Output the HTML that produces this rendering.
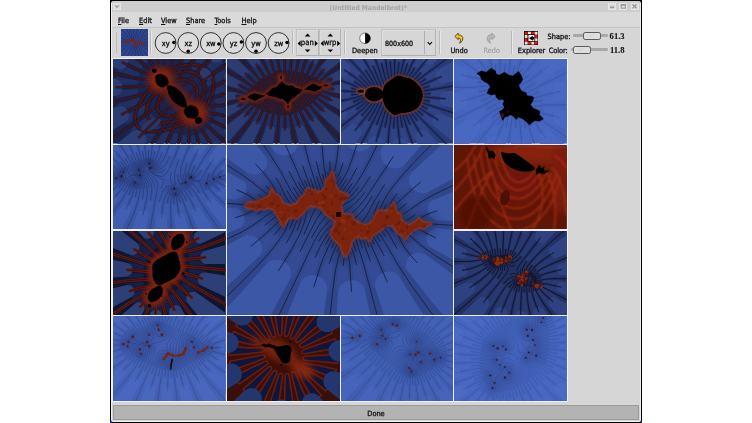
<!DOCTYPE html><html><head><meta charset="utf-8"><title>(Untitled Mandelbrot)*</title><style>
html,body{margin:0;padding:0;background:#fff;}
body{width:752px;height:423px;position:relative;overflow:hidden;font-family:"DejaVu Sans Condensed","DejaVu Sans","Liberation Sans",sans-serif;color:#000;}
.a{position:absolute;}
#win{left:110px;top:0;width:532.2px;height:423px;background:#000;}
#inner{left:111px;top:1.2px;width:530px;height:420.4px;background:#d6d6d6;border-radius:2.5px 2.5px 2px 2px;box-sizing:border-box;border-left:1px solid #f2f2f2;border-right:1px solid #ececec;border-bottom:1.6px solid #f0f0f0;}
#title{left:112px;top:1.2px;width:528px;height:10.6px;background:#cecece;border-radius:2px 2px 0 0;}
#titletxt{filter:blur(0.2px);left:329.6px;top:2.5px;height:10px;line-height:10px;white-space:nowrap;font-size:6.7px;font-weight:bold;color:#a4a4a4;}
.tb{top:2.6px;width:8.4px;height:7.8px;background:#dcdcdc;border:0.5px solid #e6e6e6;box-sizing:border-box;}
#menubar{left:112px;top:11.8px;width:528px;height:15.2px;background:#dadada;}
.mi,.lbl,#statustxt{-webkit-text-stroke-width:0.3px;filter:blur(0.2px);}
.mi{top:15.8px;height:10px;line-height:10px;font-size:7.35px;color:#111;white-space:nowrap;}
.mi u{text-decoration:underline;text-underline-offset:0.5px;text-decoration-thickness:0.6px;}
#toolbar{left:112px;top:27px;width:528px;height:30px;background:#d6d6d6;border-top:1px solid #c4c4c4;box-sizing:border-box;}
.sep{top:31px;width:1px;height:23px;background:#b8b8b8;box-shadow:1px 0 0 #e8e8e8;}
.lbl{font-size:7.35px;line-height:10px;height:10px;white-space:nowrap;color:#111;}
.num{font-family:"Liberation Serif","DejaVu Serif",serif;font-size:8.6px;font-weight:bold;-webkit-text-stroke-width:0.1px;}
.btn{box-sizing:border-box;border:1px solid;border-color:#c2c2c2 #b4b4b4 #b0b0b0 #c2c2c2;background:#d6d6d6;box-shadow:inset 0.5px 0.5px 0 #e6e6e6;}
#tilebg{left:112px;top:57px;width:528px;height:347px;background:#d6d6d6;}
#tilearea{left:112px;top:58px;width:456px;height:344px;background:#f0f0f0;}
.tile{overflow:hidden;}
.tile svg{display:block;}
#status{left:112.9px;top:405px;width:526.4px;height:14.9px;background:#b3b3b3;border:1px solid #9a9a9a;box-sizing:border-box;}
#statustxt{left:112px;top:407.6px;width:528px;height:11px;line-height:11px;text-align:center;font-size:7.35px;color:#111;}
</style></head><body>
<div class="a" id="win"></div><div class="a" id="inner"></div>
<div class="a" id="title"></div><div class="a" id="titletxt">(Untitled Mandelbrot)*</div>
<div class="a tb" style="left:113px"></div>
<div class="a tb" style="left:608px"></div>
<div class="a tb" style="left:619px"></div>
<div class="a tb" style="left:630.5px"></div>
<svg class="a" style="left:111px;top:1px" width="530" height="11" viewBox="111 1 530 11"><path d="M115.3 5.3 L117 7.3 L118.7 5.3" fill="none" stroke="#9a9a9a" stroke-width="1.1"/><rect x="610" y="6.4" width="4.2" height="1.8" fill="#9a9a9a"/><rect x="621.2" y="4.6" width="4.2" height="3.6" fill="none" stroke="#9a9a9a" stroke-width="1"/><rect x="620.7" y="4.1" width="5.2" height="1.6" fill="#9a9a9a"/><path d="M632.6 4.2 L636.6 8.2 M636.6 4.2 L632.6 8.2" stroke="#9a9a9a" stroke-width="1.3"/></svg>
<div class="a" id="menubar"></div><div class="a mi" style="left:118px"><u>F</u>ile</div><div class="a mi" style="left:139px"><u>E</u>dit</div><div class="a mi" style="left:161px"><u>V</u>iew</div><div class="a mi" style="left:186px"><u>S</u>hare</div><div class="a mi" style="left:214.5px"><u>T</u>ools</div><div class="a mi" style="left:241.5px"><u>H</u>elp</div>
<div class="a" id="toolbar"></div>
<div class="a" style="left:116px;top:32px;width:1px;height:21px;background:#bcbcbc"></div>
<div class="a tile" style="left:121px;top:29px;width:27px;height:27px"><svg width="27" height="27" viewBox="0 0 27 27"><rect width="27" height="27" fill="#2e4690"/><path d="M23.1 14.6L30 15.2M21.2 14.9L23.8 16.6 29.7 19M19.8 15.4L23.1 18.7 29.8 23.7M17.5 14.8L21.9 21.2 29.2 29.7M16.2 15.6L23 29.4M15 16.3L15.8 18.6 18.3 29.5M14.2 18.4L14.2 29.6M13.3 17.3L12.2 20.2 9.9 29.7M13.6 14.8L12.2 16.2 10.6 18.5 5.1 29.9M12.7 13.1L10.7 14.9 -0.9 29.9M9 13.8L4.9 18.3 -2.7 24.5M7.4 13.3L3.1 16.5 -2.6 19.3M3.9 13.7L2.1 14.3 -2.7 15.3M3.3 12.4L-2.8 11.8M5.7 11.8L2.8 10.2 -2.4 8.1M6.9 11.3L3.8 8.1 -3 3.1M9.5 11.7L4.7 5.2 -2.1 -2.8M10.9 11L4.1 -2.5M11.3 9.1L8.8 -2.5M12.4 9.9L12.9 6.1 13 -3M13.1 11.7L14.7 8 17.3 -2.9M14 13.7L15.6 11 22.1 -3M16.7 13.7L17.6 11.2 19.5 8.2 28 -2.9M18.9 12.2L22.7 8.2 29.8 2.5M19.4 13.5L23.3 10.8 29.6 7.7M21.8 13.7L24.3 12.7 29.7 11.6" fill="none" stroke="#1a2144" stroke-width="0.7" opacity="0.7"/><path d="M3.7 13 L5.4 12.4 L6.4 11.6 L7.3 12.8 L8.5 13.2 L9.5 12.2 L10.6 12 L11.4 11.1 L11.8 9.7 L12.2 11.3 L13 12.2 L13.4 13.4 L13.9 14.4 L14.3 15.8 L13.9 17.7 L15.1 14.6 L16.3 15 L17.2 14.2 L18.2 14 L18.8 12.8 L19.4 14.2 L20.3 14.8 L21.5 14.4 L22.5 14.5" fill="none" stroke="#7a2410" stroke-width="1.7" stroke-linejoin="round" stroke-linecap="round"/></svg></div>
<div class="a sep" style="left:150.4px"></div>
<div class="a sep" style="left:291.6px"></div>
<div class="a sep" style="left:344px"></div>
<div class="a sep" style="left:438.6px"></div>
<div class="a sep" style="left:510.6px"></div>
<svg class="a" style="left:150px;top:28px" width="145" height="29" viewBox="150 28 145 29"><circle cx="165.6" cy="43" r="10.4" fill="#dcdcdc" stroke="#1c1c1c" stroke-width="0.9"/><circle cx="173.9" cy="42.6" r="1.75" fill="#000"/><circle cx="188.2" cy="43" r="10.4" fill="#dcdcdc" stroke="#1c1c1c" stroke-width="0.9"/><circle cx="188.2" cy="51.3" r="1.75" fill="#000"/><circle cx="210.8" cy="43" r="10.4" fill="#dcdcdc" stroke="#1c1c1c" stroke-width="0.9"/><circle cx="218.8" cy="44.0" r="1.75" fill="#000"/><circle cx="233.4" cy="43" r="10.4" fill="#dcdcdc" stroke="#1c1c1c" stroke-width="0.9"/><circle cx="241.4" cy="42.0" r="1.75" fill="#000"/><circle cx="256.0" cy="43" r="10.4" fill="#dcdcdc" stroke="#1c1c1c" stroke-width="0.9"/><circle cx="256.0" cy="51.3" r="1.75" fill="#000"/><circle cx="278.6" cy="43" r="10.4" fill="#dcdcdc" stroke="#1c1c1c" stroke-width="0.9"/><circle cx="287.0" cy="42.6" r="1.75" fill="#000"/></svg><div class="a lbl" style="left:155.7px;width:20px;top:39.2px;text-align:center;font-size:7.5px">xy</div><div class="a lbl" style="left:178.29999999999998px;width:20px;top:39.2px;text-align:center;font-size:7.5px">xz</div><div class="a lbl" style="left:200.9px;width:20px;top:39.2px;text-align:center;font-size:7.5px">xw</div><div class="a lbl" style="left:223.5px;width:20px;top:39.2px;text-align:center;font-size:7.5px">yz</div><div class="a lbl" style="left:246.1px;width:20px;top:39.2px;text-align:center;font-size:7.5px">yw</div><div class="a lbl" style="left:268.70000000000005px;width:20px;top:39.2px;text-align:center;font-size:7.5px">zw</div>
<div class="a btn" style="left:296px;top:29px;width:22.6px;height:27.4px"></div>
<div class="a lbl" style="left:296px;width:22.6px;top:38.4px;text-align:center;font-size:7.6px">pan</div>
<svg class="a" style="left:296px;top:29px" width="22.6" height="27.4" viewBox="0 0 22.6 27.4"><path d="M8.8 7.4 L11.600000000000001 4.6 L14.400000000000002 7.4Z M8.8 20.4 L11.600000000000001 23.2 L14.400000000000002 20.4Z M4.6 11.6 L1.6 14.4 L4.6 17.2Z M18.8 11.6 L21.8 14.4 L18.8 17.2Z" fill="#000"/></svg>
<div class="a btn" style="left:319px;top:29px;width:22px;height:27.4px"></div>
<div class="a lbl" style="left:319px;width:22px;top:38.4px;text-align:center;font-size:7.6px">wrp</div>
<svg class="a" style="left:319px;top:29px" width="22" height="27.4" viewBox="0 0 22 27.4"><path d="M8.5 7.4 L11.3 4.6 L14.100000000000001 7.4Z M8.5 20.4 L11.3 23.2 L14.100000000000001 20.4Z M4.6 11.6 L1.6 14.4 L4.6 17.2Z M18.2 11.6 L21.2 14.4 L18.2 17.2Z" fill="#000"/></svg>
<svg class="a" style="left:357px;top:31px" width="16" height="14" viewBox="357 31 16 14"><circle cx="365.1" cy="38.3" r="5.3" fill="#fff" stroke="#000" stroke-width="0.5"/><path d="M365.1 33 A5.3 5.3 0 0 1 365.1 43.6Z" fill="#000"/></svg>
<div class="a lbl" style="left:352px;top:46px">Deepen</div>
<div class="a btn" style="left:381px;top:29px;width:54.5px;height:27px"></div>
<div class="a lbl" style="left:385px;top:38.6px;font-size:7.1px">800x600</div>
<div class="a" style="left:424px;top:31px;width:1px;height:23px;background:#b0b0b0"></div>
<svg class="a" style="left:426px;top:40px" width="8" height="7" viewBox="0 0 8 7"><path d="M1.6 2 L3.8 4.4 L6 2" fill="none" stroke="#000" stroke-width="1.1"/></svg>
<svg class="a" style="left:453px;top:32px" width="12" height="12" viewBox="0 0 12 12"><path d="M1.8 4.4 L5.2 1.2 L5.2 2.8 C8.6 2.8 10.2 4.8 9.8 7 C9.5 9 8.2 10.6 6.6 11.2 C7.4 9.6 7.8 8.2 7.2 7 C6.8 6.2 6 5.9 5.2 5.9 L5.2 7.6Z" fill="#f4c428" stroke="#3a2808" stroke-width="0.75" stroke-linejoin="round"/></svg>
<svg class="a" style="left:485px;top:32px" width="12" height="12" viewBox="0 0 12 12"><g transform="translate(12,0) scale(-1,1)"><path d="M1.8 4.4 L5.2 1.2 L5.2 2.8 C8.6 2.8 10.2 4.8 9.8 7 C9.5 9 8.2 10.6 6.6 11.2 C7.4 9.6 7.8 8.2 7.2 7 C6.8 6.2 6 5.9 5.2 5.9 L5.2 7.6Z" fill="#b8bcb2" stroke="#8e8e8e" stroke-width="0.7" stroke-linejoin="round"/></g></svg>
<div class="a lbl" style="left:450.5px;top:46px">Undo</div>
<div class="a lbl" style="left:483.5px;top:46px;color:#a2a2a2;text-shadow:0.5px 0.5px 0 #f0f0f0">Redo</div>
<svg class="a" style="left:524px;top:31px" width="14.4" height="14.4" viewBox="0 0 14 14"><rect x="0" y="0" width="14" height="14" fill="#000"/><rect x="0.7" y="0.7" width="2.9" height="2.9" fill="#e01818"/><rect x="0.7" y="3.9000000000000004" width="2.9" height="2.9" fill="#f4d8d8"/><rect x="0.7" y="7.1000000000000005" width="2.9" height="2.9" fill="#e01818"/><rect x="0.7" y="10.3" width="2.9" height="2.9" fill="#f4d8d8"/><rect x="3.9000000000000004" y="0.7" width="2.9" height="2.9" fill="#f4d8d8"/><rect x="3.9000000000000004" y="10.3" width="2.9" height="2.9" fill="#e01818"/><rect x="7.1000000000000005" y="0.7" width="2.9" height="2.9" fill="#e01818"/><rect x="7.1000000000000005" y="10.3" width="2.9" height="2.9" fill="#f4d8d8"/><rect x="10.3" y="0.7" width="2.9" height="2.9" fill="#f4d8d8"/><rect x="10.3" y="3.9000000000000004" width="2.9" height="2.9" fill="#e01818"/><rect x="10.3" y="7.1000000000000005" width="2.9" height="2.9" fill="#f4d8d8"/><rect x="10.3" y="10.3" width="2.9" height="2.9" fill="#e01818"/><rect x="3.6" y="3.2" width="7.2" height="7.4" fill="#000"/><rect x="4.3" y="3.9" width="5.8" height="6" fill="#f8f0f0"/><path d="M4.8 7 L8.6 4.6 L8.6 9.4Z" fill="#000"/><rect x="8.4" y="5.8" width="1.4" height="2.4" fill="#000"/></svg>
<div class="a lbl" style="left:517.8px;top:46px">Explorer</div>
<div class="a lbl" style="left:547.6px;top:31.6px">Shape:</div>
<div class="a lbl" style="left:548.8px;top:45.9px;letter-spacing:-0.1px">Color:</div>
<div class="a lbl num" style="left:609.6px;top:31px">61.3</div>
<div class="a lbl num" style="left:609.9px;top:45.4px">11.8</div>
<div class="a" style="left:572.9px;top:34.2px;width:34.80000000000007px;height:2.8px;background:#a8a8a8;border-radius:1.2px"></div>
<div class="a" style="left:583px;top:31.5px;width:18px;height:8.2px;background:#dedede;border:0.8px solid #5a5a5a;border-radius:2.2px;box-sizing:border-box"></div>
<svg class="a" style="left:589px;top:33.6px" width="6" height="4" viewBox="0 0 6 4"><path d="M0.6 3 L2.6 0.8 M2.6 3 L4.6 0.8" stroke="#a8a8a8" stroke-width="0.6"/><path d="M1.2 3.2 L3.2 1 M3.2 3.2 L5.2 1" stroke="#f4f4f4" stroke-width="0.5"/></svg>
<div class="a" style="left:571px;top:48.300000000000004px;width:36.700000000000045px;height:2.8px;background:#a8a8a8;border-radius:1.2px"></div>
<div class="a" style="left:572.9px;top:45.6px;width:18px;height:8.2px;background:#dedede;border:0.8px solid #5a5a5a;border-radius:2.2px;box-sizing:border-box"></div>
<svg class="a" style="left:578.9px;top:47.7px" width="6" height="4" viewBox="0 0 6 4"><path d="M0.6 3 L2.6 0.8 M2.6 3 L4.6 0.8" stroke="#a8a8a8" stroke-width="0.6"/><path d="M1.2 3.2 L3.2 1 M3.2 3.2 L5.2 1" stroke="#f4f4f4" stroke-width="0.5"/></svg>
<div class="a" id="tilebg"></div><div class="a" id="tilearea"></div>
<div class="a tile" style="left:112.80px;top:59.10px;width:112.80px;height:84.60px"><svg width="100%" height="100%" preserveAspectRatio="none" viewBox="0 0 113 85"><rect width="113" height="85" fill="#19244e"/><filter id="g11" x="-50%" y="-50%" width="200%" height="200%"><feGaussianBlur stdDeviation="3.0"/></filter><filter id="g11b" x="-50%" y="-50%" width="200%" height="200%"><feGaussianBlur stdDeviation="0.5"/></filter><path d="M123.2 62.6L103.9 57.2C101.3 56.5 100.3 60.5 102.8 61.6L120.2 69.2ZM109.2 84.3L95.9 70.8C94.1 69 91.2 71.5 92.6 73.5L103.8 88.9ZM87 97.4L82.1 78C81.5 75.3 77.4 76.6 77.7 79.4L79.9 99.3ZM60.2 98.1L65 77.7C65.7 74.7 61.3 72.8 60.2 75.7L52.7 96.4ZM34.2 86.7L47.8 68.1C49.9 65.3 45.8 61.6 43.5 64.2L27.5 82.1ZM13.3 66L33.1 52.5C35.9 50.6 33.1 46 30.1 47.6L9.9 58.6ZM3.5 39.1L24 34.8C27 34.2 25.9 29.7 22.9 29.9L1.9 31.6ZM4.7 12.2L24 17.6C26.6 18.3 27.5 14.2 25.1 13.2L6.7 5.2ZM17.7 -10.2L31 3.3C32.8 5.2 35.8 2.6 34.3 0.5L23.1 -14.9ZM40.4 -22.5L45 -4.1C45.7 -1.4 49.9 -1.8 49.6 -4.5L47.4 -24.4ZM67.1 -23.2L62.2 -2.8C61.5 0.2 66.1 1.7 67.1 -1.2L74.7 -21.8ZM93.1 -11.9L79.4 6.6C77.3 9.5 81.4 13.2 83.7 10.6L99.7 -7.3ZM113.4 9.1L94.4 22.1C91.6 24 94.5 28.6 97.5 27L117.7 15.9ZM124.2 35.5L103.7 39.8C100.7 40.4 101.6 45 104.6 44.7L125.5 43.1ZM117.7 74.6L100.5 64.5C98.3 63.2 96.2 66.5 98.2 68.1L113 80ZM98.9 92L89.7 75.4C88.4 73.1 84.7 74.7 85.6 77.1L92.7 95.8ZM73.8 99.2L73.8 79.2C73.8 76.3 69.5 75.3 69.1 78.2L66.3 99ZM46.8 93.6L56.3 73.8C57.7 70.8 53.5 67.8 51.8 70.6L39.7 90.2ZM22.8 77.3L40.1 60.7C42.6 58.2 38.9 54 36.1 56.2L17.4 71.2ZM6.5 53L27.6 43.8C30.5 42.5 28.4 37.9 25.4 38.9L4.3 45.4ZM2 25.4L23 25.9C25.8 26 25.5 21.6 22.7 21.2L3 18ZM10 0.3L26.5 9.8C28.7 11.1 30.8 7.7 28.7 6.1L13.9 -5.8ZM28.1 -18L37.3 -1.4C38.6 0.9 42.4 -0.7 41.4 -3.2L34.7 -20.9ZM53.5 -24.3L53.4 -4.3C53.4 -1.5 57.8 -0.5 58.2 -3.3L61 -24.1ZM80.8 -19.8L70.9 1C69.5 4 73.7 7 75.4 4.2L87.5 -15.4ZM104.4 -2.5L87.1 14.2C84.5 16.6 88.6 20.6 91.4 18.3L110.1 3.3ZM120.2 22L100 30.8C97.1 32.1 99.2 36.7 102.3 35.7L123.3 29.2ZM125.1 49.2L104.1 48.7C101.4 48.7 101.6 53 104.3 53.4L124.1 56.6Z" fill="#222f5e" /><path d="M137.8 70L122.7 64.6C113.6 61.3 107.3 73.1 115 79L137.3 95.9ZM129.2 109.4L108.4 86.5C101.9 79.2 91 87.1 95.1 96L101.3 109.6ZM87.9 109.4L85.2 98.7C82.8 88.9 68.9 90.4 68.4 100.4L67.9 109.4ZM55.5 109.1L57.9 98.3C60.2 88 46 83 41.1 92.4L32.3 109.2ZM14.9 109.2L31.4 86.6C37.9 77.7 26.9 66.4 18.4 73.4L-24.8 108.9ZM-24.4 85.6L11.7 64.2C21 58.8 14.5 44.8 4.2 47.8L-24.7 56ZM-24.8 40.2L2 37.1C12.1 36 11.9 21.7 1.9 19.9L-24.7 15.4ZM-24.9 -0.7L4.2 9.9C13.5 13.3 19.7 1.2 11.9 -4.7L-14.4 -24.7ZM7.1 -24.9L18.5 -12.3C25 -5.1 36.4 -12.2 32.4 -21.1L30.7 -24.8ZM105.3 -24.7L95.9 -11.8C89.3 -2.9 100.6 8.2 109.1 1.2L137.6 -22.3ZM137.3 -2.5L115.8 10.3C106.5 15.9 113.1 29.9 123.5 26.8L137.9 22.6ZM137.6 36L125.7 37.5C115.6 38.7 115.1 53 125.2 54.7L137.1 56.6Z" fill="#2c3d74" /><g filter="url(#g11b)" fill="none" stroke-linecap="round"><g stroke="#0f1636" stroke-width="4.2" opacity="0.7"><path d="M52 12 C97 -8 114 22 90 52"/><path d="M57 16 C88 4 100 26 86 47"/><path d="M62 22 C82 16 88 32 82 44"/><path d="M40 27 C8 60 18 88 74 64"/><path d="M44 31 C24 56 32 74 71 60"/><path d="M50 34 C38 50 46 62 69 56"/></g><g stroke="#541406" stroke-width="1.9"><path d="M52 12 C97 -8 114 22 90 52"/><path d="M57 16 C88 4 100 26 86 47"/><path d="M62 22 C82 16 88 32 82 44"/><path d="M40 27 C8 60 18 88 74 64"/><path d="M44 31 C24 56 32 74 71 60"/><path d="M50 34 C38 50 46 62 69 56"/></g></g><ellipse cx="93" cy="15" rx="7" ry="5" fill="#2a3a70" transform="rotate(45 93 15)" /><ellipse cx="38" cy="66" rx="11" ry="5" fill="#283768" transform="rotate(-30 38 66)" /><g filter="url(#g11b)"><path d="M86.4 53.5L96.3 54.1 106.2 55.7 119.9 58.7 137.3 63.1M85.9 60.8L88.7 62.3 95.6 68.2 137.7 106.6M81.2 58.5L80.8 59.9 81.1 64.9 83.1 74.7 87.4 89.1 94.5 109.9M74.1 59L70.3 67 67.2 77.5 64.4 91.3 61.8 109.1M71.1 52.6L67.6 53.2 63.1 55.3 58.5 59.1 53.8 64.3 42.1 80.5 24 109.3M51.7 28.2L52.2 33 50.9 37.8 48.2 42 42.6 47.7 34.1 54.7 21.3 64.3 -24.5 96.5M44.9 26.9L40.2 30.2 35.8 32.6 30.3 34.9 22.7 37.5 3.3 42.3 -24.1 47.8M41.6 21.2L29.7 20.3 16.9 18.1 -0.6 14 -24.8 7.5M43.3 14.6L42.1 13.6 38.3 11.7 33.6 8 -2.7 -24.9M46.3 15.7L46 9 44.5 1.1 41.5 -9.5 36.5 -24.7M53 15.8L56.5 8.8 59.3 0.3 61.8 -10.5 64.1 -24.3M56 22.2L59.6 21.6 64.1 19.4 68 16.3 72.2 12 82.4 -1.6 97 -24.3M75.5 47L75.2 41.5 76.1 37.6 78.7 33.3 83.4 28.2 91 21.7 101.4 13.8 137.2 -11.7M82.4 48L91 42.5 101.2 38.4 115.6 34.3 137.1 29.6M85.4 56.7L92 58.9 98.5 61.6 119 71.9M83.5 59.3L84.3 60.5 85.2 64.1 87.6 68.5 101.4 90.5M77.6 59.7L76.3 66.4 75.8 75.3 76 86.3 76.9 99.3M71.5 56.4L68.6 59 65.9 62 61 69.5 55.7 80.3 49.7 95.1M72.6 48.9L68.7 46.3 64.9 45.2 62 45.7 58.4 47.5 53.6 51.1 47.7 56.5 25.4 79.4M48.1 28.1L45.8 32.1 43.3 35.3 36.4 41 25.2 47.6 8.1 55.9M42.7 24.4L34.3 26.5 26.4 27.6 15.4 28.3 2.4 28.5M42.9 18.1L29.3 13.1 8.8 2.9M42.2 11.5L41.3 9 38.4 3.8 25.6 -16.5M49.6 15L51 7.5 51.5 -0.5 51.3 -11.5 50.5 -24.5M55.1 18.6L57.9 16.4 60.6 13.5 65.7 6.1 71.1 -4.6 77.6 -20.3M54.5 25.9L58.4 28.5 62.3 29.6 65.2 29.2 68.8 27.4 73.6 23.8 79.4 18.3 102.5 -5.3M79.1 46.9L82.4 41.6 84.3 39.3 91.2 33.6 102.4 27 119.5 18.7M85.4 50.3L92.9 48.3 100.9 47.1 111.8 46.4 124.8 46.2" fill="none" stroke="#0f1636" stroke-width="2.8" opacity='0.65'/><path d="M86.4 53.5L96.3 54.1 106.2 55.7 119.9 58.7 137.3 63.1M85.9 60.8L88.7 62.3 95.6 68.2 137.7 106.6M81.2 58.5L80.8 59.9 81.1 64.9 83.1 74.7 87.4 89.1 94.5 109.9M74.1 59L70.3 67 67.2 77.5 64.4 91.3 61.8 109.1M71.1 52.6L67.6 53.2 63.1 55.3 58.5 59.1 53.8 64.3 42.1 80.5 24 109.3M51.7 28.2L52.2 33 50.9 37.8 48.2 42 42.6 47.7 34.1 54.7 21.3 64.3 -24.5 96.5M44.9 26.9L40.2 30.2 35.8 32.6 30.3 34.9 22.7 37.5 3.3 42.3 -24.1 47.8M41.6 21.2L29.7 20.3 16.9 18.1 -0.6 14 -24.8 7.5M43.3 14.6L42.1 13.6 38.3 11.7 33.6 8 -2.7 -24.9M46.3 15.7L46 9 44.5 1.1 41.5 -9.5 36.5 -24.7M53 15.8L56.5 8.8 59.3 0.3 61.8 -10.5 64.1 -24.3M56 22.2L59.6 21.6 64.1 19.4 68 16.3 72.2 12 82.4 -1.6 97 -24.3M75.5 47L75.2 41.5 76.1 37.6 78.7 33.3 83.4 28.2 91 21.7 101.4 13.8 137.2 -11.7M82.4 48L91 42.5 101.2 38.4 115.6 34.3 137.1 29.6M85.4 56.7L92 58.9 98.5 61.6 119 71.9M83.5 59.3L84.3 60.5 85.2 64.1 87.6 68.5 101.4 90.5M77.6 59.7L76.3 66.4 75.8 75.3 76 86.3 76.9 99.3M71.5 56.4L68.6 59 65.9 62 61 69.5 55.7 80.3 49.7 95.1M72.6 48.9L68.7 46.3 64.9 45.2 62 45.7 58.4 47.5 53.6 51.1 47.7 56.5 25.4 79.4M48.1 28.1L45.8 32.1 43.3 35.3 36.4 41 25.2 47.6 8.1 55.9M42.7 24.4L34.3 26.5 26.4 27.6 15.4 28.3 2.4 28.5M42.9 18.1L29.3 13.1 8.8 2.9M42.2 11.5L41.3 9 38.4 3.8 25.6 -16.5M49.6 15L51 7.5 51.5 -0.5 51.3 -11.5 50.5 -24.5M55.1 18.6L57.9 16.4 60.6 13.5 65.7 6.1 71.1 -4.6 77.6 -20.3M54.5 25.9L58.4 28.5 62.3 29.6 65.2 29.2 68.8 27.4 73.6 23.8 79.4 18.3 102.5 -5.3M79.1 46.9L82.4 41.6 84.3 39.3 91.2 33.6 102.4 27 119.5 18.7M85.4 50.3L92.9 48.3 100.9 47.1 111.8 46.4 124.8 46.2" fill="none" stroke="#541406" stroke-width="1.25" /></g><g filter="url(#g11)"><ellipse cx="47.9" cy="20.8" rx="13" ry="12.5" fill="#86220c" /><ellipse cx="80.5" cy="55" rx="14" ry="12.5" fill="#86220c" /><ellipse cx="64.2" cy="37.8" rx="19" ry="9.5" fill="#701c0a" transform="rotate(49.2 64.2 37.8)" /></g><ellipse cx="41.4" cy="11.9" rx="2.4" ry="2.1" fill="#000" /><path d="M42.6 17.4C43.3 15.8 45.9 15 47.6 15C49.4 15 51.7 16 53.1 17.4C54.5 18.8 55.7 21.9 55.8 23.4C55.9 24.9 54.8 25.8 53.6 26.6C52.4 27.4 50.2 28.7 48.5 28.4C46.8 28.1 44.5 26.6 43.5 24.8C42.5 23 41.9 19 42.6 17.4Z" fill="#000"/><path d="M54.4 26.4 C64.5 26 75 38.5 73.9 49 C63 48.8 53.2 37 54.4 26.4Z" fill="#000"/><path d="M71.3 50.7C72.2 49.1 75.4 46.7 77.5 46.4C79.6 46.1 82.6 47.4 84 48.9C85.4 50.4 86.1 53.6 85.8 55.4C85.5 57.2 83.9 59 82.2 59.7C80.5 60.4 77.4 60 75.7 59.4C74 58.8 72.7 57.2 72 55.8C71.3 54.3 70.4 52.3 71.3 50.7Z" fill="#000"/><ellipse cx="85.7" cy="61.6" rx="3.7" ry="3.3" fill="#000" transform="rotate(-30 85.7 61.6)" /></svg></div>
<div class="a tile" style="left:226.60px;top:59.10px;width:113.20px;height:84.60px"><svg width="100%" height="100%" preserveAspectRatio="none" viewBox="0 0 113 85"><rect width="113" height="85" fill="#1a2652"/><filter id="g12" x="-50%" y="-50%" width="200%" height="200%"><feGaussianBlur stdDeviation="1.5"/></filter><filter id="g12b" x="-50%" y="-50%" width="200%" height="200%"><feGaussianBlur stdDeviation="0.45"/></filter><path d="M106.1 37.2L95.8 33.2C94.4 32.6 92.7 34.2 94 34.9L104.7 40.3ZM100.7 49L89.7 40.3C88.4 39.3 86.8 41.6 88.1 42.8L98.5 52.2ZM90.9 59.4L81.6 47.6C80.5 46.1 78.3 48.3 79.4 49.9L87.3 61.4ZM78.2 67.1L72 53.5C71.3 51.8 68.8 53.4 69.4 55.2L74.3 68.3ZM63.9 71.6L61.7 56.7C61.5 55 58.7 55.2 58.8 57L59.8 71.9ZM48.9 71.4L50.7 56.5C50.9 54.6 47.8 54.7 47.5 56.6L44.7 71.3ZM34.5 67.7L39.3 54.5C39.9 52.8 37 51.9 36.2 53.7L30.7 66.5ZM22 61L29.2 50.1C30.1 48.7 27.7 47.5 26.7 48.9L18.7 59.1ZM12.5 52L21.7 44.3C22.8 43.3 20.8 41.9 19.7 42.8L15 46.5 10.7 49.2ZM7.4 41.5L13.2 40.6C15 40.3 17.8 40.2 16.1 39.6L13.1 38.7 8.1 38.4ZM9 30.1L19.2 34C20.6 34.6 22.4 32.9 21 32.3L10.3 26.9ZM15.1 18.7L25.3 26.7C26.7 27.8 28.2 25.4 26.9 24.3L17.3 15.6ZM24.7 8.4L33.3 19.5C34.5 20.9 37.1 19.6 36.1 18.1L27.7 5.7ZM37.2 0.6L42.9 13.4C43.7 15.1 46.5 14.4 45.9 12.6L40.8 -1.5ZM51.4 -3.8L53.6 11C53.9 12.9 56.7 11.7 56.5 9.8L55.6 -4.2ZM66.5 -4.6L64.8 10.3C64.6 12.2 67.5 13.4 67.9 11.5L70.5 -3.3ZM81 -0.6L76 13.5C75.4 15.3 78.3 16.2 79 14.5L84.9 0.7ZM93.5 6.3L86.4 17.2C85.5 18.6 87.8 19.8 88.8 18.5L96.7 8.2ZM102.8 15.4L98.1 19.1 93.8 23.2C92.7 24.3 94.6 25.7 95.8 24.7L99.5 21.4 104.6 18.2ZM107.7 25.7L101.9 26.6C99.9 26.8 96.7 26.9 98.6 27.5L102 28.6 108 28.8ZM104.2 43.3L93 36.7C91.6 35.9 90.1 37.9 91.4 38.8L102 46.2ZM95.8 54L85.9 44.1C84.7 42.8 82.4 44.7 83.6 46.1L93.5 57.4ZM84.9 63.7L77 50.9C76 49.3 73.6 51.1 74.4 52.7L81.4 66ZM71.2 69.7L67.2 56.3C66.6 54.5 63.7 54.5 64.1 56.3L67.3 70.9ZM56.4 71.8L56.3 56.9C56.3 55 53.3 55.4 53.2 57.3L52.3 72.3ZM41.4 70.8L45.1 55.3C45.5 53.4 42.4 53.3 41.8 55.1L37.5 69.5ZM27.8 65L34 52.5C34.8 50.9 32.3 49.4 31.4 50.9L24.4 63ZM17 56.6L24.9 47.6C25.9 46.5 24.1 44.8 23 45.9L14.4 54.2ZM9.6 46.8L14.9 44 18.8 40.9C20.1 39.8 17.3 39.6 15.8 40.6L13.6 42.1 8.9 43.7ZM7.8 35.9L12.8 36.6 18.5 38.3C19.8 38.6 20.1 36.4 18.8 36L8.3 32.7ZM11.7 24.4L22.1 30.4C23.4 31.2 25 29.2 23.7 28.3L13 20.9ZM19.2 13.1L29.1 23C30.3 24.3 32.5 22.4 31.4 21L22.2 10.4ZM30.7 4.1L37.9 16.1C38.9 17.7 41.8 16.8 40.9 15.1L34 1.8ZM44.2 -1.9L48.2 11.5C48.7 13.2 51.4 12.3 51.1 10.5L48.1 -3.2ZM58.9 -5.1L59.1 9.9C59.1 11.8 62.1 12.4 62.2 10.5L63.1 -4.5ZM73.9 -2.8L70.5 11.8C70 13.7 72.9 14.8 73.5 12.9L77.8 -1.4ZM87.7 2.2L81.6 14.7C80.8 16.4 83.3 17.9 84.2 16.4L91.1 4.2ZM98.5 10.7L90.6 19.8C89.6 21 91.4 22.7 92.5 21.6L101 13.2ZM105.7 20.5L100.4 23.3 97 26.3C95.2 27.9 98.7 26.3 100.9 25.5L107.2 23.3ZM107.3 31.4L102.4 30.6 97.6 29.2C96.2 28.8 94.9 30.9 96.3 31.3L106.8 34.5Z" fill="#212e60" /><path d="M137.7 46.1L119.2 41.9 106.7 38.4C102 37.1 99.2 43.7 103.5 45.9L117.7 53.2 137.8 62.3ZM137.9 73.8L115.7 60.4 100.7 50.4C96.3 47.4 90.8 53.2 94.6 56.9L111.8 73.5 137.3 96.1ZM133.1 109.6L107.7 81.3 90.4 60.6C86.8 56.3 80.1 61.4 82.9 66.2L108.2 109.3ZM96 109.8L77.6 68.7C75.4 63.5 67.3 66.1 68.6 71.6L78 109.4ZM67.9 109.4L62.9 72.7C62.2 67.1 53.6 67.8 53.4 73.5L51.9 109.5ZM42.1 109.7L47.7 72.1C48.5 66.5 40.2 65 38.4 70.3L25.3 109.2ZM13.9 109.4L25.2 86 32.9 68.6C35.1 63.7 28 59.8 24.9 64.2L12 83.2 -7.9 109.5ZM-24.6 109.5L4 80.1 20.4 61.3C23.7 57.5 18.2 52.5 14.3 55.5L-0.7 67.2 -24.5 83.7ZM-24.8 71.5L-2.6 59.9 11.1 51.8C15 49.5 12.5 43.7 8.2 44.9L-24.5 54.3ZM-24.4 44.8L6.3 40.8C10.7 40.2 11.5 33.9 7.1 33.4L-24.7 30ZM-24.6 20.7L-5.1 25.1 8.4 28.9C13.1 30.2 15.8 23.5 11.5 21.3L-2.8 14 -24.6 4.1ZM-24.7 -7.7L-1.5 6.2 14.3 16.8C18.7 19.7 24.2 13.9 20.4 10.2L5.4 -4.4 -17 -24.4ZM-1.9 -24.7L13.2 -7.4 24.6 6.5C28.2 10.8 35.4 6.4 32.6 1.6L17.7 -24.4ZM27.3 -24.7L37.8 -0.9C40 4.2 48.1 1.6 46.8 -3.8L41.8 -24.2ZM49.8 -24.8L52.5 -5C53.2 0.6 61.7 0 62 -5.7L62.7 -24.7ZM70.5 -24L67.8 -5.2C67 0.4 75.4 2.1 77.1 -3.2L83.9 -24.2ZM92.8 -24.3L82.6 -1.5C80.4 3.5 87.6 7.5 90.6 3L98.9 -9.5 110.1 -24.9ZM122.5 -24.4L106 -6.9 95 6C91.8 9.8 97.2 14.9 101.1 11.8L115.3 0.7 137.4 -14.7ZM137.4 -2.8L117.1 8 104.2 15.6C100.3 17.9 103.6 23.3 108 22.1L137.8 13.6ZM137.6 22.8L108.8 26.5C104.5 27 103.6 33.3 108 33.8L137.8 37.1Z" fill="#2c3c72" /><g filter="url(#g12b)"><path d="M93.4 31L100.7 34.1 108.4 36.3 120.2 38.7 137.9 41.6M84 32.3L87.7 36.8 90.6 39.6 101 47.4 115.6 56.1 137.7 67.8M73.4 34.8L86.1 51.2 97.9 64.7 114.5 82.1 138 105.3M65.8 39.8L72.1 50.9 87.2 81.3 102 109.7M61.5 49L72.9 109.6M55.3 40.8L53.3 48.1 52.2 55 47 109.7M44.7 38.2L41.5 51.5 36.3 67.7 29.2 86.4 19.7 109.5M34.7 39.7L32.4 46 29.8 51.4 26.2 57.5 21.2 64.9 7 83 -15.9 109.5M25.4 41.5L18.8 48.6 10.2 55.5 -3.1 64.3 -24.5 77.3M13.9 41L4.7 43.4 -24.6 49.5M36.9 36.7L33.4 36.6 31.3 37.1 22.6 36.7 14.3 33.1 6.7 30.9 -6.1 28.4 -24.9 25.4M32 35L23.7 26.9 13.2 19.2 -2.3 10.1 -24.5 -1.5M41.8 36L42.3 34.5 41.9 33.6 34.4 23 26.3 12.8 11.6 -3.5 -9.4 -24.9M48.4 27.6L22.8 -24.3M53.7 17.6L45.9 -24.2M61.4 26.3L63.4 10.8 66.5 -24M70.7 29.5L70.7 28.2 72.2 22.4 77 6 81.9 -8.1 88.5 -24.9M81.1 26.8L85.3 16.7 92 5.6 101.6 -7.2 116.2 -24.9M89.3 26.2L98.1 17.5 105.2 11.9 117.6 3.5 137.3 -8.4M101.8 25.9L137.9 18.2M83.9 31.3L88.6 31.5 91.1 34 94.4 36.4 105 42M76.3 31L87.7 44.2 97.2 53.1M69 37.1L74.1 44.1 86.1 62.6M62.5 43.5L64.9 47.4 66.6 51.1 72.8 69M59.6 43.6L58.2 48 57.6 51.9 58.1 71.9M50.9 38.9L50.7 38 50.3 38.7 49.5 41.2 43.2 70.6M39.5 35.5L39.4 39.3 37 48 33.7 56.3 29.4 65.4M28.9 42.7L27.9 44.9 25.2 49.1 17.5 58.2M21.6 40.2L15.3 45 10.1 48M20 39L17.5 39.1 13.1 37.7 8.1 37.2M27.6 35.2L26.3 35 19.8 30.3 11 25.6M38 34.7L27.3 22.9 17.8 14M44.8 29.4L28.9 4.5M52.2 24.8L48 14.9 42.3 -2.2M58.6 26.5L58.1 26.8 56.9 26.3 56.2 24.5 57.8 14.8 57.3 -4.2M65.6 26.4L67 22 72.3 -3.4M75.5 30.4L77 24 79.6 16.4 86.1 1.8M86.2 24.7L91.5 16.7 97.3 9.8M95.1 26.7L100 22.4 105.2 19.3M96 27.9L102.4 29.6 107.4 30.1M90.7 31.4L94.5 33.8M80.4 31.6L88.6 41.2M69.3 35.4L69.8 35.1 71.1 35.9 80 48M64.5 39L63.4 39.4 63.2 40.3 67.3 47.1 70.3 53.4M60.2 48.4L59.9 50.9 60.2 55.9M52.2 39.8L52.2 41.2 49.2 55.9M42.1 37.4L40.8 44.1 38.2 52.7M31.8 40.7L30.2 45.1 28.4 48.7M24.4 40.3L21.8 42.6M23 34.9L21.4 33.9M37 35.9L34.6 34.6 27.1 26.5M42.7 30.7L35 19.1M50.8 26.3L49.6 24.4 45 14.4M54.8 21.8L54.7 19.4 55.4 16.8 55.2 11.8M64 26.2L66.2 11.9M71.9 30.4L72.9 29.7 77.4 14.4M84.7 24.5L85.3 22.2 87.1 18.7M91.9 26.9L94.4 24.3M87.9 33.7L91.5 37.1M74.6 31.4L75.1 33 84.5 44.7M68 39.5L75.3 51.1M61.7 45.9L63.4 49.1 65.2 54.9M58.4 42.1L57.1 43.9 55.9 47.7 54.8 56.6M47.5 38.6L43.6 54.7M37.5 38.2L33.3 50.4M27.4 42.3L24.5 46M20.1 37.6L19.6 37.4M27.6 33.7L23.6 30M39.3 34.2L37.4 30.9 30.5 22.4M46.1 28.1L40.1 16.8M54.1 22.5L51.6 17.7 49.9 11.9M58.9 24.9L60.6 11.2M68.1 28.4L71.8 13.3M77.7 29.7L82.3 16.9M88.4 25.1L91 21.5M93 29.3L95.5 29.8" fill="none" stroke="#101838" stroke-width="2.6" opacity='0.6'/><path d="M93.4 31L100.7 34.1 108.4 36.3 120.2 38.7 137.9 41.6M84 32.3L87.7 36.8 90.6 39.6 101 47.4 115.6 56.1 137.7 67.8M73.4 34.8L86.1 51.2 97.9 64.7 114.5 82.1 138 105.3M65.8 39.8L72.1 50.9 87.2 81.3 102 109.7M61.5 49L72.9 109.6M55.3 40.8L53.3 48.1 52.2 55 47 109.7M44.7 38.2L41.5 51.5 36.3 67.7 29.2 86.4 19.7 109.5M34.7 39.7L32.4 46 29.8 51.4 26.2 57.5 21.2 64.9 7 83 -15.9 109.5M25.4 41.5L18.8 48.6 10.2 55.5 -3.1 64.3 -24.5 77.3M13.9 41L4.7 43.4 -24.6 49.5M36.9 36.7L33.4 36.6 31.3 37.1 22.6 36.7 14.3 33.1 6.7 30.9 -6.1 28.4 -24.9 25.4M32 35L23.7 26.9 13.2 19.2 -2.3 10.1 -24.5 -1.5M41.8 36L42.3 34.5 41.9 33.6 34.4 23 26.3 12.8 11.6 -3.5 -9.4 -24.9M48.4 27.6L22.8 -24.3M53.7 17.6L45.9 -24.2M61.4 26.3L63.4 10.8 66.5 -24M70.7 29.5L70.7 28.2 72.2 22.4 77 6 81.9 -8.1 88.5 -24.9M81.1 26.8L85.3 16.7 92 5.6 101.6 -7.2 116.2 -24.9M89.3 26.2L98.1 17.5 105.2 11.9 117.6 3.5 137.3 -8.4M101.8 25.9L137.9 18.2M83.9 31.3L88.6 31.5 91.1 34 94.4 36.4 105 42M76.3 31L87.7 44.2 97.2 53.1M69 37.1L74.1 44.1 86.1 62.6M62.5 43.5L64.9 47.4 66.6 51.1 72.8 69M59.6 43.6L58.2 48 57.6 51.9 58.1 71.9M50.9 38.9L50.7 38 50.3 38.7 49.5 41.2 43.2 70.6M39.5 35.5L39.4 39.3 37 48 33.7 56.3 29.4 65.4M28.9 42.7L27.9 44.9 25.2 49.1 17.5 58.2M21.6 40.2L15.3 45 10.1 48M20 39L17.5 39.1 13.1 37.7 8.1 37.2M27.6 35.2L26.3 35 19.8 30.3 11 25.6M38 34.7L27.3 22.9 17.8 14M44.8 29.4L28.9 4.5M52.2 24.8L48 14.9 42.3 -2.2M58.6 26.5L58.1 26.8 56.9 26.3 56.2 24.5 57.8 14.8 57.3 -4.2M65.6 26.4L67 22 72.3 -3.4M75.5 30.4L77 24 79.6 16.4 86.1 1.8M86.2 24.7L91.5 16.7 97.3 9.8M95.1 26.7L100 22.4 105.2 19.3M96 27.9L102.4 29.6 107.4 30.1M90.7 31.4L94.5 33.8M80.4 31.6L88.6 41.2M69.3 35.4L69.8 35.1 71.1 35.9 80 48M64.5 39L63.4 39.4 63.2 40.3 67.3 47.1 70.3 53.4M60.2 48.4L59.9 50.9 60.2 55.9M52.2 39.8L52.2 41.2 49.2 55.9M42.1 37.4L40.8 44.1 38.2 52.7M31.8 40.7L30.2 45.1 28.4 48.7M24.4 40.3L21.8 42.6M23 34.9L21.4 33.9M37 35.9L34.6 34.6 27.1 26.5M42.7 30.7L35 19.1M50.8 26.3L49.6 24.4 45 14.4M54.8 21.8L54.7 19.4 55.4 16.8 55.2 11.8M64 26.2L66.2 11.9M71.9 30.4L72.9 29.7 77.4 14.4M84.7 24.5L85.3 22.2 87.1 18.7M91.9 26.9L94.4 24.3M87.9 33.7L91.5 37.1M74.6 31.4L75.1 33 84.5 44.7M68 39.5L75.3 51.1M61.7 45.9L63.4 49.1 65.2 54.9M58.4 42.1L57.1 43.9 55.9 47.7 54.8 56.6M47.5 38.6L43.6 54.7M37.5 38.2L33.3 50.4M27.4 42.3L24.5 46M20.1 37.6L19.6 37.4M27.6 33.7L23.6 30M39.3 34.2L37.4 30.9 30.5 22.4M46.1 28.1L40.1 16.8M54.1 22.5L51.6 17.7 49.9 11.9M58.9 24.9L60.6 11.2M68.1 28.4L71.8 13.3M77.7 29.7L82.3 16.9M88.4 25.1L91 21.5M93 29.3L95.5 29.8" fill="none" stroke="#541406" stroke-width="1.05" /></g><g filter="url(#g12)" stroke="#7c2209" stroke-width="3.8" stroke-linejoin="round" opacity="0.9"><polygon points="38.9,34.9 42.9,31.6 45.6,29 48.9,28.3 51.6,25.6 54.9,22.3 58.2,25.6 61.5,27 64.9,26.3 68.2,29 71.5,29.6 75.5,31 72.8,34.3 69.5,36.3 67.5,38.9 64.9,39.6 62.2,42.9 60.9,45.6 58.9,42.9 55.5,40.3 51.6,39.6 48.2,38.3 44.9,37.6 41.6,36.7" fill="#8c280c" /><polygon points="20.3,38.3 23.6,35.6 27.6,34.3 32.3,35.6 37.6,36.3 38.9,34.9 37.6,37.2 34.3,38.9 30.9,40.3 28.3,42.3 25,40.7 22.3,39.6" fill="#8c280c" /><polygon points="75.5,31 77.5,30.3 80.8,27.6 85.5,24.7 88.8,25.6 92.1,27.6 95.4,27.4 92.8,30.3 90.1,31.6 87.5,32.9 83.5,31.6 80.1,31" fill="#8c280c" /><ellipse cx="98.8" cy="26.6" rx="3.4" ry="1.8" fill="#8c280c" /><ellipse cx="16.3" cy="40.3" rx="3.4" ry="1.6" fill="#8c280c" /><ellipse cx="54" cy="18.6" rx="1.6" ry="2.6" fill="#8c280c" /><ellipse cx="61.1" cy="47.8" rx="1.6" ry="2.6" fill="#8c280c" /></g><polygon points="38.9,34.9 42.9,31.6 45.6,29 48.9,28.3 51.6,25.6 54.9,22.3 58.2,25.6 61.5,27 64.9,26.3 68.2,29 71.5,29.6 75.5,31 72.8,34.3 69.5,36.3 67.5,38.9 64.9,39.6 62.2,42.9 60.9,45.6 58.9,42.9 55.5,40.3 51.6,39.6 48.2,38.3 44.9,37.6 41.6,36.7" fill="#000" /><polygon points="20.3,38.3 23.6,35.6 27.6,34.3 32.3,35.6 37.6,36.3 38.9,34.9 37.6,37.2 34.3,38.9 30.9,40.3 28.3,42.3 25,40.7 22.3,39.6" fill="#000" /><polygon points="75.5,31 77.5,30.3 80.8,27.6 85.5,24.7 88.8,25.6 92.1,27.6 95.4,27.4 92.8,30.3 90.1,31.6 87.5,32.9 83.5,31.6 80.1,31" fill="#000" /><ellipse cx="98.8" cy="26.6" rx="2.6" ry="1.1" fill="#000" /><ellipse cx="16.3" cy="40.3" rx="2.6" ry="0.9" fill="#000" /><ellipse cx="54" cy="18.6" rx="0.9" ry="1.8" fill="#000" /><ellipse cx="61.1" cy="47.8" rx="0.8" ry="1.6" fill="#000" /></svg></div>
<div class="a tile" style="left:340.80px;top:59.10px;width:112.50px;height:84.60px"><svg width="100%" height="100%" preserveAspectRatio="none" viewBox="0 0 113 85"><rect width="113" height="85" fill="#283a78"/><filter id="g13" x="-50%" y="-50%" width="200%" height="200%"><feGaussianBlur stdDeviation="1.0"/></filter><path d="M102.1 53.3L89 48.3C86.3 47.2 84.3 51.3 86.9 52.7L99.1 59.5ZM88.8 72L79.5 61.5C77.5 59.3 73.6 62 75.3 64.5L83.7 76.9ZM68.7 84.1L64.5 69.7C63.6 66.7 58.7 67.4 59.2 70.5L61.6 85.3ZM44.6 85.8L46.5 71C47 67.7 41.9 66.6 41.1 69.8L37.4 84.4ZM21.6 78L29.1 65C30.7 62.2 26.4 59.5 24.5 62.1L15.4 74ZM3.8 62L16 53.2C18.4 51.5 15.8 47.6 13.2 49L0.8 55.6ZM-3.7 40.6L9.1 38.7C11.8 38.3 11.3 34.2 8.6 34.2L-4.4 34ZM-1.2 18.8L10.8 24C13.4 25.1 15.7 21.4 13.3 19.9L1.4 12.5ZM12.1 0.2L21.8 11.7C23.9 14.1 27.5 10.8 25.8 8.1L17.6 -4.4ZM33.1 -11.2L37.6 3.1C38.6 6.3 43.6 4.9 43 1.7L40.2 -13.1ZM57.2 -14L55.8 0.9C55.5 4.1 60.4 5.2 61.1 2.1L64.4 -12.6ZM80 -6.6L72.5 6.4C71 9.1 75.1 11.4 77 9L86.1 -2.9ZM96.9 9.4L85.3 17.2C82.8 18.8 85.1 22.8 87.7 21.5L100.3 15.4ZM104.9 30.7L91 32.3C88.2 32.7 88.4 37.1 91.3 37.2L105.3 37.6ZM96.6 63.4L85.1 55.5C82.7 53.8 79.7 57.2 81.8 59.2L92.1 68.7ZM79.6 79.2L72.3 66.1C70.9 63.4 66.5 65.2 67.6 68L73 82ZM56.8 86.4L55.6 70.5C55.4 67.3 50.4 67.6 50.2 70.8L49.5 85.8ZM32.6 83.3L37.7 68.2C38.8 65.1 34.1 63.2 32.6 66.1L25.7 80.6ZM12.2 70.4L21.6 59.9C23.7 57.6 20.4 53.9 18.1 56L6.7 65.8ZM-1.7 51.7L11.2 46.3C13.9 45.2 12.8 40.9 10 41.6L-3.6 45.1ZM-4.2 29.5L8.7 31.2C11.3 31.5 12.2 27.6 9.6 26.8L-2.8 23ZM4.3 8.9L15.5 17.4C17.9 19.2 20.9 15.6 18.7 13.5L8.8 3.6ZM21.9 -6.7L29 6.5C30.6 9.3 35.3 7.3 34.1 4.3L28.5 -9.6ZM45 -14.5L46.7 1.4C47 4.6 52.1 4.6 52.1 1.3L52.4 -14.7ZM69.1 -11.6L64.6 2.7C63.7 5.7 68.1 7.8 69.4 5L75.7 -8.6ZM89.1 0.8L79.6 11C77.6 13.2 80.9 16.5 83.2 14.6L94 5.7ZM102.3 19.6L89.1 24.5C86.4 25.5 87.7 29.8 90.5 29.1L104.2 26.2ZM104.9 42.2L91 40.4C88.1 40.1 87.3 44.4 90.1 45.2L103.6 48.9Z" fill="#2e4284" /><path d="M137.4 69.9L102.3 55.4C94 52 87.3 62.4 94.2 68L137.6 103.4ZM119.8 109.9L88 73.9C82 67.1 71.4 74 75.3 82.3L87.8 109.5ZM73.8 109.6L67.1 85.5C64.6 76.5 51.4 77.7 51.4 87L51.3 109ZM38.8 110L42.5 86.3C44 76.9 31 73.7 27.1 82.3L14.6 109.6ZM-1.8 109.7L19.2 78C24.3 70.3 14.6 61.5 7.5 67.6L-24.4 94.8ZM-24.9 77.3L2.4 60.6C10 56 4.7 44.9 -3.9 47.1L-24.2 52.4ZM-25 40.5L-5 38.9C3.5 38.2 4.1 26.5 -4.3 24.5L-24.7 19.6ZM-24.2 7L-1.3 16.8C6.9 20.3 13.4 9.8 6.5 4.1L-24.9 -22.2ZM-7 -25L12.5 -2.2C18.7 4.9 30 -1.8 26.1 -10.4L19.4 -24.9ZM31.4 -24.5L34.7 -13C37.2 -3.9 50.5 -6.1 50.4 -15.5L50.3 -24.5ZM60.8 -24.9L59.4 -15C58 -5.8 70.5 -1.7 74.3 -10.2L80.8 -24.8ZM94.2 -24.9L82.2 -6.5C77.2 1.1 86.6 9.6 93.5 3.7L127.2 -24.5ZM137.5 -12.5L98.8 10.4C91.1 14.9 96.1 26.3 104.8 24.2L137.8 16.1ZM137.1 30.2L106.2 32.5C97.3 33.1 96.3 45.4 105 47.4L137.2 54.8Z" fill="#33498e" /><path d="M77.9 41.6L78.4 42.6 79.2 43.1 83.9 44.8 137.2 62.1M42.9 36.8L43.3 38.2 44 38.8 68.6 47.3 71.2 48.7 72 48.6 71.8 50 72.6 51.5 82.1 61.8 101.2 80.9 131.6 109.9M45 41.5L47.1 43.3 60.1 50.8 61.7 52 63 58.9 66.8 71.3 80.7 109.9M50.4 49.4L51.1 50.6 51 51.6 48.5 69.5 45.1 109.3M41.8 35.8L42.3 35.7 42 37.1 42.2 40.1 39.9 46.6 36.2 54.9 25.3 76.2 6.9 109.5M30.2 41.8L23.3 49 12.7 58.1 -2.4 69.6 -24.4 85.3M24.6 35.5L14.3 38.9 7.6 40.6 -24.9 46.4M20.1 31.4L16.5 28.3 10.2 25.4 -3 20.6 -24.8 13.3M39.7 32.7L34.5 31.8 32 30.6 31.9 28.7 29.4 24.4 24.7 17.9 19.6 11.8 5.9 -2.8 -16.3 -24.5M44 30.8L43.9 28.2 38.7 12 25.6 -24.7M53.8 19.8L53.9 3.1 55.5 -24.9M64.6 18.9L74.1 -0.6 86.9 -24.4M74.1 23.6L99.6 4.6 138 -22.5M78.6 32.2L80.9 32.4 137.2 23.3M75.6 45.6L75.6 46.7 77.7 48.6 97.9 61.5M44.3 40.4L45.7 40.7 66.6 50.4 67.1 51.2 67.6 53.9 69.9 58.3 81.7 78M46.3 45L47.5 45.1 53.6 50.2 55.4 50.9 56.4 52.6 57 65.6 59.1 85.5M46.3 46.5L35.1 83.4M35.7 41.7L32.6 47.6 28.8 53.4 13.8 72.2M26.4 39.3L14.8 46.3 -0.5 53.7M16.4 32.8L11.6 32.8 -4.4 31.7M41 34.7L40.3 34.2 30.4 33.1 27.9 32.4 27.8 31.3 26.9 30 19 22.4 12.7 17.4 2.8 10.7M39.2 32.1L37.9 31.2 36.2 24.7 31.9 15.6 20 -5.2M48.9 23.1L46.6 12.8 42.6 -13.9M59.2 18.6L62.4 4.3 66.8 -12.1M69.7 20.6L88 -1.5M76.9 27.7L79.3 27 101.3 17.5M79 37.2L80.2 37.8 82.2 38.1 105.2 39.9M77.3 45.5L87 50.1M69.8 52.7L76.9 62.3M59.1 54.6L61.7 69.3M48.7 49.8L46.8 56.3 44.1 69M39.2 39.5L35.2 49.4 27.6 62.3M41.5 36.3L41.1 37.1 40.4 37.4 40.6 38 38.5 37.6 29.7 39.1 23.8 44.5 14.9 50.9M40.4 35.1L27.5 34.5 21.3 32.9 16.6 35.2 9.7 36.3M26.2 32.1L23.9 30.8 18.6 26.2 12.8 22.4M35.3 29.3L30.3 19.9 24.3 10.6M46.2 26L40.6 3.8M46.7 27.5L49.4 25.5 55.5 22.2 56.9 20.7 56.9 14.7 58.3 2.8M68 20.8L67.8 19.7 68.6 17.9 74.2 8.5M76.1 26.2L78.1 24.5 85.7 19.8M79.7 35.6L90.3 34.8M73.8 49.5L82.8 56.8M64.6 54.4L69.6 66.3M53.6 53.2L53 70.2M44.4 41.9L44.7 43.5 44.4 44.4 35.4 66.7M38.8 38.7L37.2 39.6 34.8 39.7 33.1 40.8 31.3 44.3 29 47.6 20.4 57.3M40.9 35.9L31.4 36.4 26.5 37.1 11.9 43.5M16.6 31.1L10 29.2M30 29.5L23.6 22.1 18.1 16.4M40.7 32L40.7 29.6 39.1 23.8 31.9 6.2M50.3 23.6L51.2 22.6 51.3 21.6 50.3 13.7 49.4 1.7M44.7 30.7L45.8 29 60.2 22.4 62.7 20.8 62.5 18.5 62.8 16.5 66.9 4.2M72.4 22.7L73.7 20.6 80.7 13.5M78.8 30.5L89 27.1M79.2 40.7L89.6 42.6" fill="none" stroke="#1c2a5c" stroke-width="2.6" opacity="0.45"/><path d="M77.9 41.6L78.4 42.6 79.2 43.1 83.9 44.8 137.2 62.1M42.9 36.8L43.3 38.2 44 38.8 68.6 47.3 71.2 48.7 72 48.6 71.8 50 72.6 51.5 82.1 61.8 101.2 80.9 131.6 109.9M45 41.5L47.1 43.3 60.1 50.8 61.7 52 63 58.9 66.8 71.3 80.7 109.9M50.4 49.4L51.1 50.6 51 51.6 48.5 69.5 45.1 109.3M41.8 35.8L42.3 35.7 42 37.1 42.2 40.1 39.9 46.6 36.2 54.9 25.3 76.2 6.9 109.5M30.2 41.8L23.3 49 12.7 58.1 -2.4 69.6 -24.4 85.3M24.6 35.5L14.3 38.9 7.6 40.6 -24.9 46.4M20.1 31.4L16.5 28.3 10.2 25.4 -3 20.6 -24.8 13.3M39.7 32.7L34.5 31.8 32 30.6 31.9 28.7 29.4 24.4 24.7 17.9 19.6 11.8 5.9 -2.8 -16.3 -24.5M44 30.8L43.9 28.2 38.7 12 25.6 -24.7M53.8 19.8L53.9 3.1 55.5 -24.9M64.6 18.9L74.1 -0.6 86.9 -24.4M74.1 23.6L99.6 4.6 138 -22.5M78.6 32.2L80.9 32.4 137.2 23.3M75.6 45.6L75.6 46.7 77.7 48.6 97.9 61.5M44.3 40.4L45.7 40.7 66.6 50.4 67.1 51.2 67.6 53.9 69.9 58.3 81.7 78M46.3 45L47.5 45.1 53.6 50.2 55.4 50.9 56.4 52.6 57 65.6 59.1 85.5M46.3 46.5L35.1 83.4M35.7 41.7L32.6 47.6 28.8 53.4 13.8 72.2M26.4 39.3L14.8 46.3 -0.5 53.7M16.4 32.8L11.6 32.8 -4.4 31.7M41 34.7L40.3 34.2 30.4 33.1 27.9 32.4 27.8 31.3 26.9 30 19 22.4 12.7 17.4 2.8 10.7M39.2 32.1L37.9 31.2 36.2 24.7 31.9 15.6 20 -5.2M48.9 23.1L46.6 12.8 42.6 -13.9M59.2 18.6L62.4 4.3 66.8 -12.1M69.7 20.6L88 -1.5M76.9 27.7L79.3 27 101.3 17.5M79 37.2L80.2 37.8 82.2 38.1 105.2 39.9M77.3 45.5L87 50.1M69.8 52.7L76.9 62.3M59.1 54.6L61.7 69.3M48.7 49.8L46.8 56.3 44.1 69M39.2 39.5L35.2 49.4 27.6 62.3M41.5 36.3L41.1 37.1 40.4 37.4 40.6 38 38.5 37.6 29.7 39.1 23.8 44.5 14.9 50.9M40.4 35.1L27.5 34.5 21.3 32.9 16.6 35.2 9.7 36.3M26.2 32.1L23.9 30.8 18.6 26.2 12.8 22.4M35.3 29.3L30.3 19.9 24.3 10.6M46.2 26L40.6 3.8M46.7 27.5L49.4 25.5 55.5 22.2 56.9 20.7 56.9 14.7 58.3 2.8M68 20.8L67.8 19.7 68.6 17.9 74.2 8.5M76.1 26.2L78.1 24.5 85.7 19.8M79.7 35.6L90.3 34.8M73.8 49.5L82.8 56.8M64.6 54.4L69.6 66.3M53.6 53.2L53 70.2M44.4 41.9L44.7 43.5 44.4 44.4 35.4 66.7M38.8 38.7L37.2 39.6 34.8 39.7 33.1 40.8 31.3 44.3 29 47.6 20.4 57.3M40.9 35.9L31.4 36.4 26.5 37.1 11.9 43.5M16.6 31.1L10 29.2M30 29.5L23.6 22.1 18.1 16.4M40.7 32L40.7 29.6 39.1 23.8 31.9 6.2M50.3 23.6L51.2 22.6 51.3 21.6 50.3 13.7 49.4 1.7M44.7 30.7L45.8 29 60.2 22.4 62.7 20.8 62.5 18.5 62.8 16.5 66.9 4.2M72.4 22.7L73.7 20.6 80.7 13.5M78.8 30.5L89 27.1M79.2 40.7L89.6 42.6" fill="none" stroke="#15172e" stroke-width="1.0" opacity="0.9"/><g filter="url(#g13)"><path d="M41.5 36C41.8 33.2 42.2 28.8 44 26C45.8 23.2 49.8 21.1 52 19.5C54.2 17.9 55.7 16.9 57.5 16.6C59.3 16.4 60.6 17.3 63 18C65.4 18.7 69.2 19.2 72 21C74.8 22.8 78.3 26.2 80 29C81.7 31.8 82.3 34.8 82 38C81.7 41.2 80 45.5 78 48C76 50.5 73 51.9 70 53C67 54.1 62.8 54 60 54.5C57.2 55 55.3 56.8 53 56C50.7 55.2 47.8 52.2 46 50C44.2 47.8 43.2 45.3 42.5 43C41.8 40.7 41.2 38.8 41.5 36Z" fill="#9a300c" stroke="#9a300c" stroke-width="2"/><ellipse cx="33.3" cy="35.4" rx="10.4" ry="8.2" fill="#b03c0e" /><ellipse cx="19.8" cy="32.3" rx="4.6" ry="2.8" fill="#b8440e" /></g><path d="M41.5 36C41.8 33.2 42.2 28.8 44 26C45.8 23.2 49.8 21.1 52 19.5C54.2 17.9 55.7 16.9 57.5 16.6C59.3 16.4 60.6 17.3 63 18C65.4 18.7 69.2 19.2 72 21C74.8 22.8 78.3 26.2 80 29C81.7 31.8 82.3 34.8 82 38C81.7 41.2 80 45.5 78 48C76 50.5 73 51.9 70 53C67 54.1 62.8 54 60 54.5C57.2 55 55.3 56.8 53 56C50.7 55.2 47.8 52.2 46 50C44.2 47.8 43.2 45.3 42.5 43C41.8 40.7 41.2 38.8 41.5 36Z" fill="#000"/><ellipse cx="33.3" cy="35.4" rx="9.4" ry="7.3" fill="#000" /><ellipse cx="19.8" cy="32.3" rx="3.4" ry="1.7" fill="#000" /></svg></div>
<div class="a tile" style="left:454.30px;top:59.10px;width:112.90px;height:84.60px"><svg width="100%" height="100%" preserveAspectRatio="none" viewBox="0 0 113 85"><rect width="113" height="85" fill="#4363bc"/><path d="M107.6 48.6L90.6 48.2C87.5 48.1 87.3 52.9 90.4 53.5L106.1 56.3ZM99.2 72.4L87.6 62.9C85.6 61.3 82.5 63.6 84.1 65.7L93.6 77.3ZM78 85.9L73.8 70.5C72.9 67.3 67.8 67.3 68.2 70.5L70.5 88.4ZM51.5 87.5L54.8 70.8C55.4 67.5 50.5 66.1 49.3 69.2L43.6 85.2ZM26.4 76.2L38.2 62.7C40.6 60 37.5 55.6 34.8 57.9L20.3 70.2ZM9.8 53.2L27.2 45.5C30.5 44 27.9 38.9 24.4 40L7.1 45.1ZM4.9 26L21.9 26.3C25.2 26.4 25.4 21.2 22.2 20.9L15.2 20.1 6.4 18.3ZM14.1 2.8L24.9 11.7C26.9 13.4 30 11.1 28.3 9L19 -2.7ZM34.7 -10.9L38.8 4.5C39.7 7.7 44.6 7 44.3 3.7L42.3 -13.1ZM61.4 -13.1L58 4.6C57.4 8 62.4 9.4 63.6 6.2L69.5 -10.8ZM86.3 -1L74.5 12.6C72.2 15.3 76 19.1 78.7 16.8L92.3 5ZM103.4 21.5L86.1 29.3C82.8 30.7 84.8 35.9 88.2 34.9L105.4 29.7ZM104.8 61.2L96.3 58.3 90.4 56.9C88.1 56.3 87.6 59.6 89.6 60.9L101.5 67.9ZM89.8 80.7L81.3 67.1C79.7 64.6 76 67 77.1 69.7L83.1 84.5ZM65 88.4L64.4 71.5C64.3 68 59 67.6 58.6 71.1L56.8 89ZM38.4 83.4L45.8 68.1C47.3 65.1 43.6 61.8 41.7 64.5L31.2 79.1ZM16.8 65.7L32.3 54.6C35.3 52.5 32.1 47.6 28.9 49.4L12.2 58.4ZM6.3 39.6L23.9 35.9C27.3 35.2 26.1 29.9 22.6 30.1L4.6 31.4ZM7.8 13.4L16.3 16.2 22.1 17.5C24.4 18 24.8 14.9 22.8 13.7L11.1 6.7ZM22.8 -6L31.2 7.6C32.8 10.1 36.6 7.8 35.5 5.1L29.6 -9.8ZM47.7 -14.2L48.2 3.8C48.3 7.3 53.7 7.7 54.1 4.2L55.9 -13.7ZM74.3 -8.1L67 7.3C65.6 10.2 69.9 12.7 71.8 10.1L82.1 -4.7ZM95.8 9.5L81.3 20C78.2 22.2 80.6 27.6 83.9 25.8L100.5 16.6ZM107.2 35.1L89.6 38.6C86.2 39.3 87.4 44.6 90.9 44.4L107.9 43.3Z" fill="#4666c0" /><path d="M137.3 55.7L108.6 51.2C99.1 49.7 95.1 61.8 103.5 66.5L137.6 85.3ZM137.4 109.1L98.4 74.7C91.2 68.4 81.2 76.2 85.8 84.6L99.1 109.2ZM82.5 109.6L76 87.5C73.2 77.9 59.7 79.6 59.3 89.6L58.5 109.6ZM43.8 109.7L48.8 88.3C51.1 78.2 38.1 72.6 32.8 81.4L15.7 109.7ZM-6.8 109.3L24 75.1C31.1 67.2 22.1 55.6 12.9 61L-25 83.4ZM-24.8 63.2L8.1 51.1C17.9 47.5 14.7 33.5 4.2 34L-24.7 35.3ZM-24.8 19.1L3.9 23.5C13.4 24.9 17.5 12.8 9 8.1L-24.2 -10.2ZM-13.6 -24.6L14.2 -0.1C21.2 6.2 31.7 -0.6 27.3 -9L18.9 -24.9ZM33.2 -24.8L36.5 -13.2C39.2 -3.5 53 -4.2 53.5 -14.3L53.9 -24.3ZM66.7 -24.5L64 -12.9C61.6 -2.8 74.7 2.7 80 -6.1L91.3 -25ZM110.7 -24.4L88.7 0.1C81.7 8 90.8 19.4 99.8 14L137.7 -8.5ZM137.6 11.7L104.7 23.8C95 27.3 98 41.2 108.3 40.8L137.3 39.5Z" fill="#4868c2" /><path d="M76 46.3L77.3 48.3 89.4 46.5 100.3 45.9 115.3 46.2 137.3 47.6M76 45.2L75.3 45.1 74.9 46.8 76.7 51.5 78.5 53.9 82.2 57.3 137.6 96.4M74.8 66.6L76 71.9 79.1 81.4 90.4 109.2M56.7 55.1L59 55.9 58.2 58.4 51.2 109.9M46.5 57.3L41.6 61.8 34.6 70.3 5.3 109.5M42.3 39.5L34.7 44 23.1 49.9 -24.7 72.7M35.8 27.3L33.1 27 20.2 28.4 9.2 28.8 -4.8 28.4 -24.8 27.2M34.8 24.1L34.3 22.8 32.4 20.5 27 15.3 22.3 11.6 -24.3 -21.2M37.8 8.5L36.9 3.8 34.5 -3.8 26.6 -24.4M54.7 15.4L60.3 -25M67.9 16.7L71.2 13.5 77 6.6 100.3 -24.6M72.4 34.5L73.8 34 81.5 29.4 93.1 23.4 137.3 2.2M79 49.8L81 51.1 82.7 53.1 84.5 54.1 95.9 56.2 105.5 58.8M51 42.7L57.6 44 60.5 44.9 64.8 47.4 68.8 50.5 79.6 60.8 84.4 69 92 79.5M65.2 58.9L65.9 62.6 67.8 88.5M49.7 61.8L48.7 65.9 41 84.4M50.2 47.7L43.2 50.2 38.8 52.6 30.7 58.4 18.9 67.7M33 35L23.1 38.2 6.6 42.4M27.2 19.6L17.7 18.5 7 15.8M32.4 12.3L27 4.1 21.1 -4M45.9 15.5L46.2 2.7 45 -13.3M63.7 12.6L63.8 11.4 65 7.6 72.2 -10M65.2 26.7L70.4 24.6 75.5 21.6 94.5 6.9M80.3 38.9L106.9 32.3M83.2 51.7L83.9 51.8 86.7 51.1 89.7 50.9M85.1 63.1L85.4 63.6M69.6 59.6L70.7 61 71 70.2M53.9 58.2L53.3 63.8 52.3 68.7M45.5 53.2L37.1 59.8M37.6 36.7L33 39.6 26.6 42.4M29.8 22.9L22.9 23.5M27.4 11.5L27.1 11.1M41.7 11.6L41.6 5.1M59.5 16.4L59.7 11.6 60.6 6.7M69.5 20.3L75.6 15.6M77.5 36.9L80.6 35 86 32.5M49.6 44.7L54.9 46.9 63.8 51.4 72.2 56.8 76.4 61 77.3 64.4 79 68M61.9 61.4L61.6 69.9M49.9 58.1L46.7 61.8 43.9 66M47.9 40.9L44.3 44 31.4 51.5M34.9 31.1L24.5 32.8M35.3 10.8L33.5 6.8M50.6 12.3L51 5.3M65.7 30.3L61.8 26.6 61 24.8 61 21.8 62.2 19.1 69 9.4M69.3 32L73.1 28.9 81.5 23.6M79.4 42.9L89 41.7" fill="none" stroke="#344a92" stroke-width="0.7" opacity="0.75"/><polygon points="22.9,14.6 27.4,12.1 32.4,13.3 37.3,9.3 41.5,12.1 42.3,15.4 45.6,16.2 50.5,13.3 54.7,16.2 58.8,17.1 64.6,12.6 67.1,16.2 68.7,20.4 67.1,23.7 64.6,26.1 66.3,30.3 68.7,32.8 72,33.6 72.9,36.9 77,37.4 79.8,38.5 78.7,42.7 76.5,45.7 78.7,49.3 82.8,50.9 85.8,52.6 85.3,55.9 89.4,60 85.3,62.5 81.1,61.7 78.7,63.4 75.4,66.2 72,62.5 68.7,60 64.6,58.4 62.1,60.9 59.6,57.6 56.3,55.9 53.9,57.6 50.5,58.4 48.9,61.7 47.2,57.6 45.6,52.6 48.9,50.9 50.5,48.5 48.9,45.2 50.5,41.9 48.1,40.2 44.8,41 42.3,38.5 41.5,35.2 37.3,36.1 33.2,34.4 34.8,30.3 36.5,27.8 34,24.5 30.7,22.8 27.4,20.4 26.6,17.1" fill="#000" stroke="#000" stroke-width="0.6" stroke-linejoin="round"/><ellipse cx="48.5" cy="56.5" rx="1.3" ry="2.2" fill="#5a1208" /><ellipse cx="54" cy="53" rx="0.8" ry="1.2" fill="#5a1208" /></svg></div>
<div class="a tile" style="left:112.80px;top:144.70px;width:112.80px;height:84.80px"><svg width="100%" height="100%" preserveAspectRatio="none" viewBox="0 0 113 85"><rect width="113" height="85" fill="#3854a4"/><filter id="g21" x="-50%" y="-50%" width="200%" height="200%"><feGaussianBlur stdDeviation="3"/></filter><path d="M111.4 42.2L103.8 37.4C102.3 36.5 100.5 38.6 101.9 39.7L109 45.2ZM102.8 53.4L95.7 45C94.2 43.3 91 45 92.3 46.8L99.4 56.5ZM89.3 63.2L82.7 52C81.4 49.7 77.9 52.3 79.1 54.6L85.2 66.1ZM73.7 71.3L69.8 58.9C69.1 56.7 65.4 57.2 65.9 59.5L68.6 72.2ZM56 74L56.2 60C56.2 57.4 52 57 51.8 59.6L50.6 73.6ZM37.2 72.4L40 57.6C40.5 54.7 35.6 53.9 35 56.8L32 70.5ZM19.4 66.9L23.8 54.6C24.6 52.2 20.9 50.6 19.9 52.9L14.7 64.8ZM4.9 58.1L11.1 49C12.4 47.2 9.6 45.1 8.2 46.8L1.2 55.2ZM-5.4 47.1L1.8 41.7C3.2 40.7 1.7 38.5 0.2 39.4L-7.6 43.8ZM-10.6 34.9L-2.7 33.8C-1.2 33.6 -1.1 31.3 -2.6 31.3L-10.6 31.2ZM-8.7 22.1L-1.2 24.9C0.4 25.5 2 23.4 0.5 22.6L-7.5 18.4ZM-2.3 9.9L5.1 16.6C6.6 18 9.1 15.9 7.7 14.5L0.3 6.3ZM9.1 -0.6L15.1 9.8C16.3 11.7 19.5 10.3 18.6 8.3L13.3 -2.5ZM24.4 -6.2L27.3 5.4C27.9 7.7 31.3 6.3 30.9 4L29.1 -7.9ZM41.5 -8.9L40.6 4.1C40.4 6.5 44.2 7.7 44.6 5.3L46.8 -8.6ZM59.9 -5.7L55.4 8.6C54.5 11.5 59.2 13.4 60.3 10.5L65.3 -3.7ZM78.2 1.7L72.4 15.5C71.3 18.3 76 19.6 77.3 16.9L83.7 3.4ZM94.8 10.7L87.5 22.6C86 25 90.4 26.9 92 24.5L99.1 13.6ZM107.3 21.1L104 24.8 101.4 29C100.4 30.7 103.5 31.7 104.5 30L106.8 26.7 109.8 24.1ZM113.1 31.2L108.1 32.1C107.4 32.2 107.3 33.3 108.1 33.4L113 34.2ZM107.5 47.7L100 41.1C98.5 39.8 96.6 42.4 98.1 43.9L105 51.1ZM96.4 58.3L89.7 48.4C88.1 46.1 84 47.9 85.5 50.2L92.4 61.2ZM81.9 67.8L76.3 56.1C75.3 53.8 71.5 55.2 72.4 57.5L77.1 69.6ZM65 73.1L63.2 60.3C62.8 57.9 59.1 58.5 59.2 60.9L59.8 73.9ZM46.6 73.8L48.5 58.9C48.9 56 44.1 55.4 43.6 58.3L41.1 73.1ZM28.2 69.4L31.6 55.8C32.3 53.1 27.9 52.2 27 54.9L22.9 68.2ZM11.7 62.7L17.1 52C18.1 50 14.7 48.5 13.5 50.4L7.2 60.7ZM-1.1 53L5.8 45.7C7.2 44.3 5.2 41.7 3.7 43L-3.8 49.7ZM-8.5 41.1L-1.2 37.9C0.2 37.3 -1 35.3 -2.6 35.7L-10.3 37.7ZM-10.3 28.5L-2.4 29.5C-0.8 29.7 -0.3 27.3 -1.8 26.8L-9.6 24.8ZM-6 15.9L1.6 20.7C3.2 21.7 4.9 19.4 3.5 18.3L-4.4 12.1ZM3 4.5L9.8 13.1C11.2 14.8 14 12.9 12.9 11.1L6.8 2ZM16.6 -3.6L20.8 6.5C21.7 8.6 25.3 8 24.6 5.8L21 -5.6ZM32.7 -7.9L33.8 4.1C33.9 6.4 37.6 6.6 37.6 4.3L37.7 -8.7ZM50.6 -7.9L47.7 5.8C47.1 8.5 51.4 9.8 52.1 7.1L55.9 -6.3ZM69.3 -2.6L63.7 12.4C62.6 15.4 67.8 16.7 69 13.7L74.6 -0.3ZM87.3 5.2L80.4 18.6C79.1 21.1 83.5 22.6 84.9 20.2L92 8.1ZM102.1 15.5L97.9 21.1 94.9 26.3C93.6 28.6 97.5 30.4 98.8 28.2L101.8 23 105.7 18.4ZM111.4 26.1L108.1 28.3 106.2 30.7C105.7 31.4 106.7 31.8 107.6 31.4L112.9 28.9ZM112.8 36.4L107.2 34.4C105.8 33.8 103.9 35.1 105.2 35.9L108.5 38.1 112.2 39.7Z" fill="#3c59ab" /><path d="M137.1 53.2L122 48 111.9 43.7C107.1 41.6 102.3 47.7 106.6 50.8L118.7 59.6 137.5 70.9ZM137.4 83.9L116.8 68.1 102.7 55.3C98.1 51.1 90.5 56.6 94.3 61.4L110.4 81.9 135.2 109.3ZM118.3 109.3L101.7 85.6 88.9 65.3C85.3 59.7 76.5 64.3 79 70.4L87.1 89.7 96.1 109.8ZM83.9 109.1L72.3 71.9C70.3 65.5 60.6 68.1 61.4 74.8L66 109.5ZM55.4 110L54.4 75C54.2 68 43.6 66.7 42.7 73.6L38.1 109.3ZM27.1 109.6L35.5 72.6C37 65.8 26.7 62.8 24.2 69.3L17.6 87.1 8.3 109.2ZM-5.1 109.9L8.6 85.4 17.4 67.5C20.3 61.7 11.8 56.9 7.9 62.2L-5.1 79.9 -24.4 102.9ZM-24.9 86.6L-8.3 70.6 3.1 58C7 53.8 0.8 47.9 -3.8 51.3L-12.6 57.9 -24.3 65.6ZM-24.5 55.9L-7.6 47.1C-3 44.7 -6 37.8 -11.1 39.1L-24.7 42.4ZM-24.6 35L-11.6 33.9C-6.7 33.5 -6 26.5 -10.8 25.7L-24.6 23.3ZM-24.4 15.7L-10.2 20.4C-5.2 22.1 -1.4 15.2 -6 12.5L-24.8 1.1ZM-24.8 -9.6L-2.1 8.3C2.4 11.9 8.6 6.4 5.1 1.9L-5 -10.5 -17.6 -24.8ZM-4.9 -24.7L9.8 -2C13.1 3.1 21.5 -0.6 19.2 -6.3L11.8 -24.9ZM21.2 -24L25.6 -7.6C27.2 -1.4 36.7 -3.1 36.2 -9.5L35 -24.5ZM43.5 -24.9L43.1 -9.9C42.9 -2.9 53.3 -1 54.6 -7.8L57.6 -24.6ZM66.8 -24.5L61.8 -6.2C59.9 0.9 70.7 4.7 73.5 -2.1L82.7 -24.2ZM93.8 -24.8L80.4 0.9C77.2 7.2 87 12.5 91 6.6L100.6 -7.5 114.1 -24.8ZM129.3 -24.5L109.5 -4.7 102.2 3.5 96.7 10.7C92.9 15.6 100.4 21.6 104.9 17.3L110.7 11.8 117.7 6.1 137.5 -7.3ZM138 4.4L120.2 13.6 109.4 20.8C105.4 23.5 109.1 29.1 113.7 27.6L123.2 24.6 137.8 21ZM138 29.9L114.1 32C109.9 32.3 109.3 38 113.4 39L123.1 41.4 137.8 44.1Z" fill="#405eb2" /><g filter="url(#g21)" opacity="0.5"><ellipse cx="3.2" cy="33.3" rx="7" ry="5.5" fill="#2a3e80" /><ellipse cx="8.4" cy="31.2" rx="7" ry="5.5" fill="#2a3e80" /><ellipse cx="10.4" cy="27.1" rx="7" ry="5.5" fill="#2a3e80" /><ellipse cx="21.9" cy="37.5" rx="7" ry="5.5" fill="#2a3e80" /><ellipse cx="27.1" cy="30.2" rx="7" ry="5.5" fill="#2a3e80" /><ellipse cx="26" cy="25" rx="7" ry="5.5" fill="#2a3e80" /><ellipse cx="36.4" cy="18.8" rx="7" ry="5.5" fill="#2a3e80" /><ellipse cx="37.5" cy="22.9" rx="7" ry="5.5" fill="#2a3e80" /><ellipse cx="61.4" cy="43.7" rx="7" ry="5.5" fill="#2a3e80" /><ellipse cx="62.4" cy="48.9" rx="7" ry="5.5" fill="#2a3e80" /><ellipse cx="72.8" cy="37.5" rx="7" ry="5.5" fill="#2a3e80" /><ellipse cx="78" cy="32.3" rx="7" ry="5.5" fill="#2a3e80" /><ellipse cx="93.6" cy="38.5" rx="7" ry="5.5" fill="#2a3e80" /><ellipse cx="100.9" cy="34.3" rx="7" ry="5.5" fill="#2a3e80" /><ellipse cx="107.1" cy="32.3" rx="7" ry="5.5" fill="#2a3e80" /></g><path d="M101.6 34.9L108.2 39.2 113.7 41.7 123.2 44.8 137.7 48.7M93.7 39.2L95.5 42.4 99.1 47.2 107.6 55.6 120.2 65.5 137.6 77.2M73.4 37.8L76.8 41 80.6 45.6 93.3 66 103.7 80.7 126.7 109.7M62.2 48.1L62.6 47.5 63.5 47.4 66.1 48.9 67.9 51.3 69.7 54.8 81.6 87.8 89.8 109.3M61.6 48.4L59.7 50.3 58.6 53.1 57.9 57 57.6 63 58.2 80 60.7 109.9M36.7 23.1L35.4 24.1 35.3 26.1 37 28.5 43.1 35.1 44.4 37.8 44.7 41.7 32.6 109.7M26.3 30.6L24.1 33.6 24.1 34.6 26.4 39 27 43.9 26.3 50.9 24.3 58.6 20.9 68.1 15.9 80 1.7 109.8M21.1 37L19.5 37.8 18.1 39.3 9.7 54 1.4 65.3 -9.6 78.3 -24.7 94.3M8.8 32L8.1 34.7 6.3 38.2 3.8 41.3 0.9 44.1 -8.7 51.2 -24.2 60.5M2.2 33.6L-8.5 35.9 -24.3 38.6M8.1 30.5L2.1 27.4 -3.4 25.2 -24.7 19.5M10.7 26.1L9.5 23.5 7.7 21 0.6 14.1 -9.8 6.2 -24.7 -3.9M25.5 25.5L23.1 24.7 20.9 22.6 13 8.7 7 -0.5 -1.1 -11.9 -10.9 -24.6M26.4 25.9L26 26.6 26.9 27.1 30.6 25.6 31.2 24.9 31.2 22.9 28.1 13.4 21.9 -8.7 16.5 -24.9M36.8 17.9L38.4 10.1 39.4 0.1 39.6 -10.8 39.2 -24.8M38.4 22.8L42.3 22.2 45.9 20.3 49.3 16.7 51.8 12.4 54.1 6.9 56.5 -0.8 62 -24.1M71.9 37.2L69.5 35.7 67.9 32.1 67.6 27.1 68.6 21.2 70.8 14.5 74.9 4.3 88.2 -24.8M78.5 31.9L82.8 26.9 92.1 11.4 99.5 0.8 109 -10.9 121.7 -25M99.9 34.1L99.4 33.4 99.3 31.5 100.6 27.7 103.2 23.5 107.3 19 112.6 14.5 119.1 9.9 137.2 -0.9M107.6 31.8L111.1 30.6 117.9 29 137.6 25.5M93.9 37.7L95.3 36.5 96.3 36.2 97.2 36.4 102.8 42.1 108.3 46.5M77.6 33.1L77.9 33.9 79.5 35 87.1 37.4 88.9 43.1 90.6 46.7 93.7 51.9 97.9 57.5M72.1 37.6L68.6 39 67.7 38.8 67.8 39.8 76 52.3 83.3 66.5M62.7 49.5L66.8 72.7M60.7 44.1L58 45 55.5 46.6 53.6 48.9 52.2 51.6 51 55.4 50 60.3 48.6 73.2M27.7 30.3L30.3 32.7 32.3 36.2 33.7 39.9 34.4 44.9 34.2 49.9 33.6 54.8 29.9 70.4M22.2 38.2L21.6 43 19.5 49.7 16.9 56.2 12.9 64.2M26.1 29.9L22.2 30.6 18.2 30.9 16.4 31.6 15.1 33.1 7.9 45.1 0.1 54.1M4 33.6L3.6 35.1 1.5 37.3 -2.7 39.9 -8.1 42.5M3.7 32.4L2.4 31.4 0.4 30.8 -10.5 29.8M9.8 27.5L8.3 26.9 0.2 21.1 -6.8 17.2M26.3 29.7L20.4 30.1 16.4 29.7 15.7 29 14.4 23.2 12.2 18.7 8.1 13 1.6 5.4M26.2 24.3L25.3 20.7 15 -3.1M35.8 19.2L35.2 18.9 34.1 17.3 33.4 14.4 30.8 -8.4M36.5 19.4L36.3 20 37.8 19.8 40.2 18 42 15.7 43.9 12.1 46.6 3.5 48.7 -8.3M36.8 23.7L37.1 25.5 38.4 27.1 43.5 30.2 48.2 31.6 50.2 31.3 51.9 30.2 55 26.3 58.3 20.1 62.2 10.9 67.3 -3.2M77.3 32.6L76.6 32.4 76 31.6 75.6 29.7 76.3 24.7 79.5 16.3 85.3 4.7M77.7 33.1L78.8 34.4 81.7 35.4 85.6 35.9 87.5 35.3 89.4 33 96.2 20.7 100.8 14.2M106.1 32.4L105.9 33.1 105.3 32.4 105.2 31.4 105.9 29.5 107.8 27.2 111 24.8M106.9 33L109 34.4 113 35.3M100.5 35.1L101.2 36.8 102.5 38.2M93 38.7L92.2 40.1 92.2 41.1 93.5 44.8M72.5 38.1L72.5 39.7 73.3 41.6 80.4 52.4M63.4 48.9L65.5 52.1 67.7 58.7M61.6 44.6L61.6 45.5 61 46.2 57.9 48.7 56.3 51.2 54.9 55 54.2 58.9M27.4 29.5L27.9 29 29.9 28.9 32.5 30.2 35.2 33.2 37.6 37.5 38.7 41.4 38.9 45.4 37.6 56.3M22.7 37.3L23.8 38.7 24.2 42.6 23.5 47.6 22.2 52.4M22.2 36.7L22.6 36.1 22 35.3 21 35 19.1 35.3 17.4 36.3 15.4 38.6 10.2 47.1M7.7 31.9L6.4 33.2 4.6 36.8 1.9 39.7M2.3 32.6L-1.7 32.5M9.1 30.4L10.1 30.5 9.7 29.6 0.2 24M11.3 27.2L12.1 25.7 11.5 22.8 10.1 20.2 7 16.3M25.4 24.5L22.2 19.7 17.3 9.9M36.8 22.1L34.2 20.6 32.4 18.3 31.1 14.5 29.3 5.7M37.3 18.7L38.9 16.5 40.2 13.8 42.3 6.1M37.9 23.7L39.5 24.7 42.5 25.3 45.4 25 48.2 23.9 50.5 22.1 53.1 19 57.2 11M72.9 36.8L73.1 35.1 72.2 30.2 72.1 27.2 72.7 23.3 74.4 17.5M78.7 32.7L81.4 32.3 84 30.9 86.2 28.9 89 24.7M101 33.4L102.4 30.9M94.7 38.6L96.4 39.6 98.4 41.8M73.7 36.7L74.6 36.3 76.6 36.8 81.4 40.3 84 43.3 87.1 48.5M62.2 44.1L66 45.3 68.3 47.1 71.3 51.1 74.2 56.4M61.7 49.7L61.1 53.7 61.1 59.7M60.7 43.1L58.2 41.7 56.2 41.4 54.3 41.7 51.8 43.4 50.1 45.8 48.8 48.6 46.3 57.2M27.1 30.8L27.5 33.4 29.6 39 30.3 42.9 30.4 47.9 29.4 54.9M21.4 37.9L15.7 50.4M9 30.8L9.6 30.6 10.8 32.2 10.5 35.2 8.3 39.6 5.3 43.6M2.8 34.2L-0.5 36.2M7.2 31.4L5.2 31.1 2.6 29.7 -1.2 28.4M9.7 26.4L3.3 20.1M26.5 25.9L26.3 26.7 27.2 26.8 24.4 27.4 21.5 26.8 19.8 25.7 17.9 23.4 11.9 13M27.1 24.9L28 23.2 27.8 21.2 23 7.1M36 18.2L35.6 15.6 35.7 4.6M37.6 22.1L41.6 19.7 44.5 17 47.2 12.8 49.6 7.3M61.8 42.9L62.5 39.1 61.6 33.2 61.8 28.2 63.2 22.4 66.1 13.9M77.7 31.2L78.8 27.4 82.3 20.2M93.5 37.6L96.6 28.1M101.4 34L104 33.2 105.5 34.4M77.4 32.8L76.6 33.1 76.4 34.1 77 34.9 81.2 37.5M73.7 37.4L75.5 38 78.7 40.4M73 38.2L76.2 43M72.3 37.7L71.2 38.9 71 39.9 71.5 41.8 73 44.4M62 43.5L64.7 43 66.6 43.4 70.3 46.8M61.7 44.4L62.8 45.8 65.6 46.9 67.8 48.8M63.2 48.3L64.8 49.2 66.1 50.7M63 49.3L64.1 51.6M62.3 49.6L62.2 51.4M61.4 49.2L60.2 52M62.4 48.2L62 47.6 60.3 48.1 58.3 50.4M61.2 44.3L57.5 47.1 55.5 49.3M60.4 43.5L56.5 43.7 54.7 44.6 52.6 46.7M36.6 23.7L36.8 25.7 39.5 28.6 45.5 32.2 49.9 34.5 50.9 34.6 51.2 35.6 47.7 43.9M27 29.5L27.1 27.9 29.9 26.9 31.9 27 33.6 28.1 37.6 32.6 39.8 35.9 40.9 38.6 41.5 42.6M27.8 29.8L30.3 30.7 33 33.6 35.3 38.1 36.4 42.9M27.6 30.9L31.1 38 32.3 43.9M26.7 30.8L26.1 33.4 28.2 40 28.7 44M22.4 36.6L23.2 36.5 24.6 37.9 25.4 40.8 25.5 43.8M22.5 37.8L23 39.3 22.8 43.3M21.7 38.1L20.4 42.6M20.9 37.6L19.7 39 17.7 42.5M21.8 36.7L20.3 36.3 18.5 37.2 15.4 41.1M26.4 30.3L23.3 32.4 17.6 33.9 15.4 36 13.2 39.3M10.6 28.2L12.4 30.5 12.7 31.5 12.3 34.5 10.7 38.1M9.1 31.4L9.7 33 8.5 36.7M8.3 32L6.2 36.2M7.6 31.6L5 32.5 4.4 35.3M3 32.4L2.3 32.1M7.6 31.7L5.9 32.5 3.3 31M7.4 30.8L4.6 29.7M8.8 30.5L7.7 29.3 5.1 27.9M10.4 27.9L9.8 28.2 8.9 28 6.3 26.5M9.4 26.9L7.2 24.9M10.3 26.4L8.3 23.4M11.2 26.4L11.1 24.5 10.3 22.7M10.9 27.6L11.5 27.9 12.5 27.7 13.1 26.9 13.3 24.9 12.5 22.1M26.9 29.6L25.5 28.8 21.5 28.6 18.8 27.4 17.4 26 14.8 20.6M26.1 25.7L24.8 26.3 21.9 25.4 19.8 23.3 17.1 19.1M24.8 24.8L22.1 22 19.5 17.6M25.8 24.4L22.1 16.5M26.8 24.3L26.7 21.4 24.7 15.8M26.9 25.8L28.6 24.9 29.3 23.1 28.9 20.1 27 14.4M36.3 22.9L34.3 22.7 32.8 21.4 31.3 18.8 29.6 14.1M36.1 19.8L35.4 19.9 33.8 18.6 32.9 16.8 32 13M35.6 18.5L34.9 17 34.4 13M36.3 18L36.7 13.3M37.1 18.3L38.9 13.9M37.5 19.2L39.6 17.3 41.1 14.7M37.1 22.4L36.9 21.7 37.5 21 40.9 18.8 43.5 15.9M38 22.4L42.4 20.7 46.2 17.6M38.5 23.4L40.4 23.8 43.4 23.5 46.2 22.4 48.6 20.6M37.4 23.9L38.5 25.4 40.2 26.5 45 27.6 48.9 26.9 50.6 25.8 52.8 23.7M61.3 43L60.3 40.4 57.8 36.1 57.3 34.1 57.5 31.2 58.5 27.3M71.9 37.6L68.2 38.6 67.8 39.5 66.7 37.9 65.6 35.1 64.8 29.1M72.3 36.7L70.7 33 70 29.1M77.4 32.8L77 33.4 76 33.7 76.5 34.6 75.7 34 74.3 31.4 73.9 28.4M77.2 31.8L76.9 28.9M78.3 31.3L79.2 29.6M79.1 32.1L80.9 31.2M78.4 33.2L80.2 33.7 82.2 33.7" fill="none" stroke="#1c2854" stroke-width="0.7" opacity="0.62"/><ellipse cx="3.2" cy="33.3" rx="0.9" ry="1" fill="#2a1428" transform="rotate(47 3.2 33.3)" /><ellipse cx="8.4" cy="31.2" rx="1.3" ry="1" fill="#2a1428" transform="rotate(74 8.4 31.2)" /><ellipse cx="10.4" cy="27.1" rx="0.8" ry="0.7" fill="#2a1428" transform="rotate(60 10.4 27.1)" /><ellipse cx="21.9" cy="37.5" rx="1" ry="0.8" fill="#2a1428" transform="rotate(60 21.9 37.5)" /><ellipse cx="27.1" cy="30.2" rx="1.1" ry="1" fill="#2a1428" transform="rotate(50 27.1 30.2)" /><ellipse cx="26" cy="25" rx="1.2" ry="0.8" fill="#2a1428" transform="rotate(81 26 25)" /><ellipse cx="36.4" cy="18.8" rx="0.9" ry="1.3" fill="#2a1428" transform="rotate(49 36.4 18.8)" /><ellipse cx="37.5" cy="22.9" rx="1.2" ry="1.1" fill="#2a1428" transform="rotate(8 37.5 22.9)" /><ellipse cx="61.4" cy="43.7" rx="0.9" ry="1.3" fill="#2a1428" transform="rotate(5 61.4 43.7)" /><ellipse cx="62.4" cy="48.9" rx="1" ry="0.7" fill="#2a1428" transform="rotate(34 62.4 48.9)" /><ellipse cx="72.8" cy="37.5" rx="1.1" ry="1.1" fill="#2a1428" transform="rotate(49 72.8 37.5)" /><ellipse cx="78" cy="32.3" rx="1.2" ry="1.3" fill="#2a1428" transform="rotate(50 78 32.3)" /><ellipse cx="93.6" cy="38.5" rx="1.2" ry="1" fill="#2a1428" transform="rotate(17 93.6 38.5)" /><ellipse cx="100.9" cy="34.3" rx="1.3" ry="0.8" fill="#2a1428" transform="rotate(17 100.9 34.3)" /><ellipse cx="107.1" cy="32.3" rx="1.1" ry="0.9" fill="#2a1428" transform="rotate(86 107.1 32.3)" /></svg></div>
<div class="a tile" style="left:454.30px;top:144.70px;width:112.90px;height:84.80px"><svg width="100%" height="100%" preserveAspectRatio="none" viewBox="0 0 113 85"><rect width="113" height="85" fill="#5e1607"/><filter id="g24" x="-50%" y="-50%" width="200%" height="200%"><feGaussianBlur stdDeviation="1.2"/></filter><filter id="g24b" x="-50%" y="-50%" width="200%" height="200%"><feGaussianBlur stdDeviation="5"/></filter><g filter="url(#g24b)"><ellipse cx="78" cy="8" rx="44" ry="12" fill="#86200b" /><ellipse cx="108" cy="34" rx="12" ry="36" fill="#7a1c0a" /><ellipse cx="64" cy="40" rx="22" ry="18" fill="#6e190a" /></g><g filter="url(#g24)"><path d="M46 4 C52 40 66 48 84 22M39.5 5.5 C45.5 50 70.5 58 88.5 24M33 7 C39 61.2 75 69.2 93 26M26.5 8.5 C32.5 73.8 79.5 81.8 97.5 28M20 10 C26 87.5 84 95.5 102 30M13.5 11.5 C19.5 102.5 88.5 110.5 106.5 32M92 26 C100 40 104 60 100 86M98 22 C108 34 112 50 112 70M86 30 C92 50 88 70 78 86M30 0 C22 20 10 36 0 46M22 0 C14 14 6 22 0 26M60 2 C70 -2 90 4 113 2M100 10 C106 14 110 18 113 24M38 26 C30 40 22 60 12 86M0 66 C14 50 26 36 38 26 C44 50 50 70 58 86" fill="none" stroke="#a83012" stroke-width="1.7" opacity="0.85"/></g><ellipse cx="51" cy="53" rx="4.5" ry="8" fill="#480e05" transform="rotate(15 51 53)" opacity="0.85"/><ellipse cx="22" cy="68" rx="16" ry="18" fill="#4e1006" transform="rotate(20 22 68)" opacity="0.6" filter="url(#g24)"/><path d="M47.2 6.9C48.2 6.4 51.1 8.1 53.5 8.4C55.8 8.6 59 7.7 61.4 8.4C63.7 9 65.4 11 67.6 12.5C69.9 14.1 72.6 15.9 74.9 17.7C77.1 19.5 80.9 22.1 81.1 23.5C81.3 25 78.5 26 75.9 26.4C73.3 26.9 68.6 26.6 65.5 26C62.4 25.4 59.6 24.3 57.2 22.9C54.8 21.5 52.5 19.6 51 17.7C49.4 15.8 48.5 13.3 47.9 11.5C47.2 9.7 46.3 7.4 47.2 6.9Z" fill="#000"/><polygon points="31.8,1.1 35.4,6.3 38.5,5.2 41.6,9.4 40.6,14.6 37.5,12.5 34.8,14 33.9,8.4" fill="#000" /><polygon points="81.7,25 85.3,19.8 87.4,23.5 90.5,20.8 90.1,25.6 95.7,25.6 90.5,29.1 85.3,28.1 82.2,29.8" fill="#000" /></svg></div>
<div class="a tile" style="left:112.80px;top:230.50px;width:112.80px;height:84.30px"><svg width="100%" height="100%" preserveAspectRatio="none" viewBox="0 0 113 85"><rect width="113" height="85" fill="#0e1530"/><filter id="g31" x="-50%" y="-50%" width="200%" height="200%"><feGaussianBlur stdDeviation="2.2"/></filter><filter id="g31b" x="-50%" y="-50%" width="200%" height="200%"><feGaussianBlur stdDeviation="0.6"/></filter><path d="M92.3 40.3L77.4 38.1C75.1 37.8 74.9 41.5 77.2 42.1L91.7 45.8ZM84.5 60.9L72 52.6C69.9 51.2 67.7 54.4 69.6 55.9L81.2 65.4ZM69.2 76.9L60.6 64.6C59.2 62.6 55.8 64.3 57 66.4L64.4 79.4ZM49.8 84.3L47.5 71.6C47.1 69.7 44.2 70.2 44.3 72.1L45 84.1ZM31.9 81.2L35.8 75.1C37.5 72.4 38.2 67.3 36.1 69.7L28.2 78.7ZM19.4 67.7L31.3 62.3C33.2 61.4 32.6 58.1 30.6 58.8L17.3 63.1ZM13.9 47.5L28.9 46.9C31.4 46.8 32 42.9 29.5 42.8L13.6 42ZM16.9 25.6L31 30.8C33.1 31.6 34.5 28.3 32.5 27.3L19.2 20.5ZM29 6.9L40.4 18.1C42.1 19.9 44.7 16.9 43.1 15L33.4 3.6ZM46.9 -5.1L52.8 7.6C53.7 9.5 56.7 8.1 56.1 6.1L51.9 -6.2ZM65.9 -6.9L64.6 2.8C64.3 4.8 66.2 7.4 66.8 5.5L70.3 -6ZM81.5 1.4L72.5 8.8C71.1 9.9 72.5 12.3 74 11.4L79.3 8.5 85.1 4.6ZM91.4 18.6L76.8 22C74.5 22.6 75.3 26.3 77.6 26L92.5 23.9ZM89.2 50.9L75.3 45.5C73.2 44.6 71.6 47.8 73.6 48.9L87.7 56.3ZM77.2 69.3L66.5 58.8C64.7 57 62.1 60 63.8 61.9L73.5 73.4ZM59.4 81L53.7 68.3C52.8 66.3 50 68.2 50.7 70.3L54.6 82.7ZM40.3 83.9L41.2 72C41.3 70.2 38.5 70.7 38.2 72.5L37.6 77.2 35.9 83ZM24.9 75.5L34 67.9C35.3 66.8 34 64.5 32.5 65.4L21.5 72.2ZM15 58.3L29.6 55C32 54.5 31.4 50.7 29 51L14.1 53ZM14.2 36.4L29.1 38.6C31.5 38.9 32.5 35.2 30.1 34.6L15.6 31ZM22.3 15.8L34.8 24.1C36.8 25.4 38.8 22.2 37 20.7L25.3 11.2ZM37.5 -0.1L46.1 12.1C47.5 14.1 50.8 12 49.6 9.9L42 -3.1ZM56.7 -7.3L59 4.4C59.3 6.2 62.1 5.8 62 3.9L61.4 -8ZM74.4 -4.3L70.5 2.6C69.1 5.1 68.8 9.6 70.6 7.4L78.2 -1.8ZM87.2 9.1L75.4 14.5C73.4 15.4 74.2 18.8 76.3 18.1L89.5 13.7ZM92.6 29.3L77.7 30.1C75.2 30.2 75.6 34 78 34.1L93 34.8Z" fill="#162046" /><path d="M137.6 49.2L93.2 41.9C85 40.5 81.8 51.9 89.4 55.5L137.3 78.1ZM137.5 99.9L84.3 62.5C77.5 57.8 69.8 66.5 75 72.9L104.6 109.4ZM86 109.4L68.3 78C64.4 71.1 54.5 76.3 56.3 84L62.3 109.3ZM49.6 109.6L48.6 84.6C48.3 77.6 38.8 77.6 36.8 84.3L29.1 109.1ZM14.6 109.3L30.4 81.5C33.8 75.5 27.4 68.8 22.1 73.3L6.1 86.8 -19 109.8ZM-25 92.2L0.6 76.5 18.1 66.8C25 63 20.8 52.8 13.1 54.6L-24.8 63.5ZM-24.7 48.2L12.3 46.1C20.6 45.6 22.6 34 14.4 32.2L-24.6 23.6ZM-24.3 7.2L16.5 23.8C24.2 27 30.1 16.7 23.5 11.6L-23 -24.8ZM2.1 -24.7L29.7 5.6C35.2 11.6 44.1 4.2 40.4 -3L29.5 -24.4ZM42.2 -24.8L47.8 -6.7C50 0.5 60 -1.5 60.1 -8.9L60.4 -24.9ZM71.2 -24.3L67.3 -7.7C65.7 -1.1 74.1 2.3 77.8 -3.3L92.2 -25ZM109.3 -24.4L93.9 -8.7 83 1.6C77.7 6.8 83.5 15.2 90.2 11.9L109 2.7 137.2 -12.4ZM137.5 6.2L111.7 14.4 92.5 19.8C84.6 22 86.2 33.5 94.4 33.4L137.4 33.1Z" fill="#2c3f76" /><g filter="url(#g31b)"><path d="M57.7 22.7L58 23.3 58.6 29.3 59.6 32.1 61.8 34.2 65.5 35.6 76.3 36 107.1 38.8 137.1 41.1M54.4 50.6L54.5 50 56.9 47 59.2 45.1 61.1 44.7 64.3 44.9 77.6 53.6 137.2 88.3M52.7 52.7L61.2 62.1 70.5 73.9 81.5 89.4 94.8 109.4M47.1 65.6L50 73.9 52 82.6 54 94.5 55.9 109.4M36.4 76.1L21.9 109.7M36.7 62L27.3 66 16.1 72.7 -0.2 84.2 -24.9 102.9M40 48.6L26.4 49.1 13.4 50.3 -24.2 55.7M56.9 23.4L55.2 31.7 53.9 34.3 51.1 35.5 44.1 35.5 29.5 32.4 -24.9 15.5M49 27.6L47.8 28.1 47.2 27.7 39.4 20.1 15 -2 -9.1 -24.6M60.4 21.5L61.1 21.9 61 21.2 58.7 17.6 56.5 15.8 54 12.7 48.1 3.4 42.6 -8.3 36.3 -24.1M60.8 19.2L60.3 16.9 60.7 13.9 62.4 8.1 63.7 5.2 63.3 1.9 63.4 -4.1 65.8 -24.9M72.2 7.5L82.6 -3.3 100.3 -24.9M60.1 21.9L62.4 22.9 77.6 19.8 87.2 17.2 106.9 10 137.4 -2.8M70.6 42.4L73.9 43.1 90.1 48.3M58.1 48.4L59.2 48.8 65.6 55.1 79.7 67.8M50.7 60.9L52.9 63.7 55.6 67.9 61.9 80.3M42.6 70.6L42.9 77.1 42.6 84.1M35.2 68.2L26.5 77.2M44.2 55.6L30.5 56.9 23.7 58.4 16 60.8M39 41.3L13.4 39.1M41.5 31.9L35.2 26.7 20.6 18.1M52.9 23.8L35.1 1.2M58.7 8L56.4 1.9 54.3 -6.9M69.2 2.7L72.4 -5.2M70.3 14.3L77.5 11.7 86.3 6.8M66.6 29.2L93.2 26.5" fill="none" stroke="#641a0b" stroke-width="3.0" /><path d="M57.7 22.7L58 23.3 58.6 29.3 59.6 32.1 61.8 34.2 65.5 35.6 76.3 36 107.1 38.8 137.1 41.1M54.4 50.6L54.5 50 56.9 47 59.2 45.1 61.1 44.7 64.3 44.9 77.6 53.6 137.2 88.3M52.7 52.7L61.2 62.1 70.5 73.9 81.5 89.4 94.8 109.4M47.1 65.6L50 73.9 52 82.6 54 94.5 55.9 109.4M36.4 76.1L21.9 109.7M36.7 62L27.3 66 16.1 72.7 -0.2 84.2 -24.9 102.9M40 48.6L26.4 49.1 13.4 50.3 -24.2 55.7M56.9 23.4L55.2 31.7 53.9 34.3 51.1 35.5 44.1 35.5 29.5 32.4 -24.9 15.5M49 27.6L47.8 28.1 47.2 27.7 39.4 20.1 15 -2 -9.1 -24.6M60.4 21.5L61.1 21.9 61 21.2 58.7 17.6 56.5 15.8 54 12.7 48.1 3.4 42.6 -8.3 36.3 -24.1M60.8 19.2L60.3 16.9 60.7 13.9 62.4 8.1 63.7 5.2 63.3 1.9 63.4 -4.1 65.8 -24.9M72.2 7.5L82.6 -3.3 100.3 -24.9M60.1 21.9L62.4 22.9 77.6 19.8 87.2 17.2 106.9 10 137.4 -2.8M70.6 42.4L73.9 43.1 90.1 48.3M58.1 48.4L59.2 48.8 65.6 55.1 79.7 67.8M50.7 60.9L52.9 63.7 55.6 67.9 61.9 80.3M42.6 70.6L42.9 77.1 42.6 84.1M35.2 68.2L26.5 77.2M44.2 55.6L30.5 56.9 23.7 58.4 16 60.8M39 41.3L13.4 39.1M41.5 31.9L35.2 26.7 20.6 18.1M52.9 23.8L35.1 1.2M58.7 8L56.4 1.9 54.3 -6.9M69.2 2.7L72.4 -5.2M70.3 14.3L77.5 11.7 86.3 6.8M66.6 29.2L93.2 26.5" fill="none" stroke="#3a0e08" stroke-width="1.0" /></g><g filter="url(#g31)" fill="#862409" stroke="#862409" stroke-width="9" opacity="0.92"><path d="M40.6 32.3C42.5 29.7 47.3 26.9 51 25C54.6 23.1 59.8 20 62.4 20.8C65 21.7 65.7 27.4 66.6 30.2C67.4 33 68.1 34.9 67.6 37.5C67.1 40.1 65.5 43.5 63.4 45.8C61.4 48 58.1 49.5 55.1 51C52.2 52.5 48.2 55.1 45.8 54.7C43.4 54.4 41.6 51.3 40.6 48.9C39.5 46.5 39.5 43.4 39.5 40.6C39.5 37.8 38.7 34.9 40.6 32.3Z"/><path d="M69.7 3.2C70.9 4 71.8 6.4 71.8 8.4C71.8 10.3 71.4 12.8 69.7 14.6C68 16.4 63.3 19.2 61.4 19.4C59.5 19.5 58.6 17.5 58.3 15.6C57.9 13.8 58.3 10.4 59.3 8.4C60.3 6.3 62.8 4.4 64.5 3.6C66.2 2.7 68.5 2.4 69.7 3.2Z"/><path d="M47.9 55.1C49.2 55.8 50.3 59.1 49.9 61.4C49.6 63.6 47.7 66.9 45.8 68.6C43.9 70.4 40.3 71.9 38.5 71.8C36.7 71.6 35.1 69.3 34.8 67.6C34.4 65.9 35.3 63.1 36.4 61.4C37.6 59.6 39.7 58.3 41.6 57.2C43.5 56.2 46.5 54.4 47.9 55.1Z"/></g><g fill="#000"><path d="M40.6 32.3C42.5 29.7 47.3 26.9 51 25C54.6 23.1 59.8 20 62.4 20.8C65 21.7 65.7 27.4 66.6 30.2C67.4 33 68.1 34.9 67.6 37.5C67.1 40.1 65.5 43.5 63.4 45.8C61.4 48 58.1 49.5 55.1 51C52.2 52.5 48.2 55.1 45.8 54.7C43.4 54.4 41.6 51.3 40.6 48.9C39.5 46.5 39.5 43.4 39.5 40.6C39.5 37.8 38.7 34.9 40.6 32.3Z"/><path d="M69.7 3.2C70.9 4 71.8 6.4 71.8 8.4C71.8 10.3 71.4 12.8 69.7 14.6C68 16.4 63.3 19.2 61.4 19.4C59.5 19.5 58.6 17.5 58.3 15.6C57.9 13.8 58.3 10.4 59.3 8.4C60.3 6.3 62.8 4.4 64.5 3.6C66.2 2.7 68.5 2.4 69.7 3.2Z"/><path d="M47.9 55.1C49.2 55.8 50.3 59.1 49.9 61.4C49.6 63.6 47.7 66.9 45.8 68.6C43.9 70.4 40.3 71.9 38.5 71.8C36.7 71.6 35.1 69.3 34.8 67.6C34.4 65.9 35.3 63.1 36.4 61.4C37.6 59.6 39.7 58.3 41.6 57.2C43.5 56.2 46.5 54.4 47.9 55.1Z"/></g><ellipse cx="36.4" cy="75.5" rx="1.8" ry="1.8" fill="#000" /><ellipse cx="36.4" cy="31.2" rx="1.5" ry="1.5" fill="#000" /><ellipse cx="70.3" cy="43.1" rx="1.4" ry="1.4" fill="#000" /><ellipse cx="57.2" cy="5.7" rx="0.8" ry="0.8" fill="#000" /><ellipse cx="73.8" cy="11.5" rx="0.8" ry="0.8" fill="#000" /><ellipse cx="33.3" cy="63.4" rx="0.8" ry="0.8" fill="#000" /><ellipse cx="48.9" cy="65.5" rx="0.8" ry="0.8" fill="#000" /></svg></div>
<div class="a tile" style="left:454.30px;top:230.50px;width:112.90px;height:84.30px"><svg width="100%" height="100%" preserveAspectRatio="none" viewBox="0 0 113 85"><rect width="113" height="85" fill="#223164"/><filter id="g34" x="-50%" y="-50%" width="200%" height="200%"><feGaussianBlur stdDeviation="0.45"/></filter><path d="M108.3 49.8L97.3 49.3 89.3 49.9C87.8 50 88.4 52.3 90 52.4L96.9 53 107.7 55ZM103.3 66.2L88.8 57.3C87.6 56.6 85.6 57.5 86.7 58.5L100.3 70.3ZM91.3 78.5L85.6 69.1 82 61.9C81.2 60.4 78.4 60.3 79 62L81.9 70.5 86.8 81.4ZM74.4 85.2L72.7 73.3 71.9 63.3C71.7 61.4 68.7 60.7 68.6 62.7L68.3 73.7 68.6 85.7ZM55 84.4L58 71.8 60.8 62.2C61.4 60.2 58.4 58.7 57.6 60.6L53.7 69.8 49.1 83.1ZM36 77.3L44.4 63.7 50.2 55.5C51.7 53.3 48.6 50.2 47 52.3L30.8 73.9ZM20.5 63.6L31.6 53.6 38.5 46.3C40.1 44.5 37.3 41.9 35.6 43.5L28.2 50.3 17.1 58.7ZM10.1 47L21.2 42.3 29.9 37.4C31.5 36.5 30.3 33.7 28.5 34.5L20.3 38.1 8.8 41.5ZM7 29.1L19 29.4 25.9 28.4C27.3 28.2 25.9 26.6 24.5 26.5L18.5 25.9 7.7 23.9ZM12.5 13L21.8 18.9 26.6 22.5C27.7 23.4 29.7 22.5 28.7 21.4L24 16.3 15.7 9.1ZM24.4 0.5L30.5 10.8 33.9 18C34.7 19.7 37.4 18.9 36.8 17.2L33.9 8.6 29.5 -1.4ZM41.8 -5.6L44.5 16.3C44.8 18.3 48 19 47.9 17L47.6 -6ZM61.3 -5.6L55.8 17.8C55.4 19.7 58.2 21.1 58.9 19.2L62.9 8.9 67.2 -4.4ZM80.1 1.9L71.3 16.4 66.1 23.8C64.7 25.9 68.3 28 69.9 26L85.4 5.1ZM95.4 15.2L84.3 25.2 77.4 32.5C75.8 34.2 79.1 35.9 80.8 34.4L88.4 27.8 99.6 19.5ZM105.8 31.7L94.6 36.1 85.7 40.6C84.1 41.5 85.4 44.1 87.2 43.4L95.6 40.3 107.2 37.2ZM106.9 58.4L96.3 55.3 89.5 53.9C88.2 53.6 88.4 55.5 89.6 56.1L105 63.2ZM97.8 72.7L90.1 64.9 85.6 59.6C84.6 58.4 82.8 59.8 83.6 61.1L87.8 67.9 94.4 76.7ZM83.2 82.4L79.3 71.1 77.1 62.4C76.6 60.5 73.8 61.6 74.1 63.5L75.4 72.4 78 84.2ZM64.8 86.2L66.3 63.2C66.5 61.2 63.5 60.3 63.1 62.2L60.8 73 59 84.8ZM45.3 81.6L51.2 67.8 55.8 59C56.9 57 53.6 55.3 52.4 57.2L47 65.6 39.9 78.8ZM27.6 71.2L44.7 50.3C46.4 48.2 43 45.4 41.2 47.4L34 55.7 23.5 66.4ZM14.1 55.9L25.8 48.2 33.6 41.9C35.2 40.6 32.9 38.1 31.1 39.3L22.8 44.8 12.1 50.3ZM7.8 38L18.6 35.8 27.1 32.9C28.8 32.3 28.5 29.5 26.8 29.9L19 31.8 7 32.6ZM8.7 20.6L25 25.3C26 25.6 26.7 24.2 25.8 23.7L10.7 15.9ZM17.5 6L25.1 14 29.9 20.3C30.9 21.6 32.9 20.2 32.2 18.9L28.2 11.9 21.8 3ZM32.8 -3.2L36.7 8.2 39 16.9C39.5 18.8 42.6 18.9 42.3 16.9L40.8 7 38.1 -4.7ZM51.4 -6.3L50.2 16.6C50.1 18.7 53.4 18.9 53.7 16.8L57.3 -5.9ZM70.7 -2.2L65.5 10.8 61.2 19.8C60.2 21.8 63.4 23.4 64.6 21.5L69.2 13.8 76.6 -0.4ZM88.1 8.2L72.4 27.6C70.7 29.6 73.8 32.6 75.5 30.6L82 23.1 93.2 11.7ZM101.8 22.9L89.9 30.4 82.1 36.5C80.5 37.8 82.7 40 84.4 38.9L93 33.7 103.8 28.4ZM108.3 40.7L96.5 42.9 87.8 45.3C86.2 45.8 86.6 48.5 88.3 48.2L96.2 46.9 108.2 46.2Z" fill="#283870" /><path d="M138 54.8L109.2 51.1C102.3 50.2 100.1 59.7 106.4 62.5L137.6 76.2ZM137.4 89.1L103.5 67.7C97.6 64 91.4 71.5 96 76.7L125.2 109.7ZM109.8 109.2L90.7 79.9C86.7 73.8 77.4 78.1 79.6 85L87.3 109.8ZM77.1 109.8L73.1 86.1C71.9 78.5 60.9 78.4 60.2 86.1L58.2 110ZM48.2 109.6L53.4 85.2C55.1 77.3 44.1 73.1 40.7 80.4L27 109.3ZM14.1 109.4L34.3 77.2C38.7 70.2 29.4 62.8 23.5 68.5L-18.7 109.8ZM-24.4 96.3L1.2 77.1 18.5 63.5C24.8 58.5 18.3 48.9 11.1 52.3L-4.3 59.4 -24.6 68ZM-24.1 55.7L8.5 46.1C15.6 44 13.5 33.8 6.1 33.9L-24.9 34.5ZM-24.6 23.8L6.1 27.8C13 28.6 15.5 19.4 9.2 16.6L-24.6 1.5ZM-24.8 -12.1L12.3 11.5C18.1 15.2 24.6 8.1 20.1 2.9L-3.6 -24.3ZM9.9 -24.5L25 -0.9C29 5.3 38.7 1.5 36.5 -5.6L30.7 -24.7ZM40.1 -24.2L42.9 -7.4C44.2 0.2 55.4 0.9 56 -6.9L57.5 -24.8ZM66.8 -25L62.9 -6.4C61.2 1.6 72.4 5.3 75.8 -2L86.4 -24.6ZM98.2 -24.4L81.8 1.9C77.5 8.8 86.9 15.9 92.7 10.2L128.4 -24.8ZM138 -15.6L97.4 15.4C91.2 20.1 97.5 29.6 104.8 26.5L137.8 12.1ZM137.1 24L107.4 32.6C100.3 34.6 101.7 45 109.1 44.9L137 44.4Z" fill="#2e4282" /><path d="M78.5 50.9L79.8 51.2 91.3 48.6 100.3 48 115.3 48.2 137.2 49.5M87.2 55.3L91 57.7 137.8 82.5M80.9 56L82 59.7 83.7 63.3 89.4 72.7 100 87.3 117.1 109.4M71.9 48.7L72.5 52.5 73.2 66.5 74.6 76.4 77.6 91.1 82.1 109.5M64.3 52.8L58.3 77.8 53.3 109.4M64.3 51.2L62.9 50.5 60.9 50.1 58 50.6 54.7 52.7 50.7 57.2 41.1 72.4 20.9 109.2M45 30.7L45.3 35.3 44.1 40.1 41 45.3 35.2 52.2 26.7 60.6 14.2 72.1 -24.5 105.3M38.6 31.3L34.4 35.3 29.6 38.9 24.6 42.1 18.4 45.4 0.8 52.7 -24.6 61.8M33.6 26.3L31.3 26.8 24.9 29.6 16 30.8 0 30.7 -25 29.2M28.3 25L24.5 21.9 18.5 18.3 -24.6 -5M34.7 26L34.5 23.2 33.4 19.4 28.3 9.6 19.3 -3.6 3.6 -24.3M44.9 29.7L44.3 27 43 13.1 41.6 3.2 35.6 -24.2M53.3 27.8L53.1 26.6 53.4 23.6 58.1 1.1 62.1 -24.6M54.5 28L58.1 28.3 60 27.7 62.4 26 65.7 22.2 74 8.6 92.3 -24.8M73.2 46.8L72.4 45.7 71.9 43.8 71.7 41.8 72.2 38.9 74.4 34.4 79.4 28.1 87.8 19.6 99.6 8.7 137.5 -23.9M74.5 46.7L75.2 46.9 75.9 46.5 87.7 38.2 97.5 33.2 114.1 26.4 137.7 18.1M84.6 54.3L86 54.1 87.7 53.3 91.7 53.3 107.4 56.7M84 55.9L88.8 62 99.1 71.5M78.1 50.6L77.4 56.3 78.1 62.2 80.6 70.8 85 82M67.3 50.5L67.8 51.5 68 55.5 66.9 71.5 66.7 85.5M60.9 53.8L58 57.7 54.7 63.9 47.2 82.4M49 29.7L49.6 29.5 53.6 35.8 54.3 38.7 53.7 40.7 51 44.9 29.3 72.3M41 33L40 35.6 38.5 38.2 33.8 43.4 26.2 49.9 15.5 57.3M35.9 29.2L28.2 33.5 23.6 35.5 17 37.7 8.2 39.7M25.4 25.9L19.8 25 8.1 22.2M31.7 24.7L29.3 20.9 26.2 17 16.2 7.2M39.2 29.7L38.9 22.9 37.6 16 35 7.4 30.9 -2.8M48.7 29L49.5 6.3 49.5 -6.7M57 25.4L62.5 14 68.9 -2.9M68.8 48.6L65 44.2 63.4 41.6 63 39.7 63.4 37.7 66.5 32.7 86.8 6.6M75.5 43.8L77.8 39.5 82.6 34.4 89.6 28.8 100.3 21.5M77.1 48.1L78.3 48.2 93.2 42.4 107.8 38.9M80.6 52.8L82.4 52.8 88.2 51.3M84.9 55L86.7 56.9M79.7 53.3L79.4 56.7 80.1 60.6M69.7 50.2L70.3 54 70.2 62M63.4 52L62.5 52.6 62.2 54.6 59.8 60.1M67.4 50.6L66.8 49.5 63.5 47.2 60.7 46.2 58.7 46.2 56.8 46.8 54.2 48.3 49.2 53.3M42.9 32.2L42.7 35.1 41.7 37.9 37.9 43.8M37.9 30.1L30 35.4M28.7 25.9L26.1 27.1M29.6 24.5L27.9 22.3M36.7 28L36.6 23.4 35.9 19.5M46.8 30.1L46.3 17.6M54.7 27.2L57.3 18.9M51.4 29.5L56.3 31.9 59.3 31.9 61.1 31.2 63.6 29.5 67.7 25.2M74.1 45.6L74 42.9 74.8 40 76.2 37.3 78.6 34.1M77.9 46.8L85.6 42.5M82 55.3L84.1 59.5M74.1 47L75.1 49.5 75.4 61.5M66.2 51.4L64.9 61.7M61.1 52.4L59.7 52.6 58 53.7 54.7 57.4M47.5 30L48.6 35.5 48.3 39.5 46.8 43.1 43.5 48.1M39.7 32.6L36.6 36.5 33 40M34.5 27.6L27.8 31M32.9 24.6L31.4 20.4M42.6 30.5L41.9 27.7 40.8 17.8M50.7 28.6L51.8 18M57.9 26.2L59.9 24.6 62.4 21.4M71 47.4L68.8 43.2 68.6 39.2 69.8 35.4 73 30.3M76.5 44.5L82.5 38.3M79 49.6L87.2 47M80.6 51.9L83.5 51.5M80.2 53.4L82.1 54 83.6 53.8M81.1 54.2L82.3 54.4 83.1 55.5M80.2 55.5L80.2 56.3M79 52.6L78.4 56M76.7 48.1L77 48.7 76.2 56.4M72.3 47.7L73.5 49.6 73.9 55.6M71 48.2L70.4 48.7 71.1 51.3 71.5 56.3M68.8 50.1L69.2 55.8M66.9 51.6L66.9 56.2M66 51L64.9 51.4 64.9 55.4M63.5 52.8L62.8 55.5M61.6 53.9L61.3 54.6M60.6 53.1L60 53.5M63.5 51.8L59.4 51.6M65.9 50.4L62.4 48.7 60.4 48.4 58.4 48.6M68.7 49.2L62.9 44.3 60.3 42.9 58.4 42.8 55.7 44.1M48.8 30.6L50.9 36.1 50.6 40.1M46.2 31L46.9 34.9 46.4 38.9M43.9 31.9L44 34.7 43.3 37.7M42.6 31.3L41.9 31.3 41.7 34.5 40.6 37.2M40.2 33.2L38.7 35.7M40.3 31.4L39.2 31.9 37.2 34.1M38.1 30.8L35.4 33M36.8 29.5L34.6 31.1M35.7 28.4L33.3 29.5M33.8 27.1L32.2 27.6M32.1 25.6L31.6 25.7M33.8 26.1L33.7 24.6M36 28.1L35.5 27.8 35.7 24.8M38.2 29.8L37.6 29.5 37.8 24.1M41.2 32L40.3 24.8M43.9 30.5L42.7 23.8M45.8 29.2L45.2 24.3M47.9 29.3L47.6 23.9M49.2 29.4L49.7 29.9 49.8 29.3 50 23.7M51.7 28.6L52.3 23.8M53.9 27L54.4 24.6M56.3 26L56.4 24.7M57.3 27L58.7 26.9M51.8 29L52.5 28.8 52.8 28.1 55.6 29.7 57.6 29.9 59.5 29.6M50.8 30.1L54.1 33.5 56.6 35.2 58.6 35.5 61.3 34.3M71.2 48.1L70.7 48.1 70.4 48.7 67.2 43.9 66.3 41.1 66.5 38.1M71.8 46.9L70.7 44.2 70.3 42.2 70.7 38.3M73.4 45.9L73 42.4 73.6 39.4M74.6 46.3L75.1 45.9 74.8 43.4 75.8 40.6M76.1 44.1L77.5 41.8M76.8 45L78.9 43.1M77.1 46.6L80 44.6M78.2 47.4L81.7 45.8M78.3 49.2L82.3 47.7M79 50.3L82.5 49.6" fill="none" stroke="#12142c" stroke-width="1.05" opacity="0.92"/><g filter="url(#g34)"><ellipse cx="28.8" cy="27" rx="1.7" ry="1.2" fill="#882c0e" transform="rotate(57 28.8 27)" /><ellipse cx="25.5" cy="26.1" rx="1.1" ry="1.5" fill="#56170a" transform="rotate(49 25.5 26.1)" /><ellipse cx="24.7" cy="26.5" rx="0.9" ry="1.5" fill="#56170a" transform="rotate(29 24.7 26.5)" /><ellipse cx="26.5" cy="25.8" rx="1.2" ry="0.9" fill="#56170a" transform="rotate(1 26.5 25.8)" /><ellipse cx="28.4" cy="25.7" rx="1.1" ry="1.4" fill="#882c0e" transform="rotate(28 28.4 25.7)" /><ellipse cx="27.2" cy="24.6" rx="1.5" ry="1.3" fill="#56170a" transform="rotate(58 27.2 24.6)" /><ellipse cx="35.4" cy="26.6" rx="1" ry="1" fill="#56170a" transform="rotate(85 35.4 26.6)" /><ellipse cx="34" cy="26.5" rx="1.1" ry="0.9" fill="#56170a" transform="rotate(55 34 26.5)" /><ellipse cx="32.4" cy="26" rx="1.8" ry="1.6" fill="#882c0e" transform="rotate(56 32.4 26)" /><ellipse cx="31.6" cy="27" rx="1.9" ry="1.4" fill="#56170a" transform="rotate(48 31.6 27)" /><ellipse cx="31.9" cy="27.6" rx="1.1" ry="1.1" fill="#882c0e" transform="rotate(22 31.9 27.6)" /><ellipse cx="45.3" cy="32.6" rx="1.3" ry="1.7" fill="#56170a" transform="rotate(8 45.3 32.6)" /><ellipse cx="40.6" cy="28.7" rx="1.4" ry="1.6" fill="#882c0e" transform="rotate(60 40.6 28.7)" /><ellipse cx="41.2" cy="30" rx="1.3" ry="2" fill="#882c0e" transform="rotate(19 41.2 30)" /><ellipse cx="47.6" cy="29" rx="1.7" ry="1.8" fill="#882c0e" transform="rotate(75 47.6 29)" /><ellipse cx="49.9" cy="31.2" rx="1.8" ry="1.3" fill="#56170a" transform="rotate(49 49.9 31.2)" /><ellipse cx="43.7" cy="27.6" rx="1.3" ry="1.9" fill="#882c0e" transform="rotate(17 43.7 27.6)" /><ellipse cx="45.8" cy="30.1" rx="1" ry="1.2" fill="#56170a" transform="rotate(55 45.8 30.1)" /><ellipse cx="46" cy="27.7" rx="1.4" ry="2" fill="#56170a" transform="rotate(68 46 27.7)" /><ellipse cx="41.5" cy="29.4" rx="1.9" ry="1.8" fill="#56170a" transform="rotate(35 41.5 29.4)" /><ellipse cx="49.5" cy="30.4" rx="1.1" ry="2" fill="#56170a" transform="rotate(73 49.5 30.4)" /><ellipse cx="40.7" cy="29.4" rx="1.1" ry="2" fill="#56170a" transform="rotate(36 40.7 29.4)" /><ellipse cx="47.6" cy="31.9" rx="1.6" ry="1.5" fill="#882c0e" transform="rotate(8 47.6 31.9)" /><ellipse cx="43.7" cy="31" rx="1.2" ry="1.9" fill="#56170a" transform="rotate(5 43.7 31)" /><ellipse cx="41.1" cy="28.9" rx="1.3" ry="1.7" fill="#56170a" transform="rotate(35 41.1 28.9)" /><ellipse cx="39" cy="30.4" rx="1.2" ry="1" fill="#56170a" transform="rotate(4 39 30.4)" /><ellipse cx="50.6" cy="29.5" rx="1.2" ry="1.2" fill="#56170a" transform="rotate(43 50.6 29.5)" /><ellipse cx="42.7" cy="33.4" rx="1.9" ry="1.4" fill="#882c0e" transform="rotate(66 42.7 33.4)" /><ellipse cx="40.9" cy="32.4" rx="1.6" ry="1" fill="#56170a" transform="rotate(64 40.9 32.4)" /><ellipse cx="44.4" cy="32.8" rx="1.7" ry="2.1" fill="#882c0e" transform="rotate(33 44.4 32.8)" /><ellipse cx="41.1" cy="30.2" rx="0.9" ry="1.4" fill="#56170a" transform="rotate(2 41.1 30.2)" /><ellipse cx="42" cy="32" rx="1" ry="1.7" fill="#882c0e" transform="rotate(45 42 32)" /><ellipse cx="43.8" cy="29.1" rx="1.7" ry="1.9" fill="#882c0e" transform="rotate(7 43.8 29.1)" /><ellipse cx="54.1" cy="28.1" rx="1.3" ry="1.1" fill="#882c0e" transform="rotate(51 54.1 28.1)" /><ellipse cx="52.6" cy="27.1" rx="2" ry="1" fill="#882c0e" transform="rotate(46 52.6 27.1)" /><ellipse cx="53.8" cy="28.4" rx="1" ry="1.2" fill="#56170a" transform="rotate(82 53.8 28.4)" /><ellipse cx="55" cy="25.1" rx="1.1" ry="1.3" fill="#56170a" transform="rotate(47 55 25.1)" /><ellipse cx="56.1" cy="28.6" rx="1.6" ry="1.6" fill="#882c0e" transform="rotate(60 56.1 28.6)" /><ellipse cx="53.4" cy="30.3" rx="1.8" ry="2.1" fill="#56170a" /><ellipse cx="56" cy="26.4" rx="1.9" ry="2" fill="#882c0e" transform="rotate(52 56 26.4)" /><ellipse cx="52.7" cy="28.1" rx="1.4" ry="1.2" fill="#882c0e" transform="rotate(5 52.7 28.1)" /><ellipse cx="55.8" cy="28.4" rx="2" ry="1.6" fill="#56170a" transform="rotate(89 55.8 28.4)" /><ellipse cx="52.1" cy="30" rx="1.1" ry="1.4" fill="#882c0e" transform="rotate(80 52.1 30)" /><ellipse cx="53" cy="27.8" rx="1.4" ry="1.7" fill="#56170a" transform="rotate(25 53 27.8)" /><ellipse cx="54.6" cy="27.2" rx="1" ry="1.2" fill="#56170a" transform="rotate(78 54.6 27.2)" /><ellipse cx="64.8" cy="45.9" rx="1.8" ry="2.1" fill="#56170a" transform="rotate(67 64.8 45.9)" /><ellipse cx="71.2" cy="49.6" rx="1.9" ry="1.7" fill="#56170a" transform="rotate(14 71.2 49.6)" /><ellipse cx="64.6" cy="52.6" rx="1.3" ry="1" fill="#882c0e" transform="rotate(27 64.6 52.6)" /><ellipse cx="66.6" cy="49.9" rx="1.9" ry="1.4" fill="#56170a" transform="rotate(9 66.6 49.9)" /><ellipse cx="70.5" cy="52" rx="1" ry="0.9" fill="#56170a" transform="rotate(26 70.5 52)" /><ellipse cx="68.8" cy="43.7" rx="1.1" ry="1.1" fill="#882c0e" transform="rotate(25 68.8 43.7)" /><ellipse cx="63.9" cy="48" rx="1.1" ry="2.1" fill="#56170a" transform="rotate(49 63.9 48)" /><ellipse cx="67.2" cy="51.6" rx="1.1" ry="1.1" fill="#882c0e" transform="rotate(38 67.2 51.6)" /><ellipse cx="69.5" cy="45.5" rx="1.6" ry="1.8" fill="#882c0e" transform="rotate(45 69.5 45.5)" /><ellipse cx="69.4" cy="46" rx="1.2" ry="1.5" fill="#56170a" transform="rotate(7 69.4 46)" /><ellipse cx="67.8" cy="54.3" rx="1.9" ry="1.4" fill="#882c0e" transform="rotate(70 67.8 54.3)" /><ellipse cx="68.6" cy="46.4" rx="1.5" ry="0.9" fill="#882c0e" transform="rotate(23 68.6 46.4)" /><ellipse cx="64.2" cy="45.3" rx="1" ry="1.2" fill="#56170a" transform="rotate(59 64.2 45.3)" /><ellipse cx="66.5" cy="51.2" rx="1.5" ry="1.9" fill="#882c0e" transform="rotate(47 66.5 51.2)" /><ellipse cx="68.3" cy="48.6" rx="1.9" ry="1" fill="#882c0e" transform="rotate(78 68.3 48.6)" /><ellipse cx="67.1" cy="50.1" rx="1.2" ry="1.8" fill="#882c0e" transform="rotate(87 67.1 50.1)" /><ellipse cx="67.3" cy="50.5" rx="1" ry="1.1" fill="#56170a" transform="rotate(61 67.3 50.5)" /><ellipse cx="68.3" cy="49.6" rx="2" ry="1.6" fill="#882c0e" transform="rotate(30 68.3 49.6)" /><ellipse cx="67.8" cy="46.4" rx="1.2" ry="1.7" fill="#882c0e" transform="rotate(81 67.8 46.4)" /><ellipse cx="71.3" cy="49.7" rx="1.8" ry="1.1" fill="#56170a" transform="rotate(16 71.3 49.7)" /><ellipse cx="64.8" cy="45.6" rx="1" ry="1.5" fill="#882c0e" transform="rotate(53 64.8 45.6)" /><ellipse cx="67.1" cy="52" rx="2" ry="2" fill="#56170a" transform="rotate(58 67.1 52)" /><ellipse cx="72.1" cy="47.9" rx="1.2" ry="1.3" fill="#882c0e" transform="rotate(18 72.1 47.9)" /><ellipse cx="71.6" cy="52.1" rx="1.5" ry="1.1" fill="#56170a" transform="rotate(43 71.6 52.1)" /><ellipse cx="73.6" cy="41.5" rx="1.4" ry="1.2" fill="#882c0e" transform="rotate(84 73.6 41.5)" /><ellipse cx="70.9" cy="42.5" rx="1.7" ry="1.3" fill="#882c0e" transform="rotate(62 70.9 42.5)" /><ellipse cx="73.6" cy="41.7" rx="1.4" ry="1.6" fill="#56170a" transform="rotate(24 73.6 41.7)" /><ellipse cx="71.2" cy="43.1" rx="1.7" ry="1.8" fill="#56170a" transform="rotate(11 71.2 43.1)" /><ellipse cx="73.6" cy="42.8" rx="1" ry="1.9" fill="#56170a" transform="rotate(56 73.6 42.8)" /><ellipse cx="72.4" cy="41.7" rx="1.7" ry="1.9" fill="#882c0e" transform="rotate(5 72.4 41.7)" /><ellipse cx="72.3" cy="43.5" rx="1.6" ry="1.4" fill="#56170a" transform="rotate(24 72.3 43.5)" /><ellipse cx="71.2" cy="43.8" rx="1.7" ry="1.9" fill="#56170a" transform="rotate(3 71.2 43.8)" /><ellipse cx="81.6" cy="55.6" rx="1.6" ry="1" fill="#882c0e" transform="rotate(46 81.6 55.6)" /><ellipse cx="79.1" cy="53.8" rx="1.1" ry="1" fill="#882c0e" transform="rotate(30 79.1 53.8)" /><ellipse cx="83.7" cy="55.8" rx="1.8" ry="1.1" fill="#882c0e" transform="rotate(80 83.7 55.8)" /><ellipse cx="81.6" cy="54.8" rx="1.5" ry="1" fill="#882c0e" transform="rotate(71 81.6 54.8)" /><ellipse cx="82.9" cy="54.2" rx="1.1" ry="1.1" fill="#882c0e" transform="rotate(87 82.9 54.2)" /><ellipse cx="83" cy="56.6" rx="1.6" ry="1.4" fill="#882c0e" transform="rotate(8 83 56.6)" /><ellipse cx="79.6" cy="54.3" rx="1.4" ry="1.6" fill="#56170a" transform="rotate(59 79.6 54.3)" /><ellipse cx="80.2" cy="54.2" rx="1.2" ry="1.9" fill="#56170a" transform="rotate(31 80.2 54.2)" /><ellipse cx="83.4" cy="55.6" rx="1.4" ry="1.3" fill="#882c0e" transform="rotate(77 83.4 55.6)" /><ellipse cx="82.8" cy="54.9" rx="1.4" ry="1.9" fill="#882c0e" transform="rotate(62 82.8 54.9)" /><ellipse cx="87.7" cy="56.5" rx="1" ry="1.8" fill="#882c0e" transform="rotate(31 87.7 56.5)" /><ellipse cx="87.9" cy="54.1" rx="1.3" ry="0.9" fill="#882c0e" transform="rotate(49 87.9 54.1)" /><ellipse cx="87" cy="55" rx="1.8" ry="1" fill="#882c0e" transform="rotate(2 87 55)" /><ellipse cx="87.2" cy="54" rx="1.4" ry="2.1" fill="#56170a" transform="rotate(84 87.2 54)" /></g></svg></div>
<div class="a tile" style="left:112.80px;top:315.80px;width:112.80px;height:85.20px"><svg width="100%" height="100%" preserveAspectRatio="none" viewBox="0 0 113 85"><rect width="113" height="85" fill="#4260b4"/><filter id="g41" x="-50%" y="-50%" width="200%" height="200%"><feGaussianBlur stdDeviation="3"/></filter><path d="M108.8 39.2L100.3 36.4C98.7 35.9 97.8 38.4 99.4 39.2L107.6 42.9ZM103.2 52.2L94.6 45.4C92.9 44.1 90.5 46.3 92 47.7L100 55.2ZM92.2 63.3L85.2 53.6C83.8 51.8 80.6 53.6 81.8 55.5L88.1 65.8ZM77.7 71.3L73.4 60.1C72.5 57.9 68.9 58.9 69.5 61.1L73 72.6ZM61.3 75.1L60.2 63.1C60 60.8 56.3 60 56.3 62.4L56.4 75.4ZM44.2 74.6L46.7 61.8C47.2 59.4 43.3 58.8 42.6 61.2L39.2 73.7ZM27.8 69L33.2 57.2C34.3 55 30.5 53.7 29.3 55.9L23.6 66.4ZM13.7 59.8L21.1 50.4C22.5 48.6 19.9 46.2 18.3 47.8L10.2 56.6ZM2.7 48.3L11.6 42C13.3 40.8 11.5 38.1 9.7 39.2L1.1 44.2ZM-2.5 34.8L6.2 32.6C7.7 32.2 7.5 29.7 5.9 29.9L-3.1 30.9ZM-2.2 21.3L6.5 23.6C8.2 24.1 9 21.6 7.4 20.9L-1.9 17.2ZM3.5 8.5L11.5 14.5C13.1 15.7 15.4 13.5 13.9 12.1L5.8 4.7ZM13.8 -2.9L20.9 6.7C22.2 8.5 25.4 6.8 24.2 4.9L17.9 -5.3ZM27.8 -11.3L32.5 0.8C33.4 2.9 36.5 1 35.9 -1.2L32.4 -12.7ZM44.1 -14.8L44.9 -2.9C45 -0.6 48.5 0.2 48.6 -2L49 -15ZM61.2 -13.8L58 -0.1C57.4 2.3 61.4 3.1 62.1 0.7L65.9 -11.7ZM77.9 -8L72 4.7C70.9 7.1 74.7 9 75.9 6.7L82.5 -5.7ZM92.5 1.4L84.7 11.8C83.3 13.7 86.7 15.4 88.3 13.7L96.2 4.6ZM103.8 13L95.1 19.7C93.5 21 95.3 23.7 97.1 22.6L105.4 17.1ZM109.4 26.1L100.8 28.6C99.4 29 100.4 30.9 101.9 30.8L109.8 30ZM106.6 45.7L97.9 40.8C96.2 39.9 94.6 42.4 96.1 43.5L104.3 49.2ZM98.1 57.9L89.9 49.2C88.4 47.6 85.8 50.1 87.2 51.8L94.7 61.1ZM85.1 67.4L79.3 56.9C78.2 54.8 75 56.8 75.9 58.9L80.9 69.8ZM69.7 74L66.7 61.4C66.2 59.1 62.6 60.3 63 62.6L64.8 74.4ZM52.8 75.3L53.5 62.3C53.7 59.9 49.8 60.2 49.5 62.6L47.9 74.5ZM35.9 72L40 59.7C40.7 57.3 36.8 56.5 35.8 58.9L31 70.9ZM20.1 65.3L26.8 54.2C28 52.2 24.7 50.3 23.3 52.3L16.3 62.1ZM7.4 54.6L16.1 46.3C17.7 44.8 15 42.5 13.4 43.9L4.8 50.8ZM-0.3 41.5L8.6 37.1C10.3 36.3 8.4 34 6.7 34.7L-1.8 37.6ZM-3.1 28L5.9 28.1C7.4 28.1 7.6 25.8 6.1 25.5L-2.8 24.1ZM-0.6 14.5L8.4 19C10 19.8 11.6 17.3 10 16.3L1.6 10.9ZM8.3 2.7L16 10.6C17.5 12.1 19.8 9.6 18.5 8L11.5 -0.5ZM20.5 -7.5L26.3 3C27.4 5 31 4 30 1.9L24.6 -9.9ZM36 -13L38.6 -1.3C39.1 0.9 42.5 -0.2 42.2 -2.4L40.6 -14.3ZM52.6 -14.8L51.3 -1.8C51.1 0.5 54.8 1.2 55.2 -1.1L57.5 -13.9ZM69.5 -10.8L65.2 1.5C64.3 3.9 68.1 5.7 69.2 3.3L74.6 -9.6ZM85.3 -3.2L78.7 8C77.5 10.2 81.1 12 82.5 9.9L89.8 -0.8ZM98.3 7.4L89.9 16C88.4 17.6 91.1 19.9 92.7 18.4L101.7 10.5ZM106.8 19.8L98.1 24.7C96.5 25.6 98.7 27.3 100.4 26.7L108.8 23.3ZM109.9 32.7L101.9 32.5C100.4 32.4 100.2 34.6 101.6 34.9L109.4 36.5Z" fill="#4564ba" /><path d="M137.6 47.6L109.5 40.6C104.4 39.3 101.3 46.2 105.9 48.7L118.3 55.3 137.2 64.3ZM137.3 76.3L117 63.4 103.1 53.7C98.3 50.4 92.6 57 96.6 61.2L112.7 77.6 137.4 101ZM127.9 109.8L106.1 83.7 91.5 64.7C87.7 59.8 79.9 65.1 82.9 70.6L103.5 109.5ZM91 109.2L76.8 72.9C74.5 67 65.2 68.9 66.4 75.1L73 109.4ZM62.6 109.1L59.9 76.2C59.4 69.9 49.8 69.4 49.2 75.8L46 109.6ZM35.6 109.4L42.6 75.1C43.9 68.7 34.5 66.1 32.1 72.2L17.4 109.4ZM5 109.2L26 69.4C29 63.8 20.4 59.1 16.6 64.2L2 83.3 -19.5 109.7ZM-24.8 96.8L-3.4 75.9 11.8 59.9C15.9 55.5 9.8 48.8 5 52.4L-7.1 61.3 -24.5 73ZM-24.5 61.5L1 47.8C5.9 45.2 3 37.5 -2.4 39.1L-24.5 45.5ZM-24.5 36.9L-3.7 33.8C1.4 33.1 1.2 25.6 -3.9 25.2L-24.8 23.2ZM-24.2 14.8L-3.8 19.7C1.5 21 4.9 13.8 0 11.5L-24.2 -0.4ZM-24.8 -11.7L2.8 6.4C7.6 9.5 13.7 3.5 9.6 -0.6L-14.5 -24.5ZM-1.6 -24.9L14.4 -4.4C18.1 0.3 26 -4.2 23.2 -9.6L15.5 -24.7ZM24.5 -24.2L29.1 -12C31.2 -6.2 40.1 -8.9 39.1 -15L37.3 -24.8ZM44.9 -24.9L45.5 -16C45.9 -9.6 55.4 -8.8 56.2 -15.2L57.3 -24.1ZM65.2 -24.9L62.8 -14.2C61.4 -7.8 70.9 -4.4 73.3 -10.5L78.8 -24.5ZM88.3 -24.8L79.6 -7.9C76.6 -2.1 85 3.1 88.9 -2.1L105.8 -24.5ZM119.4 -24.7L105.3 -10.5 94.5 1.4C90.4 5.9 96.6 12.6 101.5 8.9L115.9 -1.9 137.5 -16.4ZM138 -4.1L118.4 5.9 105.4 13.5C100.7 16.2 104.1 23.4 109.4 21.9L137.2 13.7ZM137.3 23.2L110.6 27.1C105.6 27.8 105.6 35 110.6 35.5L137.5 38.1Z" fill="#4868c0" /><g filter="url(#g41)" opacity="0.35"><ellipse cx="51" cy="42.7" rx="7" ry="5.5" fill="#2a3e80" /><ellipse cx="55.1" cy="37.5" rx="7" ry="5.5" fill="#2a3e80" /><ellipse cx="60.3" cy="39.5" rx="7" ry="5.5" fill="#2a3e80" /><ellipse cx="58.3" cy="47.9" rx="7" ry="5.5" fill="#2a3e80" /><ellipse cx="65.5" cy="39.5" rx="7" ry="5.5" fill="#2a3e80" /><ellipse cx="70.7" cy="37.5" rx="7" ry="5.5" fill="#2a3e80" /><ellipse cx="72.8" cy="32.3" rx="7" ry="5.5" fill="#2a3e80" /><ellipse cx="79" cy="26" rx="7" ry="5.5" fill="#2a3e80" /><ellipse cx="81.1" cy="31.2" rx="7" ry="5.5" fill="#2a3e80" /><ellipse cx="85.3" cy="36.4" rx="7" ry="5.5" fill="#2a3e80" /><ellipse cx="90.5" cy="34.3" rx="7" ry="5.5" fill="#2a3e80" /><ellipse cx="94.6" cy="31.2" rx="7" ry="5.5" fill="#2a3e80" /><ellipse cx="98.8" cy="31.8" rx="7" ry="5.5" fill="#2a3e80" /><ellipse cx="10.4" cy="28.1" rx="7" ry="5.5" fill="#2a3e80" /><ellipse cx="15.6" cy="26" rx="7" ry="5.5" fill="#2a3e80" /><ellipse cx="19.8" cy="20.8" rx="7" ry="5.5" fill="#2a3e80" /><ellipse cx="27.1" cy="33.3" rx="7" ry="5.5" fill="#2a3e80" /><ellipse cx="28.1" cy="37.5" rx="7" ry="5.5" fill="#2a3e80" /><ellipse cx="34.3" cy="26" rx="7" ry="5.5" fill="#2a3e80" /><ellipse cx="36.4" cy="30.2" rx="7" ry="5.5" fill="#2a3e80" /><ellipse cx="36" cy="18.8" rx="7" ry="5.5" fill="#2a3e80" /><ellipse cx="44.7" cy="9.4" rx="7" ry="5.5" fill="#2a3e80" /><ellipse cx="45.8" cy="13.6" rx="7" ry="5.5" fill="#2a3e80" /><ellipse cx="48.9" cy="18.8" rx="7" ry="5.5" fill="#2a3e80" /><ellipse cx="14.6" cy="30.2" rx="7" ry="5.5" fill="#2a3e80" /></g><path d="M94.8 32L99.6 35.1 105.3 36.9 117 39.3 137.7 42.8M86 35.9L87.6 36.7 95.4 44.4 104.2 51 117.9 59.3 138 70.5M70.3 36.8L70.6 35.1 71.6 35 74.3 36.2 76.5 38.2 87.1 53.9 97.6 67.3 113.6 85.2 137 109.9M65.9 40.1L70.9 50.7 84.7 82.9 97 109.1M59.2 48.2L60.4 52.9 67.8 109.5M51.7 41.8L52.6 42.9 52.6 44.8 50 53.4 48.1 62.2 40.8 109.7M54.7 36.8L51.6 34.7 48.7 34.1 46.1 35.5 42.5 40.3 39.4 46.6 24.7 80.5 11.2 109.5M28.8 37.9L28.5 40.6 25.7 45.9 21.3 52.6 15.3 60.6 -0.8 79.7 -24.5 105.5M26.5 33L24.9 33.1 22.1 34.3 12.5 42.9 4.5 49 -7.2 56.7 -24.4 66.9M13.5 29.9L8.3 32.9 1.6 35.2 -9 37.9 -24.7 41.2M16.4 26.4L16.9 27.1 16.7 28 15.8 28.5 12.9 28 10.1 25.9 5.3 24.3 -24.2 19.1M19.3 21.7L17.7 21.1 10 14.8 1.7 9.1 -24.3 -5.8M33.8 25.2L29.9 22.1 27.8 20 21.4 9.8 14.8 1 5.2 -10.5 -7.6 -24.6M36.4 19.6L37.2 19.6 38.2 18 37.7 15.1 32.6 4.3 20.2 -24.2M44.5 8.3L41.2 -24.5M48 18.1L48.4 16.2 50.9 13.1 53 9.7 55.5 3.2 58.1 -7.5 61.1 -24.2M59.8 38.7L59.6 36.8 60.7 29.9 62.9 22.2 71.1 2.9 83.4 -24.5M77.9 26.5L77.3 24.8 78.2 20.9 80.8 15.5 84.5 9.6 95.2 -4.8 112.2 -24.5M81.5 30.7L86 27.3 95.8 17.4 103.6 11.1 117.8 1.7 137.6 -10M95.6 31L100.6 27.7 107.2 25.3 118.8 22.3 137.4 18.5M91.1 34.8L99.3 40.4 107.3 44.4M84.6 35.8L84 36 83.7 37.8 85.9 42.2 91.6 49.2 99.4 56.9M70.4 38.5L86.9 67M61.1 40L65.8 53.1 71.4 73.3M57.5 47.3L56.1 49.5 55.5 53.4 54.6 75.4M50.3 42.4L48.9 43.2 47.6 44.7 44.9 50.1 42.2 57.6 37.6 72.9M36 31L34.1 40.8 32.6 45.5 28.8 53.7 21.8 65.8M27.4 36.6L24.5 38.8 15.8 48.6 8.8 55.7M15.2 29.4L15.8 29.6 16.1 31.2 15.2 33 13.2 35.2 8.3 38.7 0.3 42.9M9.7 28.6L-3.1 29.4M15.3 24.9L8.8 20.4 -1.3 15.8M20.7 20.3L19.9 17.6 17.6 14.3 12.8 9.2 7 3.7M35.2 18.9L33.3 17.2 31 13.9 18.9 -6.9M44.9 13.8L41.5 10.4 39.7 6.9 34.1 -13.4M45.7 12.9L46.2 11.3 48.1 7.8 49.2 4 50.2 -4 50.8 -14.9M48.7 19.5L48.9 20.2 49.7 20.7 50.7 20.8 52.6 20.2 54.9 18.3 57.8 14.3 62.4 4.3 67.9 -11.8M72.1 32.5L71 31.5 70.6 28.5 71.1 23.6 72.3 18.7 76.2 9.5 84 -4.5M80.1 26.1L90.1 13.7 97.6 5.6M89.3 34.2L89.8 32.6 93.3 27.7 95.3 25.5 100.1 21.9 106.1 18.4M99.9 31.7L109.9 31.3M90.6 33.6L92.2 33.2 93.1 33.6 99 37.3M85.6 37.4L88.6 41.4 92.6 45.9M71.4 37.5L73.5 39.1 75.4 41.5 82.7 53.4M64.5 39.7L64.3 41.4 64.9 43.3 71 59.2M58.1 48.6L58.2 62.3M50.9 43.4L47.5 51.5 45 60.1M37.2 30.1L38.6 31.2 39.3 33.1 39 37.1 36.1 45.6 31.7 55.6M27.5 38.2L20 48.8M27.7 33.1L28.2 32.7 28.1 31.9 26.5 30.6 23.6 30.1 21.7 30.5 20 31.6 15.2 36.7 11.4 40M11.5 28.5L9.8 30 7 31M14.8 26.3L7.8 22.7M19.3 20.3L13.4 13.9M35 26.1L36.1 24.9 36 22.9 32.1 19.8 30.1 17.6 23.1 6.6M48.2 19.5L46.7 20.7 45.7 20.5 43.6 18.4 38.3 9.9 34.5 0.7M45.7 8.9L46.4 5 46.7 -1M49.6 18.4L52.5 15.8 55.4 11.8 57.5 7.3 59.9 0.7M65.3 38.8L66.1 35.2 66.4 27.2 67.4 22.3 69.6 15.7 73.6 6.5M79.1 25.3L81.6 20.2 86 13.5M81.7 32L83.6 32.2 86.3 31 95.4 21.8M98.6 31L100.9 29.8M89.5 34.8L90.9 37.1 96.3 41.6M73.7 32.6L76.6 32.9 78.1 34.1 79.8 36.6 83.6 43.6 88.3 50.1M65.7 38.8L66.3 38.4 67.3 38.6 68.5 40.2 77.2 57M59.5 40.2L59.1 42.1 59.2 44.1 62.3 50.3 64.7 61M55.9 37.6L56.6 37.7 56.9 38.7 55.6 44.6 53.1 52.1 51.6 62M54.7 38.2L52.3 39.7 48.4 40.3 45.3 42.8 42.3 48 38.3 58.3M35.9 29.4L34.2 29.7 30.6 31.5 30 32.4 31.2 38.2 30.9 41.2 29.1 45.9 25.8 52M27 34.1L22.5 37.4 15.4 44.4M14.3 31L12.3 33 8.9 35.2M9.8 27.4L6.9 26.9M36.3 29.6L36.3 28.9 35.5 28.5 30.7 29.8 24.1 27.5 19.1 27.1 17.7 24.5 16.3 23 10 18.2M34 26.7L32.3 27 30.4 26.6 27.7 25.3 25.3 23.4 24.2 21.8 22 16.2 18.1 10.4M36.1 18.1L28.6 3.2M44 9.9L43 8.7 42.2 6.9 40.6 -0.9M46.8 13.7L48.7 11.6 50.7 8.1 53.1 -0.5M55.3 36.4L53.9 31.6 53.9 29.6 54.3 27.7 61.4 15.6 66.6 3.7M73.2 31.6L74.2 29.1 74.6 23.1 75.3 20.2 77.1 15.5 79.9 10.2M80.1 31.5L79.2 31.2 79.5 29.3 84.1 25.4 90.7 17.9M94.3 30.1L96.3 27.9 98.6 26.1M99.1 32.8L100.8 33.4M94 31.4L93.4 31.7 93.7 32.3 95.1 33.5M91.2 34.1L93.6 35.2M90.7 35.5L92.2 36.8M85.1 35.4L86.7 34.8 87.6 35.1 91 38.7M86.2 36.8L88.8 39.8M84.7 37.2L85.4 39 87 41.5M80.4 31.5L80 32.1 80.3 33 81.7 35.6 82.9 39.5 84.8 43M72.8 33.2L76.1 35.3 77.5 36.7 82.8 45.1M71.1 36.8L72.6 36.9 75 38.7 80 46.1M71 38L74.4 42.6 77.5 47.7M69.9 37.2L69.3 37.5 69.5 39.3 74.9 48.9M66.4 39.6L68.1 41.8 72.5 50.7M65.2 40.1L65.9 42.6 69.8 51.8M60.9 39.1L61.5 38.9 62.4 39.2 63.8 44 67 52.4M60.3 40.5L61 44.4 63 48.9 64.5 53.7M58.3 46.8L59.5 47.2 60.5 48.8 62 54.6M58.6 48.5L59.3 54.2M57.4 48.5L56.7 54.4M59.7 39.3L59.1 39.4 58.5 40.2 57.4 45 55.8 47.5 55 49.4 54.1 54.3M55.2 38.4L54.3 41.2 53.9 45.2 51.3 53.8M51.7 43.5L48.6 53M50.3 43.1L48.2 46.2 45.9 51.7M51.1 41.7L49.5 41.5 47.1 43.2 44.9 46.5 42.8 51M54.3 37.5L49.4 37.6 47.6 38.3 45.9 39.4 42.9 43.3 39.8 49.6M37 29.3L38.8 29 40.7 29.6 42.1 31 42.4 33 41.5 36.9 36.6 48.9M36.8 30.8L37.2 33.4 36.7 37.4 35.5 42.2 33.8 46.9M35.3 30.3L34 31.7 33.1 33.5 32.5 40.5 30.7 46.2M28.9 36.7L29.8 37.9 29.8 39.9 28.1 44.6M28.1 38.4L25.4 43.7M27.3 37.5L23.6 41.8M28 33.7L28.1 34.5 27.5 35.3 24.2 37.5 21.4 40.3M26.4 33.7L23.1 35.3 19.3 38.5M26.7 32.2L24.9 31.8 22 32.6 17.5 36.5M36.3 29.5L35.9 28.9 34.9 29 32.1 30 30.1 30.2 24.5 28.1 20.6 27.9 19 29 15.9 34.2M15.1 31.1L14.1 32.7M13.6 30.7L12.8 31.3M14.2 29.1L13.3 29 11.6 29.9M15.4 27L13.7 27 12 26M14.9 25.6L12.6 24M16.4 25.5L15.8 24 14.3 22.7M34.8 26.9L34.3 27.6 32.5 28.2 29.5 27.8 25 25.7 21.7 23.5 19.7 23.3 17.8 22.6 15.4 20.8M18.9 20.8L16.8 19M19.9 19.9L18.4 17.5M34.8 26.8L33.5 27.9 30.6 28.1 26.8 26.6 23.4 24.6 21.2 22.6 21.9 19.7 20.9 16.9M33.3 26L30.6 24.8 27.4 22.3 25.6 19.9 23.3 15.5M34.7 25L33.7 23.2 28.7 18.4 25.5 13.3M35.9 19.8L34.3 19.6 32.7 18.4 28.1 11.9M35.4 18.2L30.8 10.8M36.9 18.2L36.4 15.4 33.2 9.1M34.8 26.5L35.2 27 36.2 26.7 38.3 24.7 39.7 22 40.3 19.1 39.4 15.2 35.9 8M46.1 14.7L45.5 15.3 44.5 15.2 42.9 14.1 40.4 11 38.2 6.5M45.1 12.8L44.8 11.9 42 9.1 40.9 6.3M44.1 9.1L43.1 5.6M45.1 8.8L45.3 5.1M45.6 10.2L46.7 8.8 47.5 5.9M46.4 13L48.5 9.7 50 6M46.1 14.6L45.6 15.3 46.5 15.3 48.9 13.5 50.6 11.1 52.4 7.5M48.9 18.1L52.9 12.8 55.3 8.5M49.9 19.3L51.7 18.6 54 16.6 56.3 13.4 58.2 9.9M36.4 29.1L37.1 28.5 39 27.7 45.8 26.3 50.5 24.5 53.1 23 57.2 18.7 61.6 10.9M56.1 37.4L57 35.8 57.4 30.8 58.4 26.9 65 12.3M60.8 39.1L62.1 37.9 62.4 37 64.4 25.2 68.3 13.8M70.2 36.9L68.7 31.3 68.6 27.4 69.6 21.4 71.5 15.8M72.4 31.6L72.8 23.8 74.7 17.1M73.8 32.1L75.4 31.1 76.5 29.4 76.1 23.5 77.9 17.7M78.4 25.2L78.7 23.3 80.3 19.6M79.6 25.6L82.8 20.8M78.8 27L79.3 27.2 80.9 26.7 85 22.3M80.8 30.2L87.1 24.1M81.9 31.3L85.3 29.7 89 26.3M80.8 32.2L82.8 34.3 83.8 34.3 87.3 32.5 91.3 28M90.3 33.4L91.8 32.3 92.8 32.3 93.8 29M95.2 31.6L95.9 31.8" fill="none" stroke="#26346c" stroke-width="0.65" opacity="0.5"/><ellipse cx="51" cy="42.7" rx="1.1" ry="0.9" fill="#5a1810" transform="rotate(83 51 42.7)" /><ellipse cx="55.1" cy="37.5" rx="0.9" ry="1.3" fill="#5a1810" transform="rotate(12 55.1 37.5)" /><ellipse cx="60.3" cy="39.5" rx="1.1" ry="0.8" fill="#5a1810" transform="rotate(64 60.3 39.5)" /><ellipse cx="58.3" cy="47.9" rx="1" ry="0.8" fill="#5a1810" transform="rotate(53 58.3 47.9)" /><ellipse cx="65.5" cy="39.5" rx="0.9" ry="0.8" fill="#5a1810" transform="rotate(54 65.5 39.5)" /><ellipse cx="70.7" cy="37.5" rx="0.9" ry="1.1" fill="#5a1810" transform="rotate(28 70.7 37.5)" /><ellipse cx="72.8" cy="32.3" rx="1.3" ry="1.2" fill="#5a1810" transform="rotate(7 72.8 32.3)" /><ellipse cx="79" cy="26" rx="1.3" ry="1" fill="#5a1810" transform="rotate(28 79 26)" /><ellipse cx="81.1" cy="31.2" rx="0.9" ry="1.3" fill="#5a1810" transform="rotate(37 81.1 31.2)" /><ellipse cx="85.3" cy="36.4" rx="1.2" ry="1.1" fill="#5a1810" transform="rotate(73 85.3 36.4)" /><ellipse cx="90.5" cy="34.3" rx="1.1" ry="1.3" fill="#5a1810" transform="rotate(23 90.5 34.3)" /><ellipse cx="94.6" cy="31.2" rx="0.9" ry="1.1" fill="#5a1810" transform="rotate(24 94.6 31.2)" /><ellipse cx="98.8" cy="31.8" rx="1.1" ry="1.1" fill="#5a1810" transform="rotate(8 98.8 31.8)" /><ellipse cx="10.4" cy="28.1" rx="1.3" ry="1.2" fill="#5a1810" transform="rotate(63 10.4 28.1)" /><ellipse cx="15.6" cy="26" rx="1.3" ry="1.1" fill="#5a1810" transform="rotate(40 15.6 26)" /><ellipse cx="19.8" cy="20.8" rx="1.2" ry="1.4" fill="#5a1810" transform="rotate(46 19.8 20.8)" /><ellipse cx="27.1" cy="33.3" rx="1.1" ry="1.3" fill="#5a1810" transform="rotate(89 27.1 33.3)" /><ellipse cx="28.1" cy="37.5" rx="1.4" ry="0.8" fill="#5a1810" transform="rotate(38 28.1 37.5)" /><ellipse cx="34.3" cy="26" rx="1.2" ry="1.3" fill="#5a1810" transform="rotate(57 34.3 26)" /><ellipse cx="36.4" cy="30.2" rx="1.1" ry="1.4" fill="#5a1810" transform="rotate(15 36.4 30.2)" /><ellipse cx="36" cy="18.8" rx="1.2" ry="0.9" fill="#5a1810" transform="rotate(43 36 18.8)" /><ellipse cx="44.7" cy="9.4" rx="1" ry="1.1" fill="#5a1810" transform="rotate(5 44.7 9.4)" /><ellipse cx="45.8" cy="13.6" rx="1.5" ry="0.8" fill="#5a1810" transform="rotate(71 45.8 13.6)" /><ellipse cx="48.9" cy="18.8" rx="1.3" ry="1.3" fill="#5a1810" transform="rotate(40 48.9 18.8)" /><ellipse cx="14.6" cy="30.2" rx="1.1" ry="1" fill="#5a1810" transform="rotate(63 14.6 30.2)" /><ellipse cx="51" cy="42.7" rx="1.4" ry="1.2" fill="#7a2410" /><ellipse cx="52.4" cy="40.9" rx="1.4" ry="1.2" fill="#7a2410" /><ellipse cx="53.7" cy="39.2" rx="1.4" ry="1.2" fill="#7a2410" /><ellipse cx="55.1" cy="37.5" rx="1.4" ry="1.2" fill="#7a2410" /><ellipse cx="56.9" cy="38.2" rx="1.4" ry="1.2" fill="#7a2410" /><ellipse cx="58.6" cy="38.8" rx="1.4" ry="1.2" fill="#7a2410" /><ellipse cx="60.3" cy="39.5" rx="1.4" ry="1.2" fill="#7a2410" /><ellipse cx="62.9" cy="39.5" rx="1.4" ry="1.2" fill="#7a2410" /><ellipse cx="65.5" cy="39.5" rx="1.4" ry="1.2" fill="#7a2410" /><ellipse cx="67.3" cy="38.8" rx="1.4" ry="1.2" fill="#7a2410" /><ellipse cx="69" cy="38.2" rx="1.4" ry="1.2" fill="#7a2410" /><ellipse cx="70.7" cy="37.5" rx="1.4" ry="1.2" fill="#7a2410" /><ellipse cx="71.4" cy="35.7" rx="1.4" ry="1.2" fill="#7a2410" /><ellipse cx="72.1" cy="34" rx="1.4" ry="1.2" fill="#7a2410" /><ellipse cx="72.8" cy="32.3" rx="1.4" ry="1.2" fill="#7a2410" /><ellipse cx="59.3" cy="43.7" rx="0.9" ry="1.1" fill="#140808" /><ellipse cx="58.9" cy="45.1" rx="0.9" ry="1.1" fill="#140808" /><ellipse cx="58.6" cy="46.5" rx="0.9" ry="1.1" fill="#140808" /><ellipse cx="58.3" cy="47.9" rx="0.9" ry="1.1" fill="#140808" /><ellipse cx="58.1" cy="49.5" rx="0.9" ry="1.1" fill="#140808" /><ellipse cx="58" cy="51" rx="0.9" ry="1.1" fill="#140808" /><ellipse cx="57.8" cy="52.6" rx="0.9" ry="1.1" fill="#140808" /><ellipse cx="85.3" cy="36.4" rx="1.2" ry="1" fill="#7a2410" /><ellipse cx="87" cy="35.7" rx="1.2" ry="1" fill="#7a2410" /><ellipse cx="88.7" cy="35" rx="1.2" ry="1" fill="#7a2410" /><ellipse cx="90.5" cy="34.3" rx="1.2" ry="1" fill="#7a2410" /><ellipse cx="91.9" cy="33.3" rx="1.2" ry="1" fill="#7a2410" /><ellipse cx="93.2" cy="32.3" rx="1.2" ry="1" fill="#7a2410" /><ellipse cx="94.6" cy="31.2" rx="1.2" ry="1" fill="#7a2410" /></svg></div>
<div class="a tile" style="left:226.60px;top:315.80px;width:113.20px;height:85.20px"><svg width="100%" height="100%" preserveAspectRatio="none" viewBox="0 0 113 85"><rect width="113" height="85" fill="#3a0f08"/><filter id="g42" x="-50%" y="-50%" width="200%" height="200%"><feGaussianBlur stdDeviation="3.2"/></filter><filter id="g42b" x="-50%" y="-50%" width="200%" height="200%"><feGaussianBlur stdDeviation="0.75"/></filter><g filter="url(#g42b)"><path d="M109.2 53.4L91.7 49.4 77.9 47.2C74.2 46.6 73.6 50.5 77.2 51.5L87.8 54.3 106.2 62ZM94.1 79.1L79.7 62.4 77.6 59.1 76.3 55.3 75.1 53.7C72.6 50.5 69.7 53.2 71.5 56.8L77.2 68.5 86.9 84.8ZM66.6 91.6L62.1 59.9C61.6 56.5 58.2 56.4 58.1 59.9L57.3 92.9ZM36.1 87.7L49.4 57.5C50.8 54.3 47.4 53.4 45.5 56.3L27.9 83.1ZM12.2 68L39.3 49.1C42.2 47.1 40.7 43.9 37.5 45.4L6.9 60.2ZM1.9 39.1L19.9 37.8 34.8 36C38.6 35.5 37.9 31.5 34.1 31.6L21.1 31.8 2.2 29.9ZM8.6 9.8L28.1 22 30.4 23.9 31.2 26C32.9 30.6 40 28 36.7 24.4L28.5 15.6 14.5 2.8ZM31.6 -9.6L44.6 19.6C46 22.7 49.2 21.7 48.4 18.4L40 -13.5ZM61.8 -15L57.6 17.8C57.1 21.2 60.6 21.3 61.6 18L70.8 -12.6ZM90.1 -2.5L69.2 23C67 25.6 69.8 27.5 72.4 25.3L97.3 3.6ZM108.2 22.7L77 33.4C73.7 34.6 74 38.2 77.5 37.6L110 31.9ZM103.8 67.5L84.7 56.6 81 55.1 78.7 55.3C77.3 55.4 78 55.8 79 56.9L82.8 61 98.5 74.9ZM81.2 87L74.2 71.5 68.7 57.6C67.4 54.3 63.8 55.2 64.6 58.6L72.7 90.6ZM51.1 91.7L55.4 60C55.9 56.6 52.5 56 51.5 59.3L42 89.9ZM22.4 79.9L43.5 54.5C45.7 51.8 43.7 48.9 41 51.3L16.1 72.9ZM4.9 54.3L35.9 43C39.3 41.8 38.6 38.1 35 38.9L2.6 45.2ZM2.9 23.8L24.4 28.5 28.3 28.8 32.3 28 35.2 28.5C40.7 29.5 34.5 27.9 29.4 25.6L6.6 15.5ZM18.5 -1.7L29.7 11.1 39 22.9C41 25.5 43.9 23.7 42.3 20.8L26.1 -6.9ZM46.2 -14.2L50.9 17.5C51.4 20.9 54.9 20.5 54.9 17L55.5 -15ZM76.8 -10.7L63.8 19.7C62.5 22.7 65.4 24.2 67.2 21.4L85.1 -6.3ZM101 8.8L73.8 27.5C71 29.5 73 32.3 76.1 30.9L105.1 17.2ZM111.1 38.1L78.1 40.2C74.5 40.5 75 44.2 78.6 44.4L92.6 45.4 110.5 47.3Z" fill="#0e183c" stroke="#681c0d" stroke-width="1.6" stroke-linejoin='round'/></g><path d="M137.7 64L109.9 55.8C98.3 52.3 91.2 66.4 100.7 73.9L137.4 103.3ZM116.8 109.6L93 81.2C85.2 71.8 71.5 79.7 75.2 91.4L81 109.4ZM66.5 109.3L64.6 93.4C63.2 81 46.9 79.4 43.8 91.4L39 109.8ZM23.3 109.3L33.7 87.7C39 76.4 25.7 66.9 16.6 75.4L-19.7 109.8ZM-25 89.1L9.6 67.1C20.2 60.4 13.7 45.2 1.5 47.7L-24 52.8ZM-24.4 37L0.6 36.9C12.6 36.9 16 21.6 4.8 17.1L-24.9 5.1ZM-24.4 -14.6L9 7.5C19.1 14.1 30.4 3.2 23.6 -6.9L11.7 -24.2ZM27.5 -24.7L33 -11.9C37.8 -0.5 53.6 -4.3 53.3 -16.7L53.1 -24.7ZM65.6 -24.7L64.1 -15.8C62.1 -3.5 77.4 2.4 83.8 -8.3L93.4 -24.7ZM112.3 -24.3L92.4 -1.8C84.2 7.5 94.2 20.3 105.3 14.7L137.3 -1.8ZM137.3 16.5L109.5 24.6C97.7 28.1 99.1 44.1 111.3 45.2L137.2 47.6Z" fill="#24366e" /><g filter="url(#g42)" opacity="0.78"><ellipse cx="52" cy="35" rx="19" ry="10" fill="#88260c" transform="rotate(25 52 35)" /><ellipse cx="75" cy="53" rx="13" ry="8" fill="#922c0e" transform="rotate(30 75 53)" /><ellipse cx="31" cy="26" rx="8" ry="4.5" fill="#78220c" transform="rotate(10 31 26)" /></g><path d="M46.8 31.2C47.5 30.2 50.6 30.5 53.1 30.2C55.5 29.8 59.5 28.6 61.4 29.1C63.3 29.7 64.1 31.6 64.5 33.3C64.8 35 63.8 37.5 63.4 39.5C63.1 41.6 63.6 44.6 62.4 45.8C61.2 47 57.9 47.5 56.2 46.8C54.4 46.1 53.2 43.4 52 41.6C50.8 39.9 49.8 38.2 48.9 36.4C48 34.7 46.1 32.3 46.8 31.2Z" fill="#000"/><path d="M34 28.6 L37 27.4 L39.5 28.6 L42 27.2 L45 29 L48.5 29.5 L49 32.5 L45 32.2 L42 31 L38 31.2 L35.5 30Z" fill="#000" /><ellipse cx="54" cy="49" rx="1.2" ry="1.2" fill="#000" /><ellipse cx="63" cy="26" rx="1" ry="1" fill="#000" /></svg></div>
<div class="a tile" style="left:340.80px;top:315.80px;width:112.50px;height:85.20px"><svg width="100%" height="100%" preserveAspectRatio="none" viewBox="0 0 113 85"><rect width="113" height="85" fill="#3f5eb2"/><filter id="g43" x="-50%" y="-50%" width="200%" height="200%"><feGaussianBlur stdDeviation="3"/></filter><path d="M122.5 41.7L108.5 40.7C106.7 40.6 106.1 43.5 108 43.8L121.7 46.5ZM118.1 57.8L104.9 50.8C103.2 49.9 101.3 52.3 102.9 53.4L115.3 61.9ZM107.8 71.5L97.1 59.6C95.6 58 93.1 60.4 94.4 62.1L104 74.9ZM93.3 81.7L86.3 66.2C85.4 64.2 82.3 66.1 83.1 68.3L88.3 83.4ZM75.7 85.8L74.1 69.9C73.9 67.6 70.4 68.2 70.4 70.5L70.5 86.5ZM57.3 85.3L61.2 68.8C61.7 66.5 58.1 65.3 57.3 67.6L52 83.7ZM39.1 78.7L48.4 62.1C49.7 59.8 46 57.5 44.5 59.8L34.1 75.7ZM22.3 67.6L35.5 52.5C37.4 50.4 33.8 47.4 31.9 49.5L17.9 63.7ZM9.5 52.3L23.9 41.4C26 39.8 23.7 36.1 21.5 37.6L5.7 48.2ZM0.6 36.2L8.9 32.8 14.9 29.1C16.8 28 14.3 25.2 12.3 26.3L7 29.1 -0.6 31.4ZM-1.8 20.2L9.1 21.3C10.5 21.4 11.8 20 10.5 19.4L6.9 17.9 -0.9 15.8ZM3.1 5.1L9.9 9.3 15.4 13.6C17.2 15 20.1 12.9 18.5 11.4L13.3 6.7 6.2 1.2ZM14.5 -8.1L25.7 4.7C27.2 6.5 29.8 3.6 28.4 1.7L18.2 -12ZM29.6 -18.3L36.8 -2.9C37.8 -0.8 41 -2.5 40.3 -4.7L34.5 -20.6ZM47.3 -23.8L49.4 -6.9C49.6 -4.6 53.2 -5.2 53.2 -7.4L52.7 -24.4ZM66.2 -23.2L62.6 -5.5C62.1 -3.2 65.8 -2 66.5 -4.3L71.5 -21.6ZM84.6 -17.2L76.1 -0.2C75 2.2 78.7 4.2 80 1.9L89.6 -14.4ZM100.8 -6.2L89.2 7.6C87.5 9.6 90.3 12.6 92.1 10.8L104.7 -2.1ZM113.4 8.2L99.5 17.9C97.5 19.3 99.4 22.6 101.4 21.4L116.1 12.8ZM121.4 24.6L106.1 29.4C104.1 30.1 105.1 33.3 107.1 32.8L121.8 29.7ZM120.7 49.9L107.3 46C105.5 45.4 104.3 48.1 106 48.8L119.8 54.7ZM113.8 65.2L102 55.9C100.3 54.6 97.8 56.7 99.3 58.2L110.1 68.6ZM101.1 77.3L92.4 63.9C91.1 62 88 63.8 89.1 65.8L96.6 79.9ZM84.6 84.1L80.4 68.7C79.8 66.5 76.5 67.9 76.9 70.1L79.6 85.9ZM66.6 86.5L67.7 69.6C67.9 67.3 64.3 67.1 63.9 69.3L61.2 86.1ZM47.9 83L54.6 66.3C55.6 63.9 52.1 61.8 50.9 64.1L42.5 81.1ZM30.2 74L41.8 57.7C43.4 55.4 39.8 52.6 38.1 54.8L25.5 70.4ZM15.4 60.3L29.2 47.3C31.2 45.4 27.9 42.4 25.8 44.1L11.9 55.6ZM4.2 44.4L12 40 19.5 35C21.7 33.6 19.1 30.1 16.8 31.5L10 35.8 1.9 39.6ZM-1.1 28L6.8 26.4 11.3 24.3C12.4 23.8 11.1 22.6 9.8 22.7L-2.1 23.5ZM0.2 12.7L7.7 15.6 12 18.1C13.6 19 15.7 16.8 14.1 15.7L9.2 12.3 1.3 8.1ZM8 -2L20.6 9.4C22.4 11.1 24.7 7.9 23 6.1L11.9 -5.5ZM21.5 -14L30.8 0.2C32.1 2.1 35.2 0 34.1 -2L26 -16.9ZM38.4 -21.1L42.8 -5.8C43.5 -3.6 47.1 -4 46.7 -6.2L43.5 -22.9ZM56.7 -23.5L55.9 -6.5C55.8 -4.2 59.5 -3.9 59.8 -6.1L62.2 -24ZM75.6 -21.1L69.7 -4.1C68.8 -1.7 72.5 0.3 73.5 -2L80.7 -18.5ZM93.2 -12.3L82.8 3.6C81.3 5.8 84.9 7.9 86.5 5.9L97.4 -8.5ZM107.5 0.7L94.3 12.9C92.5 14.6 95.2 17.5 97.1 16L111.3 4.8ZM118.3 16L103.2 23.7C101.1 24.7 103 27.8 105.1 27L119.9 21.1ZM122.4 33.3L107.6 35.3C105.6 35.5 106.7 38.5 108.7 38.4L122.7 38.2Z" fill="#4261b7" /><path d="M137.2 45.1L123.3 43.3C117 42.5 115.4 51.6 121.4 53.8L137.3 59.6ZM137.7 69.8L118.2 59.5C112.6 56.6 107 64.2 111.9 68.3L137.3 89.4ZM138 105.9L107.2 73.1C102.7 68.3 94.7 73.8 98.1 79.4L116.4 109.3ZM104.3 109.8L92.4 83.3C89.5 77.1 79.8 79.7 81.3 86.4L86.7 109.8ZM76.7 109.9L74.3 87C73.6 80.2 63.3 80.4 62.6 87.3L60.7 109.2ZM50.6 109.4L55.5 85.9C56.9 78.8 46.7 75.3 44 82L32.8 109.9ZM20.9 109.4L36.8 79.4C40.3 72.7 30.8 66.4 26.2 72.4L-2.4 109.7ZM-20.1 109.7L20.6 66.9C25.7 61.5 17.7 53.4 11.8 57.9L-4 70.2 -24.3 84.9ZM-24.2 70.7L-6 60.2 7.5 51.7C13.5 48 7.9 38.9 1.4 41.6L-9.8 46.1 -24.8 51.5ZM-24.1 40.8L-0.8 35.1C5.2 33.6 3 24.8 -3.2 24.9L-24.2 25.2ZM-24.4 15.7L-2.6 18.8C3.3 19.6 6.2 11.5 0.6 9.3L-24.5 -0.7ZM-24.8 -12.2L3.1 3.4C8.8 6.6 14.8 -1 9.9 -5.3L-12.7 -25ZM2 -24.6L15.3 -9.6C19.8 -4.5 27.8 -10.8 24.3 -16.7L19.7 -24.4ZM28.5 -24.8L30.5 -20.3C33.3 -13.9 43.3 -16.7 41.7 -23.4L41.5 -24.4ZM68.1 -24.7L67.9 -23.7C66.5 -16.6 77 -13.5 79.6 -20.3L81.4 -24.9ZM90.1 -24.2L86.4 -17.1C83.1 -10.6 92.7 -5 97.1 -10.9L107.3 -24.5ZM120.1 -24.4L103 -6.2C98.1 -0.9 105 7.4 110.8 3.1L137.3 -16.5ZM137.8 -4.2L115.3 8.8C109.4 12.3 113.7 21.6 120.2 19.3L137.2 13.3ZM137.5 22.5L121.9 26C115.5 27.4 117.2 36.8 123.7 36.7L137.7 36.6Z" fill="#4565bc" /><g filter="url(#g43)" opacity="0.35"><ellipse cx="52" cy="8.4" rx="7" ry="5.5" fill="#2a3e80" /><ellipse cx="56.2" cy="9.4" rx="7" ry="5.5" fill="#2a3e80" /><ellipse cx="40.6" cy="13.6" rx="7" ry="5.5" fill="#2a3e80" /><ellipse cx="41.6" cy="19.8" rx="7" ry="5.5" fill="#2a3e80" /><ellipse cx="44.7" cy="22.9" rx="7" ry="5.5" fill="#2a3e80" /><ellipse cx="36.4" cy="28.1" rx="7" ry="5.5" fill="#2a3e80" /><ellipse cx="18.8" cy="19.8" rx="7" ry="5.5" fill="#2a3e80" /><ellipse cx="11.5" cy="21.9" rx="7" ry="5.5" fill="#2a3e80" /><ellipse cx="75.9" cy="26" rx="7" ry="5.5" fill="#2a3e80" /><ellipse cx="74.9" cy="38.5" rx="7" ry="5.5" fill="#2a3e80" /><ellipse cx="77.6" cy="36.4" rx="7" ry="5.5" fill="#2a3e80" /><ellipse cx="69.7" cy="38.5" rx="7" ry="5.5" fill="#2a3e80" /><ellipse cx="80.1" cy="45.8" rx="7" ry="5.5" fill="#2a3e80" /><ellipse cx="89.4" cy="37.5" rx="7" ry="5.5" fill="#2a3e80" /><ellipse cx="93.6" cy="43.7" rx="7" ry="5.5" fill="#2a3e80" /><ellipse cx="99.8" cy="41.6" rx="7" ry="5.5" fill="#2a3e80" /><ellipse cx="68.6" cy="52" rx="7" ry="5.5" fill="#2a3e80" /><ellipse cx="70.7" cy="55.1" rx="7" ry="5.5" fill="#2a3e80" /></g><path d="M100.1 40.8L103.6 39.8 110.6 39.6 137.6 40.9M94.5 43.1L96.4 43.7 101.2 47.3 108.2 51.2 137.3 64.5M75.8 37.9L78.9 40 83.7 41.4 86.3 42.9 88.2 45.2 93.7 53.6 101.6 62.6 115.8 76.7 137.7 97.2M79.3 46.2L79.2 47.9 80.6 51.6 95.7 82.1 110.2 109.5M71.5 54.7L73.1 56.7 74.1 60.6 77.9 87.3 81.5 109M69.3 52.8L65.5 59.5 62.3 70.1 59 86.7 55.7 109.5M73.9 38.3L73 38.2 72.2 38.8 70.7 42.5 68.7 44.8 61.8 48.7 57.9 51.9 54.6 55.7 51.8 59.8 47.2 67.5 42.1 77.3 26.9 109.9M70.5 38.1L70.1 36.4 68.8 34.9 65.6 32.6 62 30.8 60.1 30.2 58.1 30.2 55.5 31.6 52.1 35.2 18.1 75.9 -10.5 109.3M37.2 28.6L36.5 31.3 34 34.4 27.4 40.5 18.2 48.2 0.5 61.3 -24.6 77.7M44.3 22.4L43.8 22.1 43.4 21.2 41 23 39.2 23.8 30.2 23.3 25.3 23.9 22.6 25.2 12.9 32.3 5.8 36 -6.3 40.6 -24.5 46M10.7 22L-2 21.8 -25 20.4M18.7 18.9L17 16.7 14 14 6.5 9 -5 2.9 -24.9 -6.4M42 18.9L41.1 17.3 34.7 14.6 29.1 10.4 11.4 -8.6 -4.9 -24.8M41.4 13.8L41.8 13.4 42 11.5 41.1 8.6 24.4 -24.3M51.2 7.9L50.4 6.2 49.4 2.3 45.2 -24.4M56.5 8.3L58.6 3.8 60.6 -2.9 64.3 -24.6M70.4 38.5L70.9 38.2 71.3 38.9 71.5 38 70.3 35.3 64 28.9 62.3 26.4 61.8 24.5 62 22.5 63.4 18.8 69.7 8.6 73.9 0.6 85.7 -24.7M76.1 25.4L79.5 18.6 85.7 9.5 96.9 -4.6 113.5 -24.6M78 35.8L91.5 22.8 101.5 14.4 116.9 3.4 137.8 -10.3M90.1 36.9L99.3 31.2 108.4 27.1 120.7 22.8 138 17.8M100.2 42.5L104.7 44.1 121.2 48.2M93.2 44.3L93.7 45.8 94.9 47.5 99.1 51.7 105.2 56.8 115 63.8M81.1 45.7L82.6 46.8 84.5 49.1 93.7 63.4 102.3 75.7M74.7 39.1L73.5 46.7 73.7 48.6 78.8 59.5 86.6 84.3M70.3 55.8L69.1 69.6 68.5 86.5M67.7 51.5L65.9 52.2 63.6 54.1 61.1 57.2 59 60.7 54.8 69.7 49.8 83.9M69 38.7L63.4 40.2 59.8 41.7 56.4 43.9 52.7 47.2 44.3 57.2 32.4 74.5M44.6 23.6L43.8 28.3 42.8 32.2 39.4 38.3 31.5 47.3 16.6 62M35.8 27.9L32.3 28.9 27.9 31.2 13.9 40.9 5.3 46.1M18.3 20.5L14.8 21.8 13.9 21.4 12.8 24.2 9.6 26.6 4.9 28.3 -0.9 29.7M12.5 22.1L13.1 21.5 12.9 20.6 10.8 18.5 6.3 16.4 -0.4 14.2M40.8 20.6L37.8 20.9 33.9 20.3 29.1 18.9 26.4 17.6 16.6 7.6 7.5 -0.1M39.9 13.3L37.3 10.7 32.8 5.3 20.1 -12.6M44.5 22.1L44.8 21.4 48.9 17 49.7 15.2 49.6 14.2 46.8 8.9 44.8 4.3 36.3 -21.3M52.8 8.7L53.3 8.3 53.7 6.5 54.2 0.5 54.7 -23.5M56 10.1L57.3 10.9 59.2 10.5 61.5 8.6 63.8 5.4 67.9 -3.8 73.4 -20.9M75.8 27L75.3 27.6 73.5 26.7 72.3 24 72.3 21 73.4 17.1 77.5 9.1 91.1 -13M75.7 38.1L76 37.3 75 33.5 75.3 29.5 74.8 28.7 77.7 28 80.1 26.3 92.9 12.2 106.5 -1.1M77.3 37.2L78.7 38.1 80.6 38.4 83.6 38.3 85.5 37.7 88.8 32.8 94.9 27.5 104.9 21 117.3 14.4M88.6 37.9L88.6 38.7 89.1 39.6 90.8 40.6 91.8 40.6 94.6 39.6 99.8 36.7 104.5 34.8 112.3 33 122.1 31.5M100.6 41.6L107.3 42.2M94.1 44.1L103.1 51.6M79.5 45L79.7 44.3 81.6 44 83.4 44.7 85 45.9 95.5 60.5M75.6 38.9L78.2 43 77 46.8 77.3 49.7 84.3 66.3M71.2 55.6L71.8 59.2 72.2 69.2M67.9 52.7L65.8 54.8 63.6 58.1 59.6 67.3M69.8 39.4L67.9 41.4 60.1 45.9 56.2 49 51.4 54.1 46.7 60.6M45.4 23.1L47.2 24.9 48 26.8 48.1 29.8 47.2 32.6 45.4 36.2 42.6 40.3 34.3 50.3M36.1 28.8L23 39.3M19.6 20.4L19.7 21.3 18.7 23 14.3 27.1M19.7 20L20.5 19.7 20.7 17.7 19.8 15.9 17.3 12.9M40.1 14.4L38.4 14.1 35.1 11.9 31.5 8.4 27.6 3.9M42.6 19.6L44.4 14.1 44.5 11.2 43.3 7.3 39 -2.8M52.2 7.5L51.3 -6.2M56.9 9.4L58.9 7.8 60.6 5.3 62.3 1.7 64.2 -4M74.6 37.6L69.2 26.9 68.4 24 68.3 22 68.8 19 70.2 15.3 77.9 1.2M77 26.1L79 24.1 90.1 9.9M78.4 36.7L80.1 36.3 82.7 34.9 91.4 26.7 99.3 20.5M90.3 38.1L93.2 37.5 100.2 33.8 105.8 31.5M99.1 41.6L98.3 41.6 98.5 42.3 99.6 43.8 102.1 45.4 105.8 47M88.6 37.7L87.8 37.9 87.9 38.9 89 40.5 91.3 42.4 91.4 45.4 92.7 48.1 95.8 52.1 100 56.4M80.3 46.4L90 63.6M69.7 51.6L73.1 53.5 74.9 56 76.6 60.7 78.4 68.5M69.5 55.1L67.8 59.7 66 68.5M69.2 51.4L69.7 50.7 69.1 49.9 67.2 49.5 65.2 50.1 62.7 51.6 57.9 56.7 53.2 64.4M69 37.6L66.1 36.6 62.2 36.5 59.3 37.2 56.6 38.5 53.4 40.9 49.9 44.5 40.2 55.9M43.9 22.7L42.5 23.6 40.5 25.9 39.2 31.7 37.3 35.2 34.2 39.1 28.5 44.7M36.9 27.2L36.5 26.6 34.5 26.1 29.6 26.8 25 28.7 19.2 32.6M11.3 22.9L10.5 23.5M17.6 19.7L15.8 19 13.4 17.2M41 19.4L34.5 17.5 30.9 15.8 26.8 12.9 22.6 8.7M40.6 12.6L39.4 10 33 -0.1M51.3 9.3L49.7 8.5 48.1 6 45.1 -4.6M55.2 9.1L57.7 -5.4M44.8 22.1L52.4 16 58.3 14.9 60.1 14.1 62.5 12.3 66.8 6.7 71.2 -2.2M75.2 25.6L74.9 23 76.4 18.2 79.3 12.9 84.2 5.4M76.9 35.9L77 34.2 78.3 31.6 95.4 14.8M89 36.4L90.1 34.7 93.1 32.1 103.3 25.8M93.2 42.9L94.5 42 97.4 41.8 99.2 39.6 100.9 38.5 106.7 37M100.6 41.1L101.5 41M100.4 42L101.1 42.3M99.5 42.5L100.7 43.6M93.6 42.9L95 42.3 97 42.6 100 45.3M94.4 43.7L98.2 46.4M93.8 44.5L96.9 48.1M92.5 43.9L92.4 44.6 93 46.5 95.4 49.8M77 37.1L77.2 37.6 78.9 38.6 84.8 39.5 86.5 40.5 89.1 43.4 91.3 48 93.5 51.3M75.7 38.7L78.3 41.6 83 42.9 85.6 44.5 87.5 46.8 91.4 52.6M80.5 45L82.1 45.3 84.5 47.2 89.5 54.6M80.9 46.3L83.3 49.4 86.9 55.4M79.8 46.4L80.6 48.9 84.7 56.8M79 45.4L78.2 47 78.4 49 82.4 58.1M75.2 39.1L75.9 42.7 75.4 46.7 75.5 48.7 80.2 59.7M74.2 39.1L70.6 48.2 70.9 49.2 75.3 54.6 77.7 60.1M69.7 52.5L70.3 53.2 69.9 53.8 72.1 54.1 73.5 55.5 75.4 61.2M71.6 55.4L72.3 57 73 61M70.8 55.8L70.8 61.4M69.8 55.8L68.7 60.7M69.7 52.5L70.4 53.2 68.2 56 66.4 60.6M68.6 52.9L66.3 55.8 64.3 59.3M67.8 52.2L64.7 54.5 61.8 58.6M68.3 50.9L66.5 50.9 64.7 51.7 62.4 53.6 59.8 56.6M74.2 38.7L73.2 40 71.8 43.7 70.2 46.3 68.6 47.4 64.8 48.7 62.2 50.2 57.2 55.1M70.6 39L70.2 40.8 68.2 43 59.7 48.3 54.6 53M69.3 39.2L58.8 44.6 55.7 47 52.1 50.5M69.1 38.3L63.5 38.3 58.8 39.9 53.9 43.4 49 48.4M69.7 37.3L67.3 35.5 64.5 34.4 61.6 34 58.6 34.4 55.9 35.7 53.6 37.6 46.1 45.6M45.5 22.7L48.1 23.3 50.6 25 51.5 26.8 51.6 28.8 50.7 31.6 49.3 34.3 42.9 43.2M45.1 23.5L45.9 27 45.3 31 43.4 35.5 40.1 40.5M44.1 23.3L42.4 26.6 40.3 33.3 37.1 38.3M36.9 27.7L37.5 27.5 38.1 28.1 38.2 30 37.1 32.8 34.7 36M36.6 29L34.9 31.4 32.1 34.1M35.6 28.4L30.6 31.4M36 27.4L33.4 27.3 28.6 28.9M44.2 22.5L42.8 22.9 38.9 26.1 34.1 24.8 28.1 25.4M42 20.8L40.6 22 37.7 22.5 27.8 21.4M41.7 20.9L40.1 21.8 38.1 22.1 27.2 20.5M41 19.9L34.4 18.9 28.8 16.7M41.3 18.9L39.7 17.9 34.1 15.8 30.7 13.8M42.2 19.2L41.9 15.5 40.9 15.5 41.7 15.1 39.9 15.4 37.9 14.9 32.9 11.7M39.7 13.8L37.3 12.3 34.4 9.5M40.2 12.9L36.2 7.5M41.2 12.9L40.6 10.2 38.8 6.7M42.3 19.1L42.2 17.2 41.5 15.3 42.8 13.8 43.2 11.8 42.5 8.9 40.9 5.3M42.7 20.2L42.9 21.1 44.9 18.8 46.2 16.2 46.5 14.2 46.1 11.3 43.6 4.7M52.5 9L52.6 9.8 51.9 10.6 51 10.7 49.2 9.8 47.5 7.4 46 3.7M51.2 8.5L49.5 6.5 48.3 2.7M51.7 7.6L50.6 2M52.8 7.6L53 1.6M55.3 9.9L54.6 9.5 54 10.3 54 9.3 53.7 10.3 55.3 2.4M55.8 8.3L57.7 2.6M56.8 8.9L58.4 6.7 60.2 3.1M56.9 10L59.4 8.9 62.4 4.9M55.4 9.8L55 10.6 55.4 11.5 56.1 12.2 57.1 12.4 59 12.2 62.3 10 65.3 6M45.5 22.3L47.4 21.9 53.4 21.8 56.2 20.8 63 14.9 68.2 7.6M73.8 38L73 37.4 70.6 33.1 67.1 28.2 65.7 24.4 65.7 21.4 66.5 18.6 71.1 9.7M75.3 38L75.5 37.4 73.8 30.7 71.3 26.4 70.4 22.5 71.3 17.6 74.3 11.3M75.3 26.4L74.7 26.2 73.8 24.5 73.8 21.5 75 17.6 77.2 13.2M75.7 25.4L76.7 21 80 14.8M76.7 25.5L82.8 16.4M76.4 27L78.1 26.5 79.6 25.2 85.3 18.2M76.8 36.8L76.3 36.4 75.9 34.5 76.1 32.5 76.9 30.7 82.1 26.1 87.6 20.3M77.5 35.5L79.5 32.3 89.5 22.5M78.4 36.1L82.5 33.3 91.9 24.4M78.2 37.2L81.1 37.2 83.9 36.1 88.7 31 93.2 27.1M88.7 37.6L88.1 37.2 88 36.3 88.9 34.5 90.9 32.4 94.9 29.3M89.8 36.3L96.2 31.6M90.3 37.5L92.9 36.4 98.1 33.5M89.6 38.6L90.5 39.1 92.5 39 98.7 35.9M93 43.3L92.4 43.4 92.4 42.5 93 41.8 96.7 40.1 100 37.9M99.4 40.6L100.8 39.6" fill="none" stroke="#26346c" stroke-width="0.65" opacity="0.5"/><ellipse cx="52" cy="8.4" rx="1.1" ry="1" fill="#5a1810" transform="rotate(59 52 8.4)" /><ellipse cx="56.2" cy="9.4" rx="1.1" ry="1.2" fill="#5a1810" transform="rotate(24 56.2 9.4)" /><ellipse cx="40.6" cy="13.6" rx="0.9" ry="1" fill="#5a1810" transform="rotate(80 40.6 13.6)" /><ellipse cx="41.6" cy="19.8" rx="1.2" ry="0.8" fill="#5a1810" transform="rotate(57 41.6 19.8)" /><ellipse cx="44.7" cy="22.9" rx="1" ry="0.8" fill="#5a1810" transform="rotate(88 44.7 22.9)" /><ellipse cx="36.4" cy="28.1" rx="1.2" ry="1.1" fill="#5a1810" transform="rotate(50 36.4 28.1)" /><ellipse cx="18.8" cy="19.8" rx="1.4" ry="1.1" fill="#5a1810" transform="rotate(78 18.8 19.8)" /><ellipse cx="11.5" cy="21.9" rx="1.2" ry="1.1" fill="#5a1810" transform="rotate(67 11.5 21.9)" /><ellipse cx="75.9" cy="26" rx="0.8" ry="0.7" fill="#5a1810" transform="rotate(30 75.9 26)" /><ellipse cx="74.9" cy="38.5" rx="1.2" ry="1.2" fill="#5a1810" transform="rotate(41 74.9 38.5)" /><ellipse cx="77.6" cy="36.4" rx="1.1" ry="1.2" fill="#5a1810" transform="rotate(66 77.6 36.4)" /><ellipse cx="69.7" cy="38.5" rx="0.9" ry="0.9" fill="#5a1810" /><ellipse cx="80.1" cy="45.8" rx="1.2" ry="1" fill="#5a1810" transform="rotate(35 80.1 45.8)" /><ellipse cx="89.4" cy="37.5" rx="1" ry="1" fill="#5a1810" transform="rotate(10 89.4 37.5)" /><ellipse cx="93.6" cy="43.7" rx="1.2" ry="0.9" fill="#5a1810" transform="rotate(29 93.6 43.7)" /><ellipse cx="99.8" cy="41.6" rx="1.1" ry="0.7" fill="#5a1810" transform="rotate(72 99.8 41.6)" /><ellipse cx="68.6" cy="52" rx="1.3" ry="0.9" fill="#5a1810" transform="rotate(37 68.6 52)" /><ellipse cx="70.7" cy="55.1" rx="1" ry="1.3" fill="#5a1810" transform="rotate(87 70.7 55.1)" /></svg></div>
<div class="a tile" style="left:454.30px;top:315.80px;width:112.90px;height:85.20px"><svg width="100%" height="100%" preserveAspectRatio="none" viewBox="0 0 113 85"><rect width="113" height="85" fill="#4464be"/><filter id="g44" x="-50%" y="-50%" width="200%" height="200%"><feGaussianBlur stdDeviation="3"/></filter><path d="M118.6 47.3L104.2 43.1C101.7 42.3 99.7 46 102.2 47L116.1 52.5ZM109.7 64.9L97.1 56.7C94.8 55.2 92.8 59.1 95 60.8L106.8 70ZM96.9 80.4L86.4 68.4C84.6 66.2 81.5 69.7 83.2 71.9L92.2 83.9ZM80 91.1L73.3 77.7C72.1 75.2 68.3 77.5 69.4 80.1L75 94ZM61.6 97.7L58.8 83C58.4 80.4 54.5 81.7 54.7 84.3L56 98.2ZM42.9 96.9L44.7 84C45 81.8 41.5 81.2 40.9 83.4L37.8 96ZM26.2 91.2L32.3 80.8C33.4 78.9 30.7 76.9 29.3 78.6L22.1 88.2ZM13.1 79.5L23.4 71.6C25.3 70.2 22.8 67.4 20.8 68.6L9.8 75.5ZM4.3 63.7L17.5 59.2C19.9 58.5 18.9 54.6 16.5 55.2L2.9 58.4ZM0.9 45.2L14.9 44.8C17.5 44.8 17.5 40.6 14.9 40.5L0.9 39.6ZM2.4 25.9L16.8 30C19.3 30.7 21.1 26.9 18.6 26L4.6 20.7ZM10.5 8L23 16.3C25.2 17.7 27.7 14.4 25.7 12.8L13.9 3.4ZM23.9 -6.6L33.5 5C35.2 7.1 38.6 4.3 37.1 2L28.4 -10.3ZM40.7 -17.7L47.4 -3.1C48.5 -0.6 52.6 -2.5 51.6 -5.1L46.4 -19.1ZM59.9 -23L62.5 -8.2C63 -5.6 67.1 -6.3 66.9 -9L65.5 -23.9ZM78.9 -22.7L77.4 -9.8C77.2 -7.4 81 -7.1 81.5 -9.5L84.2 -22.2ZM96.1 -17.8L90.1 -6.2C89.2 -4.4 92.3 -3.5 93.6 -5.2L100.4 -15.1ZM109.2 -6.4L99.6 0.8C97.8 2.2 99.1 5.5 101 4.4L112.2 -2.2ZM117.2 9.6L104.8 13.4C102.4 14.1 102.6 18.2 105.1 17.7L118.8 14.7ZM121.2 28L106.2 28.1C103.6 28.1 103.8 32.3 106.4 32.5L120.4 33.6ZM114.6 56.4L101 50C98.6 48.9 96.7 52.7 99 54L112 61.5ZM103.7 73L92.5 63.1C90.4 61.3 87.5 64.6 89.4 66.6L99.9 77.4ZM89.1 86.8L80.2 73.5C78.7 71.2 74.8 73.5 76.2 75.9L84 89.8ZM71 95.4L66.3 81.2C65.4 78.7 61.4 80 62 82.6L65.4 96.2ZM52 97.9L51.6 83.9C51.5 81.4 47.7 81.8 47.6 84.2L46.6 98.1ZM34.2 95L38.3 82.6C39.1 80.5 35.6 80.1 34.6 82.1L29.5 93ZM18.7 86.5L27.4 76.8C28.9 75.1 26.6 72.4 25 73.9L15.3 82.6ZM7.4 72.4L19.8 65.9C22 64.8 20.2 61.4 17.9 62.3L5.9 67.2ZM1.8 54.6L15.6 52.2C18.1 51.8 18.1 47.7 15.6 47.9L0.6 49.2ZM0.8 35.5L15.7 37.4C18.3 37.7 18.2 33.5 15.6 32.9L1.9 30ZM5.9 16.8L19.6 23C21.9 24.1 23.6 20.3 21.4 19L8.3 11.6ZM16.8 0.4L27.9 10.4C29.9 12.2 33.2 9.5 31.4 7.5L21.1 -3.4ZM31.8 -12.8L40.3 0.8C41.8 3.1 45.7 1 44.4 -1.4L37 -15.6ZM50.2 -20.9L54.7 -6.5C55.5 -3.9 59.9 -4.8 59.3 -7.5L55.9 -22.1ZM69.6 -23.9L70.1 -8.9C70.2 -6.3 74.2 -7.1 74.4 -9.6L75.1 -23.6ZM88 -21.4L84.4 -8.9C83.7 -6.7 87 -5.3 87.8 -7.4L92.8 -19.4ZM103.3 -12.8L95.5 -3.7C94.2 -2.1 96.4 0.2 98 -1.2L106.9 -9.2ZM113.8 1.2L102.1 6.9C100 8 101.1 11.6 103.3 10.7L116.4 5.7ZM119.7 18.5L105.9 20.7C103.4 21.1 103.6 25.1 106.1 25L120.1 24ZM120.7 37.7L105.8 35.6C103.2 35.3 102.1 39.3 104.7 39.9L119.3 43.2Z" fill="#4767c1" /><path d="M137.4 54.8L118.2 49C111.2 46.8 107.2 57.1 113.7 60.5L137.7 72.9ZM137.8 85.7L110.3 67.4C104 63.2 96.6 71.8 102 77L135.8 109.7ZM119.1 109.7L96.1 82.1C91.3 76.3 82 82.8 85.7 89.3L97.1 109.3ZM86.3 109.7L79.1 93.2C76.1 86.5 65.7 90.2 67.4 97.4L70.1 109.1ZM61.3 109.1L60 98.2C59.1 91.2 48.7 92.1 48.2 99.1L47.4 109.1ZM38.7 109.4L41.2 97.7C42.6 91.2 33.2 88.5 30.4 94.5L23.3 110ZM12.7 109.8L24.4 91.2C28 85.6 20.2 79.8 15.5 84.5L-9.1 109.4ZM-24.7 107.2L10.7 79.4C16.1 75.2 11.5 66.1 5.4 69.2L-24.3 83.7ZM-24.3 71.8L2.2 62.7C8.9 60.4 6.7 50 -0.4 51L-24.2 54.2ZM-24.9 44L-0.9 43.6C6.4 43.4 8 32.7 0.8 31.5L-24.8 27.1ZM-24.1 16.3L2.7 24.3C9.7 26.4 13.2 16 6.7 12.6L-24.5 -3.4ZM-24.3 -17.2L10.6 6.1C16.8 10.2 24.4 2.1 19.1 -3.1L-3.1 -24.8ZM11.5 -24.6L24.7 -8.3C29.4 -2.5 38.9 -8.5 35.3 -15L30 -24.7ZM39.7 -24.5L42 -19C44.9 -12.1 55.6 -15.9 53.9 -23.2L53.7 -24.1ZM80.8 -24.6L80.7 -23.6C79.5 -17 88.9 -14.1 91.5 -20.3L93.5 -24.9ZM102.1 -24.7L97.9 -17.9C94.5 -12.3 102 -6.4 106.6 -11L119.9 -24.6ZM135.3 -24.8L110.8 -5.8C105.5 -1.6 110.8 6.7 116.9 3.8L137.6 -6.1ZM137.4 4.6L119.4 10.5C112.7 12.8 114.3 23.1 121.3 22.3L137.2 20.3ZM137.7 29.6L121.7 29.6C114.5 29.7 113.4 40.4 120.5 41.8L137.2 44.9Z" fill="#4a6ac4" /><g filter="url(#g44)" opacity="0.3"><ellipse cx="39.5" cy="29.8" rx="7" ry="5.5" fill="#2a3e80" /><ellipse cx="43.7" cy="32.3" rx="7" ry="5.5" fill="#2a3e80" /><ellipse cx="48.9" cy="30.2" rx="7" ry="5.5" fill="#2a3e80" /><ellipse cx="52" cy="33.3" rx="7" ry="5.5" fill="#2a3e80" /><ellipse cx="42.7" cy="43.7" rx="7" ry="5.5" fill="#2a3e80" /><ellipse cx="45.8" cy="48.9" rx="7" ry="5.5" fill="#2a3e80" /><ellipse cx="51" cy="51" rx="7" ry="5.5" fill="#2a3e80" /><ellipse cx="55.1" cy="56.2" rx="7" ry="5.5" fill="#2a3e80" /><ellipse cx="36.4" cy="59.3" rx="7" ry="5.5" fill="#2a3e80" /><ellipse cx="40.6" cy="66.6" rx="7" ry="5.5" fill="#2a3e80" /><ellipse cx="38.5" cy="71.8" rx="7" ry="5.5" fill="#2a3e80" /><ellipse cx="51" cy="61.4" rx="7" ry="5.5" fill="#2a3e80" /><ellipse cx="72.8" cy="13.6" rx="7" ry="5.5" fill="#2a3e80" /><ellipse cx="78" cy="14" rx="7" ry="5.5" fill="#2a3e80" /><ellipse cx="73.8" cy="19.8" rx="7" ry="5.5" fill="#2a3e80" /><ellipse cx="79" cy="23.9" rx="7" ry="5.5" fill="#2a3e80" /><ellipse cx="81.1" cy="29.1" rx="7" ry="5.5" fill="#2a3e80" /><ellipse cx="74.9" cy="36.4" rx="7" ry="5.5" fill="#2a3e80" /><ellipse cx="71.8" cy="41.6" rx="7" ry="5.5" fill="#2a3e80" /><ellipse cx="82.2" cy="39.5" rx="7" ry="5.5" fill="#2a3e80" /><ellipse cx="87.4" cy="6.3" rx="7" ry="5.5" fill="#2a3e80" /><ellipse cx="89.4" cy="2.1" rx="7" ry="5.5" fill="#2a3e80" /></g><path d="M75.5 36L77.2 35.8 87.1 36.8 115.1 44.3 137.5 49.8M75.8 36.6L79.3 38.2 80.8 41.9 82.7 44.2 91.4 51 108.3 61.7 137.5 79M71 41.9L70.7 42.5 70.7 44.5 71.7 47.3 74.3 51.5 78 56.3 89.3 69 126.7 109.3M51.5 51.5L53.1 53.6 57 53.9 59.7 55.2 62.7 57.9 66.3 62.7 76.4 79.9 91.4 109.3M51.2 60.3L52.5 60.8 54.1 63.3 58.5 75.6 62.1 90.1 65.8 109.8M50.4 51.9L48.9 55.5 45.4 60.5 44.5 63.3 46.1 74.1 46.2 81.1 45.3 93.1 43 109.9M38 72.6L18.3 109.7M50.2 50.4L49.4 50.6 48.7 51.3 46.4 54.6 40 62.2 29 69.2 20.3 75.9 5.9 88.3 -17.9 109.7M46.8 48.7L47.5 49.2 47.5 50.2 46 52.7 43.1 55.5 39.8 57.7 38.8 58.1 36.1 56.8 33.1 56.7 28.2 57.6 22.4 59.2 3.6 66 -25 77.9M42.4 44.6L40.7 45.2 36.7 45.6 6.7 46.8 -24.2 49.1M44.6 32.7L45.2 32.3 45.3 33.2 44.8 34.1 42.2 35.5 38.2 35.7 33.3 35.2 24.4 33.4 -24.2 21.8M39.2 29.2L32.2 24.1 18.8 15.5 -24.3 -10M47.8 30L43 20.1 37.2 12 26.1 -0.9 4.6 -24.6M53.1 33.2L55.6 31.6 57 29 57.3 25 56.4 21.1 51.9 10 35.2 -24.1M73.8 18.7L72.9 16.9 70.3 15.4 68.2 13.3 65.1 7 61.5 -5.4 57.6 -24M74.4 19L75.7 15.2 76.1 7.2 75.9 -9.7 77.2 -24.7M87.3 5.5L87.6 3.8 87.1 -0.1 88 -4 91.4 -12.3 97.7 -24.9M87.7 5.7L89.1 4.7 93.8 3.1 99.6 -0.8 109.6 -9.2 126.7 -24.4M74.2 20.6L74.5 21.4 75.4 21.8 79.7 19.1 84.3 17.2 100.7 13 108.4 10.7 120.6 6.2 137.3 -0.5M81.1 28.1L82.7 27.5 87.7 27 115.7 26.2 137.7 24.9M82.9 39.7L98.9 47.3 115.4 54.5M72.1 40.9L72.8 40.8 74.4 41.9 79.9 49 86.2 55.4 105.3 71.5M46.4 48.7L47.6 47.7 49.3 43 50.1 42.3 52.1 42.2 56 43 60.4 45.4 63.9 48.9 69.4 56 90.5 85.2M55.3 56.8L60.1 63.9 63.7 71 68 81.2 72.8 94.3M50.4 62L50.3 65.8 53.1 83.6 54 97.6M40.5 67.5L40.1 69.3 41.1 73.2 40.8 77.2 39.4 84 36 95.5M40 67.3L38.9 68.7 35.4 70.6 32.4 73.3 20.7 87M35.7 60L23 65.9 9 73.7M44.9 48.7L38.3 50.7 21.5 52.8 1.9 56.6M43.2 43L42.2 41.7 39.3 40.9 0.4 37.5M43 31.8L40.8 30.5 39.7 31.2 37.8 31.4 33 30.1 5.2 18.7M43.5 31.1L40.8 25.8 36.3 20.4 28.3 12.9 15.3 1.9M49.6 30.5L50.1 30.1 50.7 28.3 50.7 25.3 49.7 21.5 48.2 17.7 42.4 7.3 30.4 -11.2M78.1 24.1L76.3 23.4 72.5 24.5 69.6 23.8 66.4 21.4 63.9 18.3 60.9 13.1 57.6 5.8 48.1 -20.5M72.6 12.8L70.8 6.3 69.3 -2.5 68.2 -12.5 67.6 -23.5M78.6 13.5L80.7 10.5 81.7 7.7 81.9 -1.3 82.5 -6.3 86.1 -21.8M89.9 1.6L101.9 -14M79 14.3L85.3 9.4 90.2 9.3 96.1 7.9 103.4 4.7 113 -0.6M79.8 24L88.2 21.8 107 18.9 119.8 16.5M81.2 30.3L82.8 31.1 85.8 31.7 120.6 35.6M82.3 38.6L83.9 38.4 86.8 39.1 102.8 44.9M74.5 37.5L82.6 47.7 87.8 52.3 94.9 57.9M71.6 40.7L72.1 39.9 71.3 39.2 70.4 39 68.4 39.5 67.7 40.2 66.8 43 67.7 46.9 69.6 50.4 72.5 54.5 84.3 69.4M55.9 55.9L58.9 58 62.1 61.9 66.2 68.7 70.7 77.6M51.7 62.3L54.8 73.9 56.6 82.7M41.5 66.4L42.4 67.9 43.4 73.8 42.9 82.8M37.5 71.4L35.5 73.3 31.4 79M37.3 59.6L37 61 35.5 62.4 22.5 69.9M45.7 49.7L43.6 51.6 40.1 53.4 29.2 54.6 17.4 57.1M42 43.5L16.3 42.7M43.1 32.8L38.4 33.4 34.4 33 18.2 28.1M40.4 29L39.5 27.3 36.8 24.4 25.1 15.1M48.9 29.2L47.8 24.3 45.4 18.8 41.9 12.8 36.1 4.6M74.2 36.5L71.6 37.1 65.6 36.5 65 35.8 63.6 28.9 62.4 25.1 49.9 -3.3M72.1 13.9L70.2 12 68.3 7.4 66.5 0.7 64.8 -8.2M77.5 13.1L78.8 6.3 79.4 -8.7M88.9 1.6L89.4 -0.9 91.6 -5.4M87.9 6.8L92.5 6.2 98.9 3.4M78.9 23.2L80.8 21.5 85.5 19.7 104.1 15.7M81.8 29.2L105.4 30.2M82 40.3L83.8 42.2 87.1 44.5 99.2 51.5M72.3 42.4L74.7 46.7 78.2 51.5 89.9 63.9M51.4 50.2L53.2 49.5 56.2 49.7 59 50.7 62.3 53 68.2 59.8 77.6 73.9M54.1 56.1L53.8 56.7 54 58.7 58.8 67.5 63.7 80.6M51.1 60.7L50.8 60.1 49.3 60.6 48.2 62.3 47.7 64.2 49.6 83.1M39.2 72.5L38.9 75.4 37 81.1M39.8 65.8L38.1 66.4 33.8 69 26.9 74.7M36 58.8L34.4 58.7 30.5 59.7 20.2 63.5M46.4 48.3L46 46.6 45.2 46.2 37.4 48.1 16.5 50M51.6 33.8L50 39.1 49.2 39.8 48.2 39.8 42.3 38.6 30.4 37.5 16.6 35.3M38.9 30L34.6 28.3 21.3 21.4M51.2 33L49.8 31.9 47.1 32.9 46.2 32.3 43.4 26 40.8 21.7 36.4 16.2 30.3 9.6M51.7 32.2L53.5 27.6 53.5 24.6 53 21.7 49.7 13.3 42.6 0.1M73 20.1L71.1 19.6 68.6 18 66.5 15.9 64.8 13.4 61.4 6.2 57.3 -6.1M73.7 13.3L73.8 10.6 72.3 -8.4M86.8 6.9L86.1 7 85.5 6.4 84.7 2.5 84.9 -2.5 85.9 -7.4M90 2.7L92.3 1.5 96.1 -1.8M74.5 19.1L76.1 16.7 77 16.4 80 16 86.4 13.3 95.2 11.2 101.9 9.1M78.6 24.8L78.8 25.5 80.8 25.8 89.7 24.3 105.6 22.9M74.4 35.8L74.2 33 75.2 30.2 76.2 30.3 79.6 32.4 82.3 33.5 104 37.5M75.8 36.5L80.3 38.4 82.1 37.6 85.1 37.5 94.7 40.3M82.9 39.1L85.6 39.8 93 42.9M82.7 40.2L92 45.8M81.2 40.2L82 41.8 83.3 43.2 90.6 48.5M75.3 37L78 39.5 82 45.2 88.8 51.1M74 36.7L72.6 38 73.1 38.9 76 41.7 81.6 48.7 86.7 53.5M72.8 41.9L78.8 49.9 84.2 55.8M71.6 42.2L72.1 44.8 74 48.3 77.5 53.2 82.1 58.4M70.8 41L70 41.4 69.1 43.2 69.2 45.2 69.8 47.1 72.9 52.3 79 60.1M52 33.9L52.5 35.4 53.9 36.8 59.5 38.9 61.9 40.7 67.4 50.2 76.3 62.3M50.5 50.1L51 48.3 53.6 46.9 56.6 47.1 60.2 48.8 63.3 51.4 66 54.3 73.8 64.7M52.1 51L57.9 52.4 61.4 54.5 65.5 58.9 70.6 66.2M55.5 55.1L56.3 55.1 58.1 55.8 61.1 58.4 64.2 62.3 67.9 68.3M56.1 56.7L60.5 62.1 65 69.9M54.7 57.1L59.5 65.7 62 71.1M51.6 51.6L53.4 53.8 52.3 56.6 52.4 58.6 55.6 63.7 59.3 72.9M51.9 61.4L53.5 64.8 56.2 73.4M51 62L53.3 74.3M49.9 61.4L49.1 63.1 49 65.1 50.4 75M51.2 51.8L51.4 53.7 50.5 56.6 47.5 60.5 46.3 63.3 46.3 66.3 47.5 75.2M49.9 51.2L44.2 59.3 41.6 63.6 43.8 68.1 44.8 75M41.1 67L42.1 72.5 42.2 75.5M39.4 71.4L40 72.8 40 74.8M38.6 72.4L37.9 74.9M37.5 72.3L36.3 73.9M40.3 67.5L39.6 69.3 38.9 69.9 39.2 70.6 37 70.8 34.6 72.6M39.6 66.7L33 71.1M50.3 51.1L43.5 60.5 41.6 64 42.1 64.8 40.2 64.5 38.2 65 32.2 68.6M46.9 48.6L47.7 49.2 47.6 50.2 45.4 53.5 40 57.9 37.6 62.2 30.8 66.5M36.4 60.2L34.2 61.9 28.8 64.6M35.5 59.4L28 62M36.7 58.4L36.2 58 34.2 57.7 27.4 59.2M46.5 49.7L45.7 51.3 44.3 52.8 40.1 55.3 33.1 55.4 26.2 56.6M45.2 49.3L42 51 39.2 52 26.3 53.6M45.7 48.2L44.2 47.8 37.4 49.4 25.5 50.6M43.6 44.5L42.4 45.7 39.5 46.5 25.5 47.6M41.8 44.1L25 44.5M42.3 42.9L38.8 42 24.8 41.4M43.4 43.9L44.2 44.1 44.7 43.3 44.6 42.3 43.3 40.8 41.5 40 25.6 38.4M51.2 33.3L46.1 36.1 43.3 36.9 35.3 36.7 26.4 35.4M43.8 33.2L41.3 34.3 37.3 34.5 32.3 33.8 26.5 32.4M42.5 32.1L38.6 32.3 35.6 32.1 27 29.4M38.9 30.6L35.2 29.8 28.8 27M38.5 29.3L29.9 24.3M39.6 28.8L36.9 26 31.4 21.8M43 31.6L41.6 30.2 41.1 28.3 39.5 25.7 33.1 19.4M44.5 31.9L44.2 30.3 41.6 25 35.3 17.2M48.5 31.1L47.8 31.1 46.4 29.8 42.4 21.7 37.7 15.3M48.3 29.5L45.1 21.2 40.4 13.6M49.5 29.6L49.6 26.8 48.4 21.9 46.3 17.4 42.9 11.3M51.1 32.9L50.2 32.6 52 27.9 51.7 23 49.7 17.3 46.1 10.2M52.6 32.5L54.8 29.2 55.2 27.3 55.2 24.3 53.3 17.5 49.2 8.5M52.8 34L54.7 34.3 57.5 33.4 59.3 31 59.9 28.1 59.4 24.1 58.2 20.3 52.2 6.6M74.1 35.8L71.8 31.4 66.9 26.4 63.4 21.5 59.6 14.5 55.5 5.4M73.8 20.5L72.6 21.5 70.6 21.4 68.8 20.5 66.5 18.5 62.6 12.8 58.6 3.6M73.1 19.2L69.1 16.3 66.5 13.3 64.2 8.9 62.1 3.3M72.9 14.7L72.3 14.8 70.6 14.1 68.7 11.7 67 8.1 65.2 2.4M72 13.1L70.1 8.7 68.2 1M73.1 12.7L71.4 1M73 14.4L73.6 14.6 74.2 14.2 74.8 12.4 74.4 0.4M76.9 13.9L77.4 0.2M78.2 13L80.1 7.4 80.4 0.4M78.9 14L81 12.2 83.4 9 83.7 7 83.3 0M86.7 5.9L85.9 0.3M88.3 2.2L88.1 0.5M89.4 1.3L89.7 0.6M90.2 2L90.9 1.5M87.5 5.4L88.5 3.8 88.2 3.1 89.5 3.5 91.3 3.2M88.1 6.2L91.8 5.2M87 7.3L88.6 8 92.6 7.5M78.1 14.9L78.8 15.1 80.7 14.5 85.9 11.6 93.7 10.1M74.9 19.9L78.4 18 85.9 15.1 94.6 13M78 23.6L77.9 22.8 78.3 21.9 81.7 19.7 87.3 17.7 95.1 16M79.8 23.2L85.4 21.1 95.2 19.1M79.5 24.6L81.1 24.6 88 23.2 95.9 22.1M80.2 28.7L79.3 28.8 79.6 27.8 82.3 26.6 96.2 25.2M82.1 28.5L96.1 28.3M81.8 29.8L84.6 30.4 95.6 31.3M80.1 29.3L79.9 30 80.3 30.9 82.9 32.3 95.8 34.3M74.9 35.4L76.3 34.2 78.3 34.1 95 37.3" fill="none" stroke="#2a3a78" stroke-width="0.65" opacity="0.42"/><ellipse cx="39.5" cy="29.8" rx="0.9" ry="1.1" fill="#3a1420" transform="rotate(87 39.5 29.8)" /><ellipse cx="43.7" cy="32.3" rx="1.2" ry="1.2" fill="#3a1420" transform="rotate(83 43.7 32.3)" /><ellipse cx="48.9" cy="30.2" rx="0.9" ry="0.7" fill="#3a1420" transform="rotate(28 48.9 30.2)" /><ellipse cx="52" cy="33.3" rx="1.1" ry="0.8" fill="#3a1420" transform="rotate(9 52 33.3)" /><ellipse cx="42.7" cy="43.7" rx="1.1" ry="0.8" fill="#3a1420" transform="rotate(37 42.7 43.7)" /><ellipse cx="45.8" cy="48.9" rx="0.8" ry="0.7" fill="#3a1420" transform="rotate(87 45.8 48.9)" /><ellipse cx="51" cy="51" rx="1.1" ry="0.7" fill="#3a1420" transform="rotate(35 51 51)" /><ellipse cx="55.1" cy="56.2" rx="1.2" ry="0.7" fill="#3a1420" transform="rotate(33 55.1 56.2)" /><ellipse cx="36.4" cy="59.3" rx="1.2" ry="1.1" fill="#3a1420" transform="rotate(17 36.4 59.3)" /><ellipse cx="40.6" cy="66.6" rx="1.2" ry="0.8" fill="#3a1420" transform="rotate(29 40.6 66.6)" /><ellipse cx="38.5" cy="71.8" rx="1" ry="1.1" fill="#3a1420" transform="rotate(72 38.5 71.8)" /><ellipse cx="51" cy="61.4" rx="1.3" ry="1" fill="#3a1420" transform="rotate(55 51 61.4)" /><ellipse cx="72.8" cy="13.6" rx="1.1" ry="1" fill="#3a1420" transform="rotate(44 72.8 13.6)" /><ellipse cx="78" cy="14" rx="1.2" ry="1.1" fill="#3a1420" transform="rotate(33 78 14)" /><ellipse cx="73.8" cy="19.8" rx="1.2" ry="1" fill="#3a1420" transform="rotate(17 73.8 19.8)" /><ellipse cx="79" cy="23.9" rx="1" ry="1.1" fill="#3a1420" transform="rotate(68 79 23.9)" /><ellipse cx="81.1" cy="29.1" rx="0.9" ry="0.8" fill="#3a1420" transform="rotate(66 81.1 29.1)" /><ellipse cx="74.9" cy="36.4" rx="1" ry="0.9" fill="#3a1420" transform="rotate(33 74.9 36.4)" /><ellipse cx="71.8" cy="41.6" rx="1.1" ry="0.9" fill="#3a1420" transform="rotate(16 71.8 41.6)" /><ellipse cx="82.2" cy="39.5" rx="1.1" ry="1" fill="#3a1420" transform="rotate(72 82.2 39.5)" /><ellipse cx="87.4" cy="6.3" rx="0.9" ry="0.8" fill="#3a1420" transform="rotate(46 87.4 6.3)" /><ellipse cx="89.4" cy="2.1" rx="0.8" ry="0.9" fill="#3a1420" transform="rotate(80 89.4 2.1)" /></svg></div>
<div class="a tile" style="left:226.60px;top:144.70px;width:226.70px;height:170.10px"><svg width="100%" height="100%" preserveAspectRatio="none" viewBox="0 0 227 171"><rect width="227" height="171" fill="#30468a"/><filter id="gc" x="-50%" y="-50%" width="200%" height="200%"><feGaussianBlur stdDeviation="0.9"/></filter><filter id="gcb" x="-50%" y="-50%" width="200%" height="200%"><feGaussianBlur stdDeviation="5"/></filter><path d="M212.1 82.2L201.1 80.2C197.4 79.6 193.5 83 196.7 84.8L202.2 87.9 210 91ZM200.3 108.9L192.7 102.7 184.5 95.1C181.1 92 175.5 96.4 178.4 100.1L184.5 107.8 193.1 117ZM174.6 131.7L162 109.8C159.1 104.7 150.8 109.1 153.3 114.4L163.8 137.3ZM140.3 146L134.7 121.5C133.5 116 124.9 117.7 125.5 123.2L127.9 146.9ZM102.5 146.9L106.8 122C107.8 116.2 99 113.2 97.3 118.9L90 144.5ZM65.4 135.1L77.7 109.9C80.5 104.1 70.8 100.3 67.5 105.9L54 128.8ZM33.9 113.1L43.3 102.7 50.4 94.1C53.9 89.8 47.3 84.3 43.3 88.1L25.8 104.2ZM12.6 85.4L22.5 80.1 31.8 74C35.9 71.3 30.7 65.5 26.4 67.8L19.1 71.9 8.6 75.8ZM6.3 56.6L14.7 57.8 19.6 59C23.4 59.9 28.4 57.2 25 55.1L19 51.5 8.6 47.3ZM18.7 29L34.8 42.5C38.6 45.6 44.4 41 41.2 37.3L34.8 29.8 26 20.8ZM45.2 7L57.1 27.5C60.1 32.6 68.5 28.7 66 23.4L55.4 0.6ZM79 -7.6L84.7 17C85.9 22.4 94.4 20.4 93.8 14.9L91.1 -10.2ZM116.3 -9.6L112.2 15.3C111.3 20.8 119.7 23.2 121.3 17.8L128.5 -6.3ZM152.8 2.8L140.4 26.3C137.3 32 145.7 38.2 149.2 32.7L164.2 9ZM184.4 25.3L174.9 35.6 167.7 44.2C164 48.6 170.3 55.3 174.5 51.2L183.5 42.5 193 34.1ZM205.7 53.8L195.9 59.2 186.6 65.5C182.3 68.4 187.9 74.8 192.4 72.1L199.5 67.8 209.8 63.5ZM208.1 95.6L199.4 91.1 192.4 86.4C188.6 83.8 183.7 89.6 187.4 92.4L203 104.2ZM189 121.2L180.1 110.4 174.5 102.3C171.3 97.7 163.3 102.3 166.3 107L179.8 128.3ZM158.1 140.1L148.7 116.7C146.6 111.3 137.8 114.2 139.4 119.8L146.4 144ZM121.5 147.9L120.8 122.7C120.6 117.3 112.2 117.4 111.6 122.8L109 147.8ZM83.5 142.9L92.6 116.5C94.6 110.5 85.2 106.8 82.6 112.6L71.3 138.2ZM48.7 124.9L63.1 102.5C66.4 97.4 58.1 92.4 54.3 97.2L38.8 117.1ZM21.3 100L39.7 85C43.8 81.6 38.4 74.9 34 78L24.9 84.5 15.4 90.3ZM7.6 70.7L17.1 68.2 24.5 64.5C28.9 62.3 21.8 61.3 16.9 61.3L7.3 61.4ZM10.6 42.6L20.6 47.6 27.6 52.2C31.6 54.7 35.9 48.4 32.1 45.6L16.3 34ZM31 17.6L39.2 27.2 45 35C48.3 39.4 55.9 34.8 52.9 30.2L40 10.2ZM61 -2.4L70.5 21C72.7 26.4 81.3 23.2 79.7 17.6L72.6 -6.5ZM97.5 -9.9L98.5 13.9C98.7 19.3 107.1 20.2 107.6 14.8L109.9 -10.3ZM134.9 -5L125.9 20C123.8 25.7 132.5 30 135.1 24.5L146.6 0.5ZM169.6 13L154.5 34.9C150.9 40.2 159.4 46 163.4 41L179.2 21.4ZM196.6 39.2L178.2 54.3C174 57.8 179.7 64.5 184.2 61.4L193.3 54.8 202.8 48.9ZM210.8 68.6L202.8 71.1 194 75C187.9 77.8 198.2 78.6 204.9 78.1L212.6 77.6Z" fill="#344b93" /><path d="M250.7 89L213.3 83.9C200.8 82.2 194.2 97.3 205.2 103.5L223.5 113.9 251 127.8ZM250.9 146L220.5 126 200.2 111C188.3 102.3 172.6 116 181.7 127.6L204 156.3 237.8 195.6ZM214 195.7L190.5 161 173.4 133.6C164.9 120 144 130 148.9 145.3L165.2 195.9ZM148.5 194.8L138.3 146.8C134.9 130.9 111.8 133.1 111 149.4L108.6 195.6ZM93.1 194.9L100.2 147.8C102.7 131.2 79.6 124 73.1 139.6L50 195.2ZM31 195L62.6 135.7C70.5 120.9 50.1 107.5 39 120.1L13.1 149.5 -24.6 189ZM-24.2 162.5L7.6 135.1 31.1 113C42.3 102.5 28.7 85.2 15.2 92.6L-2 102 -24.7 112.9ZM-24.8 97.6L-5 90.7 10.6 84.4C22.6 79.5 18.8 62.8 5.8 63L-23.6 63.3ZM-23.9 50.6L5.2 54.8C18.1 56.7 25.4 41.1 14 34.7L-1.8 25.8 -24.2 14.3ZM-24.9 -3.3L0.8 13.7 18.9 26.9C30.9 35.6 46.4 21.7 37.3 9.9L25.3 -5.7 10.2 -24ZM27.7 -24.4L45.7 4C54.2 17.5 75.3 8.8 70.5 -6.4L65.1 -23.8ZM77.5 -24.8L80.6 -9.8C83.9 6.1 107 4.4 107.9 -11.8L108.6 -24.4ZM120.8 -24.4L118.6 -10.6C116 5.9 138.8 13.2 145.3 -2.1L154.7 -24ZM170.2 -25L155.6 2.1C147.6 17 167.8 31.2 179 18.5L196.5 -1.5 217.5 -24ZM243.8 -24.9L210.8 3.4 186.3 26.4C175 37 189.3 54.1 202.9 46.6L223.8 35.1 251.6 21.9ZM251 38.6L225.9 47.3 207.8 54.8C195.7 59.9 200.9 76.3 214.1 76L251.8 75.4Z" fill="#3c57a5" /><g filter="url(#gcb)" opacity="0.5"><path d="M18.1 61 L23 57.2 L26.2 58.9 L30.4 56.8 L34.7 55.1 L40 53 L43.2 50.8 L44.9 44.9 L47.4 49.1 L52.8 51.9 L54.3 56.2 L57 59.3 L63.4 61.5 L69.8 59.3 L73 54 L77.2 50.8 L79.8 45.5 L81.5 43.4 L84.7 46.6 L88.3 45.5 L90.4 48.3 L95.3 46.6 L98.5 42.3 L99.6 34.9 L103.8 31.7 L104.9 27 L107 32.7 L107 38.1 L110.2 43.4 L112.3 47.6 L116.6 48.3 L120.8 50.4 L118.7 54 L115.5 57.2 L113.4 62.5 L115.5 66.8 L115.1 68.9 L119.4 71 L124.7 70 L126.8 75.3 L131.1 78.5 L137.4 80.6 L142.8 79.6 L147 75.3 L149.1 70 L152.8 65.7 L156.6 66.8 L160.8 66.8 L164 62.5 L166.8 58.3 L168.3 63.6 L170.4 68.9 L174 70 L173.6 75.3 L177.9 78.5 L182.1 81 L187.4 78.5 L192.8 73.8 L194.9 77.4 L200.2 78.1 L204.5 78.9 L200.2 81 L197 83.8 L192.8 82.7 L187.4 84.9 L184.3 88.1 L180 90.2 L178.3 95.5 L175.7 90.2 L171.5 89.1 L169.4 84.9 L166.2 81 L160.8 80.2 L156.6 82.3 L153.4 85.9 L149.1 88.1 L144.9 91.3 L142.8 96.6 L139.6 92.3 L135.3 93.4 L131.1 91.3 L127.9 93.4 L124.7 96.6 L123.6 101.9 L121.5 107.2 L118.3 112.5 L116.2 107.2 L114 101.9 L110.8 97.6 L106.6 94.4 L103.8 89.1 L107 82.7 L109.1 76.4 L104.9 73.2 L100.6 71 L97.4 66.8 L94.3 62.5 L87.9 61.5 L83.6 60.4 L79.4 63.6 L76.2 67.9 L73 71 L70.8 74.2 L66.6 72.5 L61.3 73.2 L58.5 77.4 L56 81.7 L53.8 76.4 L50.6 71 L48.5 66.8 L45.3 63.6 L41.1 62.5 L36.8 64.7 L32.5 63.6 L29.4 65.7 L25.1 63.2 L20.8 63.2Z" fill="#18204a" stroke="#18204a" stroke-width="12" stroke-linejoin="round"/></g><path d="M204.9 79.5L251.6 82.2M180.4 89.1L181.7 89.9 195.5 101.8 207.9 110.8 225.7 122 251.2 136.7M142.3 80.5L143.7 82.2 146.9 84.9 150.5 86.9 153.8 91 158.3 98 171.6 121.1 183.8 139.9 201.7 164.9 225.6 196M128.7 94L137 120.4 156.6 194.8M108.8 75.3L108.7 74.2 109.9 74.1 112.1 75.6 113.6 78 115.1 81.9 115.8 87.4 115.2 99.8 115.5 103.2 111.5 113 108.5 126.6 105.3 151.6 100.9 194.8M104.4 73.8L94.6 84.9 90.8 90.7 86.7 98.1 40.5 195.5M78.8 64.4L77.4 65.9 73.1 66.9 63.8 71.7 63.1 72.5 59.2 84.4 56.6 89.3 50.2 98.5 41.4 109.4 29.2 122.9 14.5 137.9 -3.5 155.5 -25 175.6M47.5 66.1L41.8 69.3 26 80.8 15.2 87.2 -1.2 95.2 -24.4 104.9M17.9 60L-24.7 56.9M41.9 50.8L24.7 36.9 13.4 28.8 -3.2 18.3 -25 5.6M71.1 55.5L67.7 51.3 64.6 46.7 53.2 25.8 44.4 11.5 33.4 -4.8 19.4 -24M90 47.5L90 43.7 89.4 40.9 82.4 18.2 71.4 -23.8M106.5 29.2L108.4 23.2 110.1 13.6 114.6 -23.9M121.1 49.8L128.5 40.6 136.5 27.5 145.5 10.1 162 -23.9M153 64.7L157 56.1 161.2 48.8 166.9 40.9 174.9 31.2 185.2 19.7 197.8 6.6 230 -24.6M175.2 70L179.7 67.4 195.9 56.3 208 49.4 227 40.4 251.7 30.3M192.5 83.9L199 88.5 209.1 93.3M171.3 90.2L174.5 97.6 177.3 102.4 183.2 110.2 190.6 118.6M143 97.5L160.7 138.1M120.9 109.6L121.9 112.6 122.7 118.1 124.7 147.5M105.8 94.5L100.8 103.5 96.4 113.8 92.2 125.7 86.9 143.1M79.8 64.4L78.8 72.1 77.5 77.5 73 89.3 64.6 105.4 51.3 126.8M53 75.8L35.3 92.3 23.5 102.2M31.9 64L28.2 64.6 18.7 69.7 8 73.2M29.9 56.1L21 50.2 9.5 45M52.2 52.8L49.8 50.9 47.4 43.3 43.9 37.2 37 28.4 28.5 19.1M79.4 44.8L76.7 40.6 73.6 34.3 58.5 -0.3M99.8 34.2L97.9 26.8 96.8 19.9 94.3 -9.4M110.5 42.7L116.5 34 121 25.3 125.5 13.6 131.5 -5.1M124.5 69.1L132.1 61.9 138.3 54.3 166.9 11.1M161.5 65.9L163.1 64.4 165.6 63.1 181.5 47.9 194.3 37.1M193.9 73.2L201.2 69.4 210.4 66.1M192.8 81.5L193.6 81.5M179.2 95.2L180.7 96.7M145.8 91.5L150.9 99.2 157.4 111.6M124.3 102.4L127.5 111 129.7 120.5M110.6 98.8L105.5 110.1 102.4 119.4M96.8 65.9L96 66 94.2 67.8 89.6 74.8 73 107.2M54.8 81.4L47.1 90.7M36.2 65.1L30.2 69.9M44.5 46.9L38.8 40.7M76.3 50.9L70.3 42.3 61.9 26.2M97.6 42.2L94.9 36.6 93 31.3 89.4 16.4M107.3 37.3L112.7 28.2 116.4 17.7M114.4 61.9L116.4 60.3 123.8 56.3 129.2 51.8 135.3 44.2 143.7 31.3M160.8 66L162.4 63.6 162.9 61.4 165.5 55.4 170.5 48.6M145.8 78.4L149.6 79.7 153.7 80.4 158.6 79.8 161.5 78.2 168.4 76.8 171.2 76.8 174.6 77.7 175.7 77.6 183.3 73.8 188.8 69.6M165.9 80.1L168.9 79.6 174.4 80.8 185.3 86.1 188.4 88.3M156.9 83.4L159.6 86.2 162.1 89.6 170.3 104.2M135.8 94L138.5 102.7 143.7 117.2M117.4 112.7L116.3 121.6M104.4 86.7L101.5 89.1 97.4 94.7 92.7 103.3 88.1 113.5M70.3 75.1L65.3 87.8 59.3 98.8M49.8 71.7L45.4 74.6 37.7 80.7M56.2 59L51.3 58.4 37.9 55 30.9 49.7M65.4 60.9L63.2 58.9 60 54.3 52.6 39.2 49.2 33.1M84 45.7L82.8 40.1 75.5 20.4M104.3 31L103.2 26 103 16.2M115.4 48.1L116.7 45.4 124.4 33.7 130.3 22.6M133.5 78.9L137.4 74.4 139.8 71 149.1 53.7 158 39.5M147.1 74.6L148.7 73.6 162.4 70.7 166.3 69.3 180.3 58.5M161.2 81.4L163.9 84.2 166.1 87.8M154.2 86.1L159.1 92.1M148.3 89L153.4 96.8M135 80.2L136.9 84.7 142.1 91.3 147.7 100.2M139.1 93.5L141.8 102.6M132.1 92L135.4 103.9M125.8 97L129.5 107.1M122.8 107.2L123.7 109.3M116.2 108.3L115.9 109.3M113 101.6L110.3 107.1M107.9 81.9L108.6 83.2 109.3 87.3 108.9 94 108.3 96.2 104.5 103.8M104.5 90.1L98.4 100.5M106.9 79.7L102.6 82.8 98.6 86.7 95.3 91.1 91.7 97.1M99.9 71L96.5 74.5 92.3 80.1 84.6 93.4M90.1 61.7L86.3 68 77.1 90M73.8 71.8L73.6 75.5 73.1 78.2 70.2 86.1M67.3 73.2L63 84.2M54.8 77.1L53.7 78.6M51.4 73.9L49.6 75.1M63.6 62.5L59.3 65 51.3 67.7 47.1 69.9M44.4 63.7L43.6 63.9M45.9 62.5L43.2 61.5M54 51.5L52.9 48.3M69.1 58.6L64.7 53.8 59.7 45.4M73.3 53.2L66.1 42.1M86.9 61.1L86 60.7 84.5 57.4 81.3 52.8 79.3 49.2 75 43.7 71.5 37.6M80.8 42.5L77.5 35.1M87.2 45.2L83.8 33.6M94.3 45.8L89.7 31.3M98.8 37.9L97.1 34.3 95.4 28.9M94.9 63L95.6 63.2 96.5 62.6 97.8 60.2 102.5 41.2 102.9 34.2 100.9 27.6M107.5 32L109.3 28.9M109.1 39.7L114.3 31.6M111.9 46.7L120.1 34.3M113.6 61.3L114.8 58.5 113.8 56.3 114.7 52.2 116 50.2 118.4 48.4 125.8 38.2M119.6 53.8L122.6 52.2 125.9 49.6 132.1 42M116.1 67.5L119 66.1 128.8 58.2 133.6 53.1 137.9 47.6M126.4 74.4L131.3 70.7 135.2 66.7 139.3 61.1 145.4 51.6M145.2 76.2L145.9 73.9 147.2 71.7 147.9 67.7 149.6 62.4 152.5 56M156.5 65.9L159.3 60.1" fill="none" stroke="#141a3a" stroke-width="0.95" opacity="0.9"/><g filter="url(#gc)"><path d="M18.1 61 L23 57.2 L26.2 58.9 L30.4 56.8 L34.7 55.1 L40 53 L43.2 50.8 L44.9 44.9 L47.4 49.1 L52.8 51.9 L54.3 56.2 L57 59.3 L63.4 61.5 L69.8 59.3 L73 54 L77.2 50.8 L79.8 45.5 L81.5 43.4 L84.7 46.6 L88.3 45.5 L90.4 48.3 L95.3 46.6 L98.5 42.3 L99.6 34.9 L103.8 31.7 L104.9 27 L107 32.7 L107 38.1 L110.2 43.4 L112.3 47.6 L116.6 48.3 L120.8 50.4 L118.7 54 L115.5 57.2 L113.4 62.5 L115.5 66.8 L115.1 68.9 L119.4 71 L124.7 70 L126.8 75.3 L131.1 78.5 L137.4 80.6 L142.8 79.6 L147 75.3 L149.1 70 L152.8 65.7 L156.6 66.8 L160.8 66.8 L164 62.5 L166.8 58.3 L168.3 63.6 L170.4 68.9 L174 70 L173.6 75.3 L177.9 78.5 L182.1 81 L187.4 78.5 L192.8 73.8 L194.9 77.4 L200.2 78.1 L204.5 78.9 L200.2 81 L197 83.8 L192.8 82.7 L187.4 84.9 L184.3 88.1 L180 90.2 L178.3 95.5 L175.7 90.2 L171.5 89.1 L169.4 84.9 L166.2 81 L160.8 80.2 L156.6 82.3 L153.4 85.9 L149.1 88.1 L144.9 91.3 L142.8 96.6 L139.6 92.3 L135.3 93.4 L131.1 91.3 L127.9 93.4 L124.7 96.6 L123.6 101.9 L121.5 107.2 L118.3 112.5 L116.2 107.2 L114 101.9 L110.8 97.6 L106.6 94.4 L103.8 89.1 L107 82.7 L109.1 76.4 L104.9 73.2 L100.6 71 L97.4 66.8 L94.3 62.5 L87.9 61.5 L83.6 60.4 L79.4 63.6 L76.2 67.9 L73 71 L70.8 74.2 L66.6 72.5 L61.3 73.2 L58.5 77.4 L56 81.7 L53.8 76.4 L50.6 71 L48.5 66.8 L45.3 63.6 L41.1 62.5 L36.8 64.7 L32.5 63.6 L29.4 65.7 L25.1 63.2 L20.8 63.2Z" fill="#a83c16" stroke="#a83c16" stroke-width="1.6" stroke-linejoin="round"/><ellipse cx="17.7" cy="60.9" rx="0.9" ry="0.8" fill="#a03614" /><ellipse cx="20.1" cy="60.1" rx="1.5" ry="0.9" fill="#a03614" /><ellipse cx="21.1" cy="58.2" rx="0.8" ry="0.9" fill="#a03614" /><ellipse cx="30.2" cy="56.9" rx="1.5" ry="1.6" fill="#a03614" /><ellipse cx="34.8" cy="55.3" rx="1.3" ry="0.9" fill="#a03614" /><ellipse cx="36" cy="54.8" rx="1.7" ry="1.3" fill="#a03614" /><ellipse cx="38.6" cy="53.7" rx="1.7" ry="1.6" fill="#a03614" /><ellipse cx="39.9" cy="53.1" rx="1.2" ry="0.9" fill="#a03614" /><ellipse cx="41.9" cy="51.4" rx="0.8" ry="1.4" fill="#a03614" /><ellipse cx="43.2" cy="50.8" rx="1.1" ry="1.8" fill="#a03614" /><ellipse cx="43.7" cy="48.5" rx="1.4" ry="1" fill="#a03614" /><ellipse cx="44.6" cy="46.7" rx="1.3" ry="1.7" fill="#a03614" /><ellipse cx="44.5" cy="44.6" rx="1.5" ry="1.4" fill="#a03614" /><ellipse cx="45.6" cy="46" rx="1.2" ry="0.7" fill="#a03614" /><ellipse cx="47" cy="48.2" rx="1.5" ry="1.8" fill="#a03614" /><ellipse cx="47.2" cy="49.6" rx="1.6" ry="1.2" fill="#a03614" /><ellipse cx="51.3" cy="50.8" rx="0.9" ry="1.2" fill="#a03614" /><ellipse cx="52.6" cy="52.4" rx="1.1" ry="0.7" fill="#a03614" /><ellipse cx="53.2" cy="54.3" rx="1.1" ry="1" fill="#a03614" /><ellipse cx="54.7" cy="56.1" rx="0.9" ry="0.8" fill="#a03614" /><ellipse cx="55.3" cy="57.9" rx="0.9" ry="0.7" fill="#a03614" /><ellipse cx="56.8" cy="59.8" rx="0.8" ry="1.3" fill="#a03614" /><ellipse cx="60.7" cy="60.4" rx="1" ry="1.2" fill="#a03614" /><ellipse cx="61.7" cy="60.7" rx="1.7" ry="1.6" fill="#a03614" /><ellipse cx="62.9" cy="61.2" rx="1" ry="0.9" fill="#a03614" /><ellipse cx="65.4" cy="60.6" rx="0.8" ry="1.7" fill="#a03614" /><ellipse cx="67.1" cy="60.3" rx="1.7" ry="1.4" fill="#a03614" /><ellipse cx="69.8" cy="58.9" rx="0.9" ry="1.7" fill="#a03614" /><ellipse cx="73.1" cy="54.3" rx="1.4" ry="1.6" fill="#a03614" /><ellipse cx="74.5" cy="53.1" rx="1" ry="1.7" fill="#a03614" /><ellipse cx="77.7" cy="51.3" rx="1.4" ry="0.7" fill="#a03614" /><ellipse cx="79.4" cy="47.5" rx="0.8" ry="0.9" fill="#a03614" /><ellipse cx="79.9" cy="45.8" rx="1.7" ry="0.9" fill="#a03614" /><ellipse cx="81.9" cy="42.9" rx="1.7" ry="0.8" fill="#a03614" /><ellipse cx="88.7" cy="45.2" rx="1.4" ry="1.1" fill="#a03614" /><ellipse cx="92.1" cy="47.2" rx="0.7" ry="1.4" fill="#a03614" /><ellipse cx="94" cy="47.3" rx="0.9" ry="1.1" fill="#a03614" /><ellipse cx="95.9" cy="45.5" rx="1.6" ry="0.8" fill="#a03614" /><ellipse cx="97.3" cy="44" rx="1" ry="1" fill="#a03614" /><ellipse cx="99" cy="41.9" rx="0.8" ry="1.4" fill="#a03614" /><ellipse cx="99" cy="39" rx="1.6" ry="0.8" fill="#a03614" /><ellipse cx="99.4" cy="35.2" rx="1.2" ry="1.6" fill="#a03614" /><ellipse cx="101.4" cy="33.5" rx="0.9" ry="1.2" fill="#a03614" /><ellipse cx="102.4" cy="33.2" rx="1.5" ry="0.7" fill="#a03614" /><ellipse cx="103.9" cy="31.7" rx="1.5" ry="1.2" fill="#a03614" /><ellipse cx="103.9" cy="30.5" rx="1.1" ry="1.5" fill="#a03614" /><ellipse cx="105.1" cy="27.1" rx="1" ry="1.7" fill="#a03614" /><ellipse cx="106" cy="28.7" rx="1.7" ry="1.6" fill="#a03614" /><ellipse cx="106.2" cy="30.5" rx="1.5" ry="1.1" fill="#a03614" /><ellipse cx="106.7" cy="32.3" rx="0.9" ry="1.6" fill="#a03614" /><ellipse cx="107.4" cy="34.4" rx="1.3" ry="1.1" fill="#a03614" /><ellipse cx="106.6" cy="36.2" rx="1.7" ry="0.9" fill="#a03614" /><ellipse cx="106.8" cy="37.9" rx="0.7" ry="0.7" fill="#a03614" /><ellipse cx="114.5" cy="48" rx="1.3" ry="1.7" fill="#a03614" /><ellipse cx="121" cy="50.6" rx="1.5" ry="1.4" fill="#a03614" /><ellipse cx="119.1" cy="53.9" rx="1.4" ry="1.7" fill="#a03614" /><ellipse cx="116.9" cy="55.3" rx="1.1" ry="1.4" fill="#a03614" /><ellipse cx="114" cy="61.1" rx="1" ry="1.2" fill="#a03614" /><ellipse cx="113.1" cy="62.6" rx="1.5" ry="1.4" fill="#a03614" /><ellipse cx="114.9" cy="64.8" rx="0.9" ry="0.8" fill="#a03614" /><ellipse cx="119.2" cy="70.6" rx="1" ry="0.9" fill="#a03614" /><ellipse cx="125.1" cy="71.6" rx="1.7" ry="0.9" fill="#a03614" /><ellipse cx="126.9" cy="75.8" rx="1" ry="1.3" fill="#a03614" /><ellipse cx="127.8" cy="75.9" rx="1" ry="0.8" fill="#a03614" /><ellipse cx="130.1" cy="77.2" rx="1.7" ry="1.5" fill="#a03614" /><ellipse cx="131.2" cy="78.9" rx="1.7" ry="1.5" fill="#a03614" /><ellipse cx="132.8" cy="79.2" rx="1.3" ry="1.3" fill="#a03614" /><ellipse cx="134.6" cy="79.5" rx="0.8" ry="0.9" fill="#a03614" /><ellipse cx="137.3" cy="80.8" rx="1.6" ry="1.1" fill="#a03614" /><ellipse cx="139.1" cy="79.8" rx="1.7" ry="0.7" fill="#a03614" /><ellipse cx="142.4" cy="79.9" rx="1.6" ry="1" fill="#a03614" /><ellipse cx="144.2" cy="78.4" rx="0.9" ry="1.6" fill="#a03614" /><ellipse cx="147.4" cy="75.7" rx="1.1" ry="1.6" fill="#a03614" /><ellipse cx="148" cy="71.9" rx="1.7" ry="1" fill="#a03614" /><ellipse cx="149.5" cy="70.1" rx="0.7" ry="1.4" fill="#a03614" /><ellipse cx="150.7" cy="68.7" rx="1" ry="1.7" fill="#a03614" /><ellipse cx="151.4" cy="67.5" rx="1.7" ry="1.7" fill="#a03614" /><ellipse cx="154.9" cy="66.4" rx="1.3" ry="1.8" fill="#a03614" /><ellipse cx="156.2" cy="67" rx="1.2" ry="1.3" fill="#a03614" /><ellipse cx="158.5" cy="66.5" rx="0.8" ry="1.6" fill="#a03614" /><ellipse cx="161.5" cy="65.8" rx="1.6" ry="1.3" fill="#a03614" /><ellipse cx="163.3" cy="64.1" rx="1.4" ry="0.7" fill="#a03614" /><ellipse cx="163.6" cy="62.5" rx="0.9" ry="1.1" fill="#a03614" /><ellipse cx="166.2" cy="59.5" rx="1.1" ry="1.4" fill="#a03614" /><ellipse cx="166.7" cy="58.8" rx="1.5" ry="1.6" fill="#a03614" /><ellipse cx="167.5" cy="60.3" rx="1.5" ry="1.2" fill="#a03614" /><ellipse cx="167.3" cy="62.2" rx="1.7" ry="1" fill="#a03614" /><ellipse cx="169.1" cy="65.7" rx="1.1" ry="1.4" fill="#a03614" /><ellipse cx="169.7" cy="66.7" rx="1" ry="1" fill="#a03614" /><ellipse cx="172.5" cy="69" rx="1.8" ry="0.9" fill="#a03614" /><ellipse cx="173.7" cy="70.4" rx="1.4" ry="1.7" fill="#a03614" /><ellipse cx="173.5" cy="71.6" rx="1.2" ry="1.8" fill="#a03614" /><ellipse cx="173.5" cy="73.9" rx="0.8" ry="1.8" fill="#a03614" /><ellipse cx="173.7" cy="75.5" rx="1.7" ry="0.8" fill="#a03614" /><ellipse cx="176.7" cy="77" rx="1.5" ry="0.9" fill="#a03614" /><ellipse cx="177.4" cy="78.3" rx="1.1" ry="1.8" fill="#a03614" /><ellipse cx="179.2" cy="79.8" rx="0.9" ry="0.9" fill="#a03614" /><ellipse cx="184.4" cy="79.8" rx="1.7" ry="1.5" fill="#a03614" /><ellipse cx="186" cy="78.9" rx="0.9" ry="0.9" fill="#a03614" /><ellipse cx="187.5" cy="78.5" rx="1.1" ry="1.5" fill="#a03614" /><ellipse cx="191.1" cy="74.7" rx="1" ry="1.3" fill="#a03614" /><ellipse cx="192.9" cy="73.7" rx="1.1" ry="1.5" fill="#a03614" /><ellipse cx="194.7" cy="77.9" rx="0.9" ry="0.7" fill="#a03614" /><ellipse cx="197" cy="77.9" rx="1.7" ry="1.2" fill="#a03614" /><ellipse cx="198.2" cy="78.1" rx="1.1" ry="0.9" fill="#a03614" /><ellipse cx="200.2" cy="77.9" rx="1.2" ry="0.8" fill="#a03614" /><ellipse cx="202.6" cy="78.7" rx="1.2" ry="0.8" fill="#a03614" /><ellipse cx="204.5" cy="79.3" rx="1.2" ry="1.8" fill="#a03614" /><ellipse cx="202" cy="80.1" rx="1.4" ry="1.4" fill="#a03614" /><ellipse cx="199.7" cy="81" rx="1.6" ry="0.9" fill="#a03614" /><ellipse cx="198.3" cy="82.2" rx="1.2" ry="1" fill="#a03614" /><ellipse cx="196.7" cy="83.7" rx="1.4" ry="1.3" fill="#a03614" /><ellipse cx="190.8" cy="83.5" rx="1.3" ry="1.1" fill="#a03614" /><ellipse cx="187.4" cy="84.5" rx="1.7" ry="1.4" fill="#a03614" /><ellipse cx="184.5" cy="88.2" rx="0.8" ry="1.6" fill="#a03614" /><ellipse cx="180.4" cy="90.5" rx="1.4" ry="1.3" fill="#a03614" /><ellipse cx="179" cy="91.9" rx="1.7" ry="0.9" fill="#a03614" /><ellipse cx="178.6" cy="93.9" rx="1.8" ry="1.7" fill="#a03614" /><ellipse cx="178.2" cy="95" rx="1.3" ry="1.6" fill="#a03614" /><ellipse cx="176.5" cy="91.5" rx="1.2" ry="1.7" fill="#a03614" /><ellipse cx="176.1" cy="90.6" rx="1.6" ry="0.9" fill="#a03614" /><ellipse cx="168.9" cy="84.7" rx="1.3" ry="1.2" fill="#a03614" /><ellipse cx="168.4" cy="83.8" rx="1.4" ry="1.3" fill="#a03614" /><ellipse cx="167.4" cy="81.9" rx="1.2" ry="0.8" fill="#a03614" /><ellipse cx="166.4" cy="80.9" rx="1.1" ry="1" fill="#a03614" /><ellipse cx="164" cy="80.9" rx="0.8" ry="1.8" fill="#a03614" /><ellipse cx="162.9" cy="80.5" rx="1.2" ry="1" fill="#a03614" /><ellipse cx="161.1" cy="80.2" rx="1.3" ry="1" fill="#a03614" /><ellipse cx="158.4" cy="81.2" rx="1.4" ry="1.3" fill="#a03614" /><ellipse cx="156.7" cy="82" rx="1.8" ry="1.5" fill="#a03614" /><ellipse cx="156" cy="83.5" rx="1.1" ry="1" fill="#a03614" /><ellipse cx="154.3" cy="84.5" rx="0.9" ry="1.2" fill="#a03614" /><ellipse cx="153.3" cy="86.1" rx="1" ry="1.6" fill="#a03614" /><ellipse cx="149.5" cy="87.7" rx="0.8" ry="1.8" fill="#a03614" /><ellipse cx="147.2" cy="89.5" rx="0.7" ry="1.4" fill="#a03614" /><ellipse cx="146" cy="89.9" rx="1.8" ry="1.1" fill="#a03614" /><ellipse cx="144.8" cy="91.5" rx="1" ry="0.8" fill="#a03614" /><ellipse cx="143" cy="94.3" rx="1.8" ry="1.2" fill="#a03614" /><ellipse cx="142.8" cy="97.1" rx="1.1" ry="1.1" fill="#a03614" /><ellipse cx="141.2" cy="95" rx="1.5" ry="1.3" fill="#a03614" /><ellipse cx="141.1" cy="93.7" rx="1.5" ry="1.1" fill="#a03614" /><ellipse cx="139.5" cy="92" rx="0.7" ry="1" fill="#a03614" /><ellipse cx="137.4" cy="93.1" rx="1.5" ry="1.7" fill="#a03614" /><ellipse cx="135.5" cy="93.8" rx="1.1" ry="1.7" fill="#a03614" /><ellipse cx="133.6" cy="92.7" rx="1.8" ry="1.6" fill="#a03614" /><ellipse cx="131" cy="91.5" rx="1.7" ry="1.3" fill="#a03614" /><ellipse cx="129.9" cy="92.1" rx="1.1" ry="0.7" fill="#a03614" /><ellipse cx="126.4" cy="94.7" rx="0.9" ry="1.2" fill="#a03614" /><ellipse cx="124.2" cy="98.3" rx="1.6" ry="0.8" fill="#a03614" /><ellipse cx="123.8" cy="102.2" rx="1.2" ry="1.5" fill="#a03614" /><ellipse cx="122.5" cy="103.5" rx="1" ry="1.5" fill="#a03614" /><ellipse cx="122.4" cy="105.9" rx="1.6" ry="1.6" fill="#a03614" /><ellipse cx="119.2" cy="110.8" rx="1.5" ry="1.6" fill="#a03614" /><ellipse cx="117.8" cy="110.5" rx="1.4" ry="0.9" fill="#a03614" /><ellipse cx="116.6" cy="108.5" rx="1.8" ry="1.7" fill="#a03614" /><ellipse cx="115.7" cy="107.5" rx="1.5" ry="0.9" fill="#a03614" /><ellipse cx="113.8" cy="101.5" rx="0.8" ry="1.2" fill="#a03614" /><ellipse cx="113.1" cy="100.2" rx="1.6" ry="0.8" fill="#a03614" /><ellipse cx="111.6" cy="98.6" rx="0.9" ry="1.6" fill="#a03614" /><ellipse cx="110.4" cy="97.6" rx="1.1" ry="1.3" fill="#a03614" /><ellipse cx="109.6" cy="97" rx="1.1" ry="1.4" fill="#a03614" /><ellipse cx="107.8" cy="95.1" rx="1.6" ry="1.1" fill="#a03614" /><ellipse cx="107" cy="94.3" rx="0.9" ry="1" fill="#a03614" /><ellipse cx="105.6" cy="92.2" rx="1.6" ry="1.4" fill="#a03614" /><ellipse cx="104.9" cy="87.7" rx="1.2" ry="1.6" fill="#a03614" /><ellipse cx="105.9" cy="84" rx="1.2" ry="1.7" fill="#a03614" /><ellipse cx="107.4" cy="82.6" rx="1.3" ry="1" fill="#a03614" /><ellipse cx="107.3" cy="80.7" rx="1.1" ry="1.3" fill="#a03614" /><ellipse cx="109" cy="78.3" rx="0.9" ry="1.6" fill="#a03614" /><ellipse cx="106.2" cy="74.3" rx="1.4" ry="1.4" fill="#a03614" /><ellipse cx="105.3" cy="73.2" rx="0.8" ry="1" fill="#a03614" /><ellipse cx="102.7" cy="71.7" rx="1.3" ry="1" fill="#a03614" /><ellipse cx="98.8" cy="68.3" rx="1" ry="1.7" fill="#a03614" /><ellipse cx="97.3" cy="66.9" rx="0.9" ry="1.2" fill="#a03614" /><ellipse cx="95.5" cy="63.6" rx="1.8" ry="1.8" fill="#a03614" /><ellipse cx="94.5" cy="62.4" rx="0.7" ry="0.9" fill="#a03614" /><ellipse cx="92.6" cy="62.3" rx="0.8" ry="0.9" fill="#a03614" /><ellipse cx="91.1" cy="62.3" rx="1.2" ry="1.1" fill="#a03614" /><ellipse cx="88.1" cy="61.8" rx="1.2" ry="1" fill="#a03614" /><ellipse cx="85.9" cy="61.2" rx="1.7" ry="1.7" fill="#a03614" /><ellipse cx="83.6" cy="60.9" rx="0.8" ry="1.1" fill="#a03614" /><ellipse cx="82.3" cy="61.6" rx="0.9" ry="1.3" fill="#a03614" /><ellipse cx="80.7" cy="62.2" rx="1.1" ry="1.4" fill="#a03614" /><ellipse cx="79" cy="63.6" rx="1.4" ry="1" fill="#a03614" /><ellipse cx="78.2" cy="65.2" rx="0.7" ry="1.4" fill="#a03614" /><ellipse cx="77.6" cy="66.1" rx="1.6" ry="0.7" fill="#a03614" /><ellipse cx="75.9" cy="68.1" rx="1.5" ry="0.8" fill="#a03614" /><ellipse cx="74.8" cy="69.4" rx="1.1" ry="1.1" fill="#a03614" /><ellipse cx="73.1" cy="70.9" rx="0.8" ry="1.2" fill="#a03614" /><ellipse cx="69.1" cy="73.3" rx="1.1" ry="1.6" fill="#a03614" /><ellipse cx="66.9" cy="72.2" rx="1.4" ry="1.3" fill="#a03614" /><ellipse cx="63.2" cy="73.3" rx="0.7" ry="1.5" fill="#a03614" /><ellipse cx="61.5" cy="73.7" rx="0.7" ry="1.1" fill="#a03614" /><ellipse cx="60.8" cy="75" rx="0.7" ry="0.9" fill="#a03614" /><ellipse cx="59.7" cy="76.3" rx="1.3" ry="1.7" fill="#a03614" /><ellipse cx="56.6" cy="80.5" rx="1.5" ry="1.7" fill="#a03614" /><ellipse cx="55.5" cy="81.5" rx="1" ry="1.1" fill="#a03614" /><ellipse cx="55.4" cy="79.8" rx="1" ry="0.8" fill="#a03614" /><ellipse cx="54.1" cy="78.5" rx="1" ry="1.7" fill="#a03614" /><ellipse cx="53.7" cy="76.6" rx="1.3" ry="1.2" fill="#a03614" /><ellipse cx="52" cy="72.8" rx="1" ry="1.1" fill="#a03614" /><ellipse cx="50.8" cy="71" rx="1.3" ry="1.4" fill="#a03614" /><ellipse cx="48.3" cy="67" rx="1.5" ry="1.7" fill="#a03614" /><ellipse cx="46.9" cy="65.5" rx="1.1" ry="1.1" fill="#a03614" /><ellipse cx="45.2" cy="63.9" rx="1.1" ry="0.9" fill="#a03614" /><ellipse cx="43.3" cy="63.6" rx="1.7" ry="1.2" fill="#a03614" /><ellipse cx="41.2" cy="62.5" rx="1.3" ry="1.1" fill="#a03614" /><ellipse cx="32.9" cy="63.4" rx="1.7" ry="0.9" fill="#a03614" /><ellipse cx="30.9" cy="64.3" rx="1" ry="1.4" fill="#a03614" /><ellipse cx="29.3" cy="65.6" rx="1.7" ry="0.8" fill="#a03614" /><ellipse cx="27.9" cy="64.5" rx="1.1" ry="1.1" fill="#a03614" /><ellipse cx="26.6" cy="64.1" rx="1.2" ry="1.2" fill="#a03614" /><ellipse cx="25.1" cy="62.8" rx="1.4" ry="1.1" fill="#a03614" /><ellipse cx="20.9" cy="63" rx="1.4" ry="1.6" fill="#a03614" /><ellipse cx="19.5" cy="62.5" rx="0.9" ry="1.8" fill="#a03614" /></g><path d="M18.1 61 L23 57.2 L26.2 58.9 L30.4 56.8 L34.7 55.1 L40 53 L43.2 50.8 L44.9 44.9 L47.4 49.1 L52.8 51.9 L54.3 56.2 L57 59.3 L63.4 61.5 L69.8 59.3 L73 54 L77.2 50.8 L79.8 45.5 L81.5 43.4 L84.7 46.6 L88.3 45.5 L90.4 48.3 L95.3 46.6 L98.5 42.3 L99.6 34.9 L103.8 31.7 L104.9 27 L107 32.7 L107 38.1 L110.2 43.4 L112.3 47.6 L116.6 48.3 L120.8 50.4 L118.7 54 L115.5 57.2 L113.4 62.5 L115.5 66.8 L115.1 68.9 L119.4 71 L124.7 70 L126.8 75.3 L131.1 78.5 L137.4 80.6 L142.8 79.6 L147 75.3 L149.1 70 L152.8 65.7 L156.6 66.8 L160.8 66.8 L164 62.5 L166.8 58.3 L168.3 63.6 L170.4 68.9 L174 70 L173.6 75.3 L177.9 78.5 L182.1 81 L187.4 78.5 L192.8 73.8 L194.9 77.4 L200.2 78.1 L204.5 78.9 L200.2 81 L197 83.8 L192.8 82.7 L187.4 84.9 L184.3 88.1 L180 90.2 L178.3 95.5 L175.7 90.2 L171.5 89.1 L169.4 84.9 L166.2 81 L160.8 80.2 L156.6 82.3 L153.4 85.9 L149.1 88.1 L144.9 91.3 L142.8 96.6 L139.6 92.3 L135.3 93.4 L131.1 91.3 L127.9 93.4 L124.7 96.6 L123.6 101.9 L121.5 107.2 L118.3 112.5 L116.2 107.2 L114 101.9 L110.8 97.6 L106.6 94.4 L103.8 89.1 L107 82.7 L109.1 76.4 L104.9 73.2 L100.6 71 L97.4 66.8 L94.3 62.5 L87.9 61.5 L83.6 60.4 L79.4 63.6 L76.2 67.9 L73 71 L70.8 74.2 L66.6 72.5 L61.3 73.2 L58.5 77.4 L56 81.7 L53.8 76.4 L50.6 71 L48.5 66.8 L45.3 63.6 L41.1 62.5 L36.8 64.7 L32.5 63.6 L29.4 65.7 L25.1 63.2 L20.8 63.2Z" fill="#7c230e"/><ellipse cx="105.3" cy="58.6" rx="1" ry="2.2" fill="#621a0b" opacity="0.7"/><ellipse cx="45.6" cy="46.4" rx="1" ry="1.6" fill="#8e2e10" opacity="0.7"/><ellipse cx="96.9" cy="60.8" rx="1.8" ry="0.9" fill="#621a0b" opacity="0.7"/><ellipse cx="123.2" cy="79.6" rx="1" ry="1.2" fill="#8e2e10" opacity="0.7"/><ellipse cx="23.4" cy="57.9" rx="1.9" ry="1.7" fill="#8e2e10" opacity="0.7"/><ellipse cx="31.9" cy="56.2" rx="2.2" ry="1.7" fill="#621a0b" opacity="0.7"/><ellipse cx="99.5" cy="44.2" rx="1.5" ry="1.3" fill="#621a0b" opacity="0.7"/><ellipse cx="112" cy="88.9" rx="1.2" ry="2" fill="#621a0b" opacity="0.7"/><ellipse cx="93.2" cy="58.6" rx="2.2" ry="1.4" fill="#8e2e10" opacity="0.7"/><ellipse cx="123.4" cy="87.6" rx="0.9" ry="1.5" fill="#8e2e10" opacity="0.7"/><ellipse cx="119.4" cy="109.7" rx="0.8" ry="2.4" fill="#8e2e10" opacity="0.7"/><ellipse cx="121.1" cy="72.1" rx="1.7" ry="2.3" fill="#621a0b" opacity="0.7"/><ellipse cx="110.6" cy="82.3" rx="0.9" ry="1.8" fill="#621a0b" opacity="0.7"/><ellipse cx="134.6" cy="86" rx="1.5" ry="0.9" fill="#621a0b" opacity="0.7"/><ellipse cx="106.7" cy="73.2" rx="0.8" ry="2" fill="#621a0b" opacity="0.7"/><ellipse cx="83" cy="45.8" rx="2" ry="1.1" fill="#621a0b" opacity="0.7"/><ellipse cx="106.2" cy="72" rx="1.4" ry="1.8" fill="#621a0b" opacity="0.7"/><ellipse cx="65" cy="71.6" rx="1.1" ry="1.5" fill="#8e2e10" opacity="0.7"/><ellipse cx="68.9" cy="66.6" rx="1.8" ry="1.7" fill="#621a0b" opacity="0.7"/><ellipse cx="51.3" cy="61.2" rx="1.3" ry="1.1" fill="#621a0b" opacity="0.7"/><ellipse cx="85" cy="49.3" rx="1.3" ry="1.4" fill="#621a0b" opacity="0.7"/><ellipse cx="56.1" cy="73.9" rx="2.2" ry="1.1" fill="#621a0b" opacity="0.7"/><ellipse cx="31.6" cy="56.9" rx="2.2" ry="2" fill="#8e2e10" opacity="0.7"/><ellipse cx="117" cy="77.3" rx="2.2" ry="2.1" fill="#8e2e10" opacity="0.7"/><ellipse cx="44.7" cy="59.1" rx="2.3" ry="1.4" fill="#621a0b" opacity="0.7"/><ellipse cx="180.4" cy="82.2" rx="1" ry="2.3" fill="#621a0b" opacity="0.7"/><ellipse cx="105.6" cy="36.1" rx="1.3" ry="1.2" fill="#621a0b" opacity="0.7"/><ellipse cx="178.9" cy="88.9" rx="1.4" ry="1.7" fill="#8e2e10" opacity="0.7"/><ellipse cx="114.1" cy="101.2" rx="1.4" ry="1.9" fill="#8e2e10" opacity="0.7"/><ellipse cx="104.2" cy="50.9" rx="2.1" ry="1.7" fill="#8e2e10" opacity="0.7"/><ellipse cx="175.1" cy="86.2" rx="1.2" ry="1.2" fill="#621a0b" opacity="0.7"/><ellipse cx="170.8" cy="83" rx="1.5" ry="0.8" fill="#621a0b" opacity="0.7"/><ellipse cx="117.7" cy="84.7" rx="1" ry="2" fill="#8e2e10" opacity="0.7"/><ellipse cx="53.6" cy="67.6" rx="1.8" ry="1.6" fill="#8e2e10" opacity="0.7"/><ellipse cx="32.3" cy="61.7" rx="2" ry="2" fill="#621a0b" opacity="0.7"/><ellipse cx="141.1" cy="87.8" rx="1.7" ry="2.3" fill="#621a0b" opacity="0.7"/><ellipse cx="116.1" cy="94.1" rx="1.4" ry="2" fill="#621a0b" opacity="0.7"/><ellipse cx="170" cy="79.8" rx="2.1" ry="0.9" fill="#621a0b" opacity="0.7"/><ellipse cx="109" cy="51.2" rx="0.9" ry="2" fill="#621a0b" opacity="0.7"/><ellipse cx="160.1" cy="69.4" rx="1.7" ry="1.5" fill="#8e2e10" opacity="0.7"/><ellipse cx="112.5" cy="79" rx="2.1" ry="1.4" fill="#621a0b" opacity="0.7"/><ellipse cx="197.8" cy="81.4" rx="1.2" ry="1.7" fill="#621a0b" opacity="0.7"/><ellipse cx="96.1" cy="50.3" rx="1.8" ry="1" fill="#621a0b" opacity="0.7"/><ellipse cx="140.8" cy="83.3" rx="0.8" ry="2.1" fill="#8e2e10" opacity="0.7"/><ellipse cx="160.5" cy="72" rx="2.2" ry="2.3" fill="#621a0b" opacity="0.7"/><ellipse cx="47" cy="55.4" rx="0.8" ry="1.2" fill="#621a0b" opacity="0.7"/><ellipse cx="180.9" cy="89.2" rx="0.9" ry="2" fill="#621a0b" opacity="0.7"/><ellipse cx="172.1" cy="82.9" rx="1.7" ry="1.5" fill="#8e2e10" opacity="0.7"/><ellipse cx="118.9" cy="53.6" rx="2" ry="1.5" fill="#621a0b" opacity="0.7"/><ellipse cx="101.3" cy="67.4" rx="1.1" ry="1.5" fill="#621a0b" opacity="0.7"/><ellipse cx="115.2" cy="53.3" rx="1" ry="0.9" fill="#621a0b" opacity="0.7"/><ellipse cx="95.9" cy="57.6" rx="2.2" ry="1.9" fill="#8e2e10" opacity="0.7"/><ellipse cx="25.9" cy="61.5" rx="1.5" ry="0.9" fill="#621a0b" opacity="0.7"/><ellipse cx="107.4" cy="39.2" rx="1.1" ry="2" fill="#621a0b" opacity="0.7"/><ellipse cx="158.1" cy="81.4" rx="2.3" ry="1.9" fill="#621a0b" opacity="0.7"/><ellipse cx="89.4" cy="56.8" rx="1.4" ry="1.8" fill="#621a0b" opacity="0.7"/><ellipse cx="109.2" cy="85.9" rx="2.3" ry="2.3" fill="#621a0b" opacity="0.7"/><ellipse cx="97.8" cy="52.8" rx="1.5" ry="2.3" fill="#621a0b" opacity="0.7"/><ellipse cx="113.7" cy="54.1" rx="1.7" ry="1.7" fill="#621a0b" opacity="0.7"/><ellipse cx="126.8" cy="78.5" rx="2.3" ry="2.3" fill="#621a0b" opacity="0.7"/><ellipse cx="142.4" cy="82.3" rx="0.8" ry="1" fill="#621a0b" opacity="0.7"/><ellipse cx="57.8" cy="71" rx="0.8" ry="2.1" fill="#621a0b" opacity="0.7"/><ellipse cx="115.3" cy="75.6" rx="1.9" ry="1.7" fill="#8e2e10" opacity="0.7"/><ellipse cx="112.6" cy="80.8" rx="1" ry="1.9" fill="#621a0b" opacity="0.7"/><ellipse cx="131.8" cy="91.5" rx="1.9" ry="1.7" fill="#8e2e10" opacity="0.7"/><ellipse cx="61.2" cy="65.7" rx="2" ry="0.8" fill="#621a0b" opacity="0.7"/><ellipse cx="117.3" cy="54.2" rx="0.9" ry="1.3" fill="#621a0b" opacity="0.7"/><ellipse cx="172.3" cy="78" rx="1.5" ry="1.6" fill="#621a0b" opacity="0.7"/><ellipse cx="164.6" cy="63.6" rx="1.8" ry="1.2" fill="#621a0b" opacity="0.7"/><ellipse cx="164.8" cy="66.2" rx="0.9" ry="2" fill="#8e2e10" opacity="0.7"/><rect x="109.4" y="67.4" width="4.8" height="4.8" fill="#120606"/></svg></div>
<div class="a" id="status"></div><div class="a" id="statustxt">Done</div>
<div class="a" style="left:110px;top:421.4px;width:1.6px;height:1.6px;background:#1c3c9c"></div><div class="a" style="left:640.6px;top:421.4px;width:1.6px;height:1.6px;background:#1c3c9c"></div>
</body></html>
